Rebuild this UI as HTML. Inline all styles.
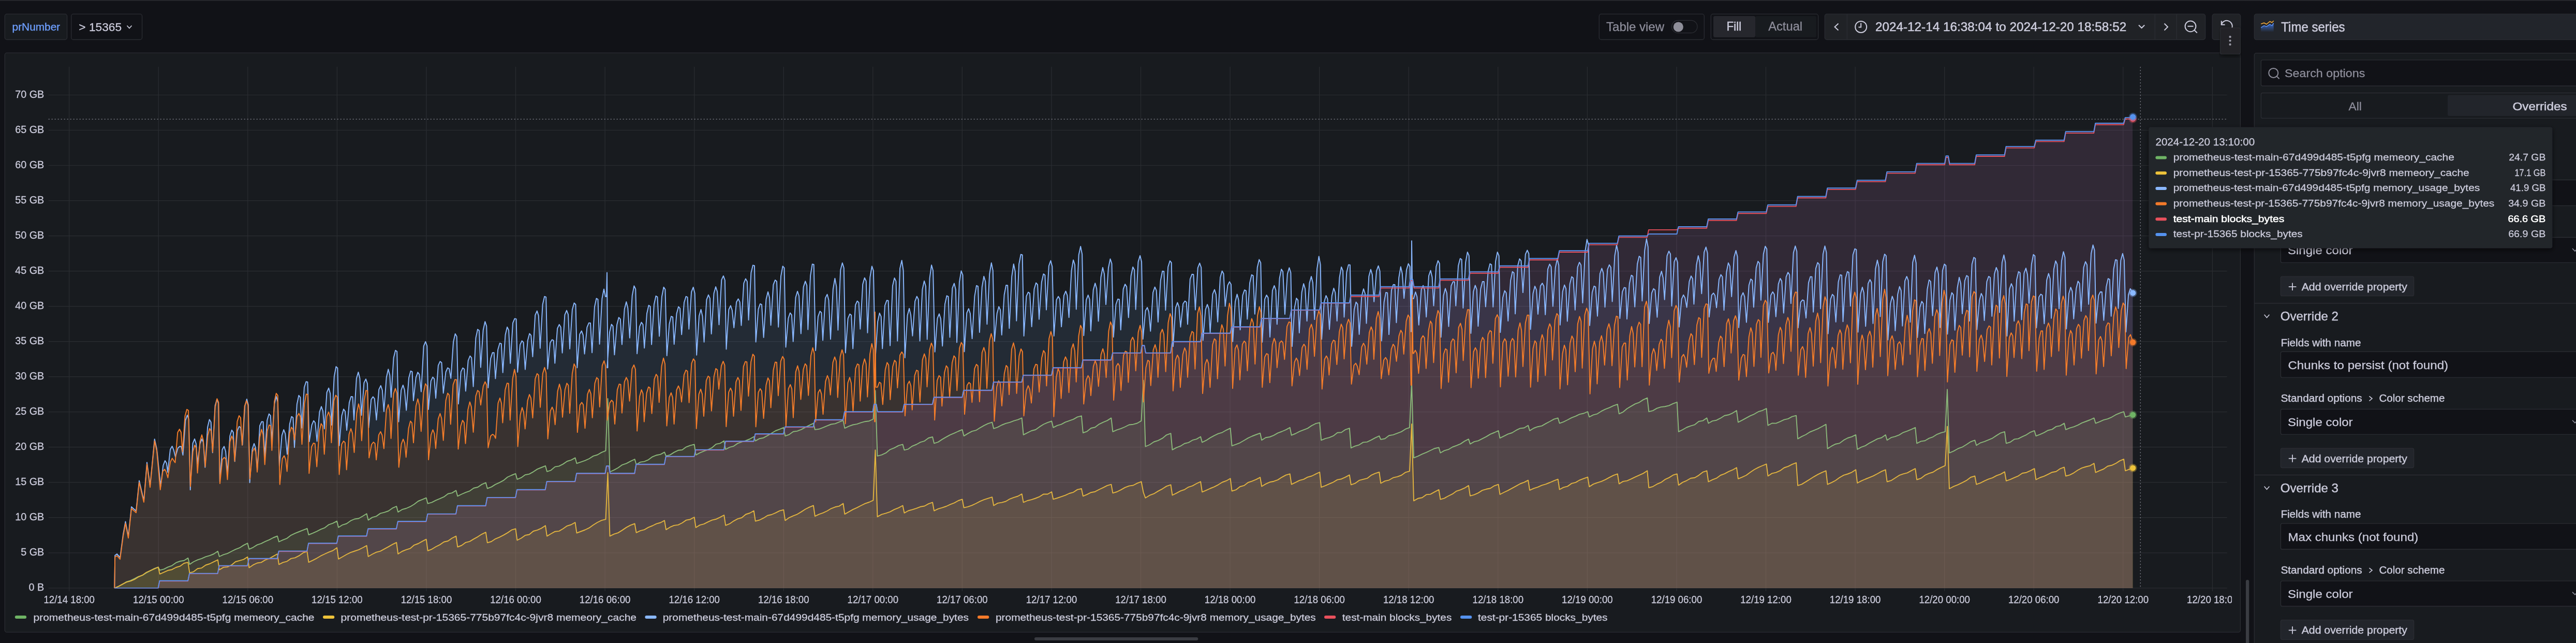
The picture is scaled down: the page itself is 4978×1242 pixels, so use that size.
<!DOCTYPE html><html><head><meta charset="utf-8"><style>html,body{margin:0;padding:0;background:#111217;overflow:hidden;width:4978px;height:1242px}text{font-family:"Liberation Sans",sans-serif;white-space:pre}</style></head><body><svg width="4978" height="1242" viewBox="0 0 4978 1242" style="display:block;will-change:transform;font-family:'Liberation Sans',sans-serif">
<defs><clipPath id="plot"><rect x="93.6" y="100" width="4210" height="1036.5"/></clipPath><clipPath id="panelc"><rect x="10" y="103" width="4303" height="1117"/></clipPath><filter id="sh" x="-5%" y="-10%" width="110%" height="125%"><feDropShadow dx="0" dy="3" stdDeviation="5" flood-color="#000" flood-opacity="0.6"/></filter></defs>
<rect x="0.0" y="0.0" width="4978.0" height="1242.0" rx="0" fill="#111217" />
<rect x="0.0" y="0.0" width="4978.0" height="1.5" rx="0" fill="#2a2b30" />
<rect x="9.3" y="27.2" width="120.3" height="49.3" rx="4" fill="#181b1f" stroke="#2b2d33" stroke-width="1.3" />
<text x="23.6" y="59.1" font-size="19.55" fill="#6e9fff" textLength="92.6" lengthAdjust="spacingAndGlyphs" stroke="#6e9fff" stroke-width="0.3" text-anchor="start" >prNumber</text>
<rect x="137.7" y="27.2" width="136.9" height="49.3" rx="4" fill="#111217" stroke="#2b2d33" stroke-width="1.3" />
<text x="152.3" y="60.0" font-size="22.21" fill="#ccccdc" textLength="82.8" lengthAdjust="spacingAndGlyphs" stroke="#ccccdc" stroke-width="0.28" text-anchor="start" >&gt; 15365</text>
<path d="M245.5,49.5 L250,54.5 L254.5,49.5" fill="none" stroke="#ccccdc" stroke-width="1.8"/>
<rect x="3090.3" y="27.2" width="203.0" height="49.3" rx="4" fill="#111217" stroke="#2b2d33" stroke-width="1.3" />
<text x="3104.1" y="60.1" font-size="23.32" fill="#8e8e9b" textLength="111.9" lengthAdjust="spacingAndGlyphs" stroke="#8e8e9b" stroke-width="0.28" text-anchor="start" >Table view</text>
<rect x="3230.5" y="39.3" width="49.5" height="24.4" rx="12.2" fill="#111217" stroke="#2d2f35" stroke-width="1.2" />
<circle cx="3243.3" cy="52" r="9.6" fill="#8e8e99"/>
<rect x="3306.3" y="27.2" width="207.3" height="49.3" rx="4" fill="#111217" stroke="#2b2d33" stroke-width="1.3" />
<rect x="3392.0" y="31.0" width="118.0" height="41.0" rx="3" fill="#181b1f" />
<rect x="3311.0" y="31.0" width="81.0" height="41.0" rx="3" fill="#26272d" />
<text x="3336.5" y="59.0" font-size="23.46" fill="#ccccdc" textLength="28.7" lengthAdjust="spacingAndGlyphs" stroke="#ccccdc" stroke-width="0.5" text-anchor="start" >Fill</text>
<text x="3417.2" y="59.0" font-size="23.46" fill="#8e8e9b" textLength="65.9" lengthAdjust="spacingAndGlyphs" stroke="#8e8e9b" stroke-width="0.28" text-anchor="start" >Actual</text>
<rect x="3526.3" y="27.2" width="735.3" height="49.3" rx="4" fill="#202226" stroke="#2b2d33" stroke-width="1.3" />
<line x1="3569.3" y1="27.5" x2="3569.3" y2="76.2" stroke="#2b2d33" stroke-width="1.3"/>
<line x1="4164.4" y1="27.5" x2="4164.4" y2="76.2" stroke="#2b2d33" stroke-width="1.3"/>
<line x1="4206.2" y1="27.5" x2="4206.2" y2="76.2" stroke="#2b2d33" stroke-width="1.3"/>
<path d="M3552.5,45.5 L3545.5,52 L3552.5,58.5" fill="none" stroke="#ccccdc" stroke-width="2"/>
<circle cx="3596.2" cy="51.9" r="11" fill="none" stroke="#ccccdc" stroke-width="2"/><path d="M3596.2,44.5 L3596.2,52.5 L3591.5,52.5" fill="none" stroke="#ccccdc" stroke-width="2"/>
<text x="3623.9" y="60.1" font-size="23.46" fill="#ccccdc" textLength="485.3" lengthAdjust="spacingAndGlyphs" stroke="#ccccdc" stroke-width="0.5" text-anchor="start" >2024-12-14 16:38:04 to 2024-12-20 18:58:52</text>
<path d="M4133,48.5 L4138.6,54 L4144.2,48.5" fill="none" stroke="#ccccdc" stroke-width="2"/>
<path d="M4182.5,45.5 L4189,52 L4182.5,58.5" fill="none" stroke="#ccccdc" stroke-width="2"/>
<circle cx="4233" cy="50.8" r="10.4" fill="none" stroke="#ccccdc" stroke-width="2"/><path d="M4240.5,58.3 L4245.8,63.5 M4227.5,50.8 L4238.5,50.8" fill="none" stroke="#ccccdc" stroke-width="2"/>
<rect x="4275.2" y="27.2" width="54.4" height="49.3" rx="4" fill="#202226" stroke="#2b2d33" stroke-width="1.3" />
<path d="M4292.6,47.5 A10.6,10.6 0 1 1 4313.3,54" fill="none" stroke="#ccccdc" stroke-width="2"/><path d="M4292.8,40.3 V47.8 H4299.6" fill="none" stroke="#ccccdc" stroke-width="2"/>
<rect x="9.3" y="102.2" width="4320.1" height="1119.0" rx="4" fill="#181b1f" stroke="#2b2d33" stroke-width="1.3" />
<path d="M93.6,183.5 H4303.7 M93.6,251.5 H4303.7 M93.6,319.5 H4303.7 M93.6,387.6 H4303.7 M93.6,455.6 H4303.7 M93.6,523.6 H4303.7 M93.6,591.6 H4303.7 M93.6,659.6 H4303.7 M93.6,727.7 H4303.7 M93.6,795.7 H4303.7 M93.6,863.7 H4303.7 M93.6,931.7 H4303.7 M93.6,999.7 H4303.7 M93.6,1067.8 H4303.7 M93.6,1135.8 H4303.7 M133.7,129 V1142 M306.3,129 V1142 M478.8,129 V1142 M651.4,129 V1142 M824.0,129 V1142 M996.5,129 V1142 M1169.1,129 V1142 M1341.7,129 V1142 M1514.3,129 V1142 M1686.8,129 V1142 M1859.4,129 V1142 M2032.0,129 V1142 M2204.5,129 V1142 M2377.1,129 V1142 M2549.7,129 V1142 M2722.2,129 V1142 M2894.8,129 V1142 M3067.4,129 V1142 M3240.0,129 V1142 M3412.5,129 V1142 M3585.1,129 V1142 M3757.7,129 V1142 M3930.2,129 V1142 M4102.8,129 V1142 M4275.4,129 V1142" stroke="#ccccdc" stroke-opacity="0.1" stroke-width="1.2" fill="none"/>
<text x="85.3" y="189.1" font-size="19.8" fill="#ccccdc" stroke="#ccccdc" stroke-width="0.28" text-anchor="end">70 GB</text>
<text x="85.3" y="257.1" font-size="19.8" fill="#ccccdc" stroke="#ccccdc" stroke-width="0.28" text-anchor="end">65 GB</text>
<text x="85.3" y="325.1" font-size="19.8" fill="#ccccdc" stroke="#ccccdc" stroke-width="0.28" text-anchor="end">60 GB</text>
<text x="85.3" y="393.2" font-size="19.8" fill="#ccccdc" stroke="#ccccdc" stroke-width="0.28" text-anchor="end">55 GB</text>
<text x="85.3" y="461.2" font-size="19.8" fill="#ccccdc" stroke="#ccccdc" stroke-width="0.28" text-anchor="end">50 GB</text>
<text x="85.3" y="529.2" font-size="19.8" fill="#ccccdc" stroke="#ccccdc" stroke-width="0.28" text-anchor="end">45 GB</text>
<text x="85.3" y="597.2" font-size="19.8" fill="#ccccdc" stroke="#ccccdc" stroke-width="0.28" text-anchor="end">40 GB</text>
<text x="85.3" y="665.2" font-size="19.8" fill="#ccccdc" stroke="#ccccdc" stroke-width="0.28" text-anchor="end">35 GB</text>
<text x="85.3" y="733.3" font-size="19.8" fill="#ccccdc" stroke="#ccccdc" stroke-width="0.28" text-anchor="end">30 GB</text>
<text x="85.3" y="801.3" font-size="19.8" fill="#ccccdc" stroke="#ccccdc" stroke-width="0.28" text-anchor="end">25 GB</text>
<text x="85.3" y="869.3" font-size="19.8" fill="#ccccdc" stroke="#ccccdc" stroke-width="0.28" text-anchor="end">20 GB</text>
<text x="85.3" y="937.3" font-size="19.8" fill="#ccccdc" stroke="#ccccdc" stroke-width="0.28" text-anchor="end">15 GB</text>
<text x="85.3" y="1005.3" font-size="19.8" fill="#ccccdc" stroke="#ccccdc" stroke-width="0.28" text-anchor="end">10 GB</text>
<text x="85.3" y="1073.4" font-size="19.8" fill="#ccccdc" stroke="#ccccdc" stroke-width="0.28" text-anchor="end">5 GB</text>
<text x="85.3" y="1141.4" font-size="19.8" fill="#ccccdc" stroke="#ccccdc" stroke-width="0.28" text-anchor="end">0 B</text>
<g clip-path="url(#panelc)">
<text x="133.7" y="1165.2" font-size="20.2" fill="#ccccdc" stroke="#ccccdc" stroke-width="0.28" text-anchor="middle" textLength="98.6" lengthAdjust="spacingAndGlyphs">12/14 18:00</text>
<text x="306.3" y="1165.2" font-size="20.2" fill="#ccccdc" stroke="#ccccdc" stroke-width="0.28" text-anchor="middle" textLength="98.6" lengthAdjust="spacingAndGlyphs">12/15 00:00</text>
<text x="478.8" y="1165.2" font-size="20.2" fill="#ccccdc" stroke="#ccccdc" stroke-width="0.28" text-anchor="middle" textLength="98.6" lengthAdjust="spacingAndGlyphs">12/15 06:00</text>
<text x="651.4" y="1165.2" font-size="20.2" fill="#ccccdc" stroke="#ccccdc" stroke-width="0.28" text-anchor="middle" textLength="98.6" lengthAdjust="spacingAndGlyphs">12/15 12:00</text>
<text x="824.0" y="1165.2" font-size="20.2" fill="#ccccdc" stroke="#ccccdc" stroke-width="0.28" text-anchor="middle" textLength="98.6" lengthAdjust="spacingAndGlyphs">12/15 18:00</text>
<text x="996.5" y="1165.2" font-size="20.2" fill="#ccccdc" stroke="#ccccdc" stroke-width="0.28" text-anchor="middle" textLength="98.6" lengthAdjust="spacingAndGlyphs">12/16 00:00</text>
<text x="1169.1" y="1165.2" font-size="20.2" fill="#ccccdc" stroke="#ccccdc" stroke-width="0.28" text-anchor="middle" textLength="98.6" lengthAdjust="spacingAndGlyphs">12/16 06:00</text>
<text x="1341.7" y="1165.2" font-size="20.2" fill="#ccccdc" stroke="#ccccdc" stroke-width="0.28" text-anchor="middle" textLength="98.6" lengthAdjust="spacingAndGlyphs">12/16 12:00</text>
<text x="1514.3" y="1165.2" font-size="20.2" fill="#ccccdc" stroke="#ccccdc" stroke-width="0.28" text-anchor="middle" textLength="98.6" lengthAdjust="spacingAndGlyphs">12/16 18:00</text>
<text x="1686.8" y="1165.2" font-size="20.2" fill="#ccccdc" stroke="#ccccdc" stroke-width="0.28" text-anchor="middle" textLength="98.6" lengthAdjust="spacingAndGlyphs">12/17 00:00</text>
<text x="1859.4" y="1165.2" font-size="20.2" fill="#ccccdc" stroke="#ccccdc" stroke-width="0.28" text-anchor="middle" textLength="98.6" lengthAdjust="spacingAndGlyphs">12/17 06:00</text>
<text x="2032.0" y="1165.2" font-size="20.2" fill="#ccccdc" stroke="#ccccdc" stroke-width="0.28" text-anchor="middle" textLength="98.6" lengthAdjust="spacingAndGlyphs">12/17 12:00</text>
<text x="2204.5" y="1165.2" font-size="20.2" fill="#ccccdc" stroke="#ccccdc" stroke-width="0.28" text-anchor="middle" textLength="98.6" lengthAdjust="spacingAndGlyphs">12/17 18:00</text>
<text x="2377.1" y="1165.2" font-size="20.2" fill="#ccccdc" stroke="#ccccdc" stroke-width="0.28" text-anchor="middle" textLength="98.6" lengthAdjust="spacingAndGlyphs">12/18 00:00</text>
<text x="2549.7" y="1165.2" font-size="20.2" fill="#ccccdc" stroke="#ccccdc" stroke-width="0.28" text-anchor="middle" textLength="98.6" lengthAdjust="spacingAndGlyphs">12/18 06:00</text>
<text x="2722.2" y="1165.2" font-size="20.2" fill="#ccccdc" stroke="#ccccdc" stroke-width="0.28" text-anchor="middle" textLength="98.6" lengthAdjust="spacingAndGlyphs">12/18 12:00</text>
<text x="2894.8" y="1165.2" font-size="20.2" fill="#ccccdc" stroke="#ccccdc" stroke-width="0.28" text-anchor="middle" textLength="98.6" lengthAdjust="spacingAndGlyphs">12/18 18:00</text>
<text x="3067.4" y="1165.2" font-size="20.2" fill="#ccccdc" stroke="#ccccdc" stroke-width="0.28" text-anchor="middle" textLength="98.6" lengthAdjust="spacingAndGlyphs">12/19 00:00</text>
<text x="3240.0" y="1165.2" font-size="20.2" fill="#ccccdc" stroke="#ccccdc" stroke-width="0.28" text-anchor="middle" textLength="98.6" lengthAdjust="spacingAndGlyphs">12/19 06:00</text>
<text x="3412.5" y="1165.2" font-size="20.2" fill="#ccccdc" stroke="#ccccdc" stroke-width="0.28" text-anchor="middle" textLength="98.6" lengthAdjust="spacingAndGlyphs">12/19 12:00</text>
<text x="3585.1" y="1165.2" font-size="20.2" fill="#ccccdc" stroke="#ccccdc" stroke-width="0.28" text-anchor="middle" textLength="98.6" lengthAdjust="spacingAndGlyphs">12/19 18:00</text>
<text x="3757.7" y="1165.2" font-size="20.2" fill="#ccccdc" stroke="#ccccdc" stroke-width="0.28" text-anchor="middle" textLength="98.6" lengthAdjust="spacingAndGlyphs">12/20 00:00</text>
<text x="3930.2" y="1165.2" font-size="20.2" fill="#ccccdc" stroke="#ccccdc" stroke-width="0.28" text-anchor="middle" textLength="98.6" lengthAdjust="spacingAndGlyphs">12/20 06:00</text>
<text x="4102.8" y="1165.2" font-size="20.2" fill="#ccccdc" stroke="#ccccdc" stroke-width="0.28" text-anchor="middle" textLength="98.6" lengthAdjust="spacingAndGlyphs">12/20 12:00</text>
<text x="4275.4" y="1165.2" font-size="20.2" fill="#ccccdc" stroke="#ccccdc" stroke-width="0.28" text-anchor="middle" textLength="98.6" lengthAdjust="spacingAndGlyphs">12/20 18:00</text>
</g>
<g clip-path="url(#plot)">
<path d="M221.3,1136.0 L229.4,1132.5 L237.1,1128.4 L244.7,1123.6 L252.3,1121.4 L260.0,1117.5 L267.6,1113.6 L275.3,1111.2 L282.9,1106.5 L290.5,1102.4 L298.2,1098.2 L305.8,1095.5 L308.8,1101.3 L316.6,1099.3 L324.4,1095.3 L332.2,1092.6 L340.0,1086.9 L347.8,1084.0 L355.6,1082.7 L363.4,1077.9 L366.4,1090.1 L374.1,1085.0 L381.9,1081.4 L389.7,1078.8 L397.5,1075.3 L405.3,1073.2 L413.1,1070.0 L420.9,1064.8 L423.9,1075.0 L431.7,1071.3 L439.5,1069.1 L447.3,1065.0 L455.1,1061.2 L462.9,1058.2 L470.7,1053.1 L478.4,1049.3 L481.4,1060.8 L489.2,1057.3 L497.0,1052.4 L504.8,1049.9 L512.6,1045.8 L520.4,1042.7 L528.2,1038.5 L536.0,1035.5 L539.0,1046.5 L546.8,1042.9 L554.6,1039.8 L562.4,1033.8 L570.2,1030.2 L578.0,1027.0 L585.8,1023.8 L593.5,1020.8 L596.5,1033.0 L604.3,1029.8 L612.1,1026.3 L619.9,1022.4 L627.7,1019.3 L635.5,1013.3 L643.3,1010.7 L651.1,1006.6 L654.1,1018.7 L661.9,1013.8 L669.7,1011.5 L677.5,1005.9 L685.3,1002.5 L693.1,1001.5 L700.9,997.0 L708.6,992.3 L711.6,1004.6 L719.4,999.4 L727.2,997.1 L735.0,991.6 L742.8,989.7 L750.6,987.0 L758.4,981.4 L766.2,978.0 L769.2,989.1 L777.0,984.2 L784.8,982.0 L792.6,978.7 L800.4,974.0 L808.2,968.0 L816.0,964.8 L823.7,961.7 L826.7,972.7 L834.5,970.4 L842.3,966.3 L850.1,963.2 L857.9,959.7 L865.7,953.7 L873.5,952.1 L881.3,947.4 L884.3,958.4 L892.1,954.5 L899.9,951.1 L907.7,948.3 L915.5,942.8 L923.3,941.0 L931.1,935.6 L938.8,932.3 L941.8,943.5 L949.6,940.6 L957.4,935.6 L965.2,932.2 L973.0,927.9 L980.8,921.5 L988.6,918.0 L996.4,914.9 L999.4,925.8 L1007.2,922.7 L1015.0,917.1 L1022.8,915.6 L1030.6,911.3 L1038.4,906.1 L1046.2,903.0 L1054.0,899.8 L1057.0,910.8 L1064.7,908.3 L1072.5,901.6 L1080.3,900.4 L1088.1,896.4 L1095.9,891.0 L1103.7,888.6 L1111.5,884.3 L1114.5,895.2 L1122.5,892.3 L1130.5,889.6 L1138.5,886.0 L1146.5,880.9 L1154.5,878.5 L1162.5,873.9 L1170.5,870.7 L1174.5,770.0 L1178.5,911.5 L1186.5,907.8 L1194.5,903.5 L1202.5,897.8 L1210.6,895.2 L1218.6,890.8 L1226.6,887.0 L1229.6,897.2 L1237.4,892.6 L1245.2,891.4 L1253.0,888.1 L1260.8,882.3 L1268.6,879.2 L1276.4,877.6 L1284.1,873.4 L1287.1,880.8 L1294.9,878.6 L1302.7,873.6 L1310.5,869.8 L1318.3,869.0 L1326.1,863.3 L1333.9,860.4 L1341.7,858.4 L1344.7,878.8 L1352.5,874.6 L1360.3,871.3 L1368.1,868.5 L1375.9,864.8 L1383.7,857.9 L1391.5,856.4 L1399.2,851.6 L1402.2,868.0 L1410.0,863.8 L1417.8,861.8 L1425.6,856.4 L1433.4,853.7 L1441.2,851.1 L1449.0,848.0 L1456.8,843.5 L1459.8,851.6 L1467.6,847.2 L1475.4,845.7 L1483.2,841.4 L1491.0,836.7 L1498.8,832.0 L1506.6,829.1 L1514.3,825.8 L1517.3,842.1 L1525.1,839.3 L1532.9,833.8 L1540.7,832.6 L1548.5,829.7 L1556.3,825.4 L1564.1,821.3 L1571.9,817.6 L1574.9,829.9 L1582.7,828.8 L1590.5,825.9 L1598.3,822.7 L1606.1,819.5 L1613.9,818.4 L1621.7,815.2 L1629.4,812.2 L1632.4,827.1 L1640.3,823.3 L1648.2,820.5 L1656.0,819.1 L1663.9,816.4 L1671.8,814.2 L1679.6,813.2 L1687.5,809.5 L1691.5,754.4 L1695.5,880.8 L1703.7,878.6 L1711.8,874.9 L1720.0,868.3 L1728.2,865.2 L1736.4,860.6 L1744.5,858.4 L1747.5,869.3 L1755.3,867.3 L1763.1,861.6 L1770.9,858.5 L1778.7,854.1 L1786.5,851.8 L1794.3,846.0 L1802.1,844.0 L1805.1,856.3 L1812.9,853.9 L1820.7,848.6 L1828.5,844.2 L1836.3,839.9 L1844.1,836.6 L1851.9,833.0 L1859.6,829.9 L1862.6,842.1 L1870.4,837.4 L1878.2,833.2 L1886.0,831.2 L1893.8,826.3 L1901.6,821.9 L1909.4,818.2 L1917.2,815.6 L1920.2,827.8 L1928.0,825.2 L1935.8,821.0 L1943.6,817.9 L1951.4,815.9 L1959.2,812.8 L1967.0,810.7 L1974.7,807.4 L1977.7,839.9 L1985.5,835.9 L1993.3,832.0 L2001.1,830.0 L2008.9,824.4 L2016.7,819.5 L2024.5,816.1 L2032.3,813.5 L2035.3,825.8 L2043.1,821.8 L2050.9,819.7 L2058.7,815.4 L2066.5,812.7 L2074.3,809.9 L2082.1,805.4 L2089.9,803.3 L2092.9,836.0 L2100.6,833.3 L2108.4,827.0 L2116.2,825.3 L2124.0,819.3 L2131.8,815.6 L2139.6,812.4 L2147.4,807.4 L2150.4,833.9 L2158.3,830.3 L2166.1,827.9 L2174.0,824.5 L2181.9,820.5 L2189.8,819.7 L2197.6,817.5 L2205.5,812.9 L2209.5,734.6 L2213.5,862.5 L2221.7,859.0 L2229.8,853.5 L2238.0,850.8 L2246.2,846.7 L2254.3,840.1 L2262.5,837.2 L2265.5,868.8 L2273.3,864.6 L2281.1,861.7 L2288.9,856.7 L2296.7,854.9 L2304.5,850.2 L2312.3,848.1 L2320.1,843.5 L2323.1,854.4 L2330.8,850.7 L2338.6,845.6 L2346.4,841.3 L2354.2,837.6 L2362.0,835.3 L2369.8,830.8 L2377.6,827.1 L2380.6,861.2 L2388.4,858.3 L2396.2,855.3 L2404.0,850.7 L2411.8,846.1 L2419.6,842.5 L2427.4,839.5 L2435.2,836.7 L2438.2,850.3 L2445.9,845.3 L2453.7,844.0 L2461.5,840.9 L2469.3,836.4 L2477.1,833.5 L2484.9,830.2 L2492.7,825.8 L2495.7,840.7 L2503.5,837.5 L2511.3,833.3 L2519.1,830.3 L2526.9,827.4 L2534.7,822.1 L2542.5,818.2 L2550.2,816.3 L2553.2,850.3 L2561.0,847.1 L2568.8,845.1 L2576.6,841.9 L2584.4,835.8 L2592.2,835.2 L2600.0,829.8 L2607.8,827.1 L2610.8,865.2 L2618.6,861.7 L2626.4,859.3 L2634.2,854.4 L2642.0,853.6 L2649.8,849.9 L2657.6,845.6 L2665.3,842.1 L2668.3,848.9 L2676.3,847.2 L2684.2,841.2 L2692.2,839.9 L2700.2,836.9 L2708.1,833.9 L2716.1,828.7 L2724.0,825.8 L2728.0,738.7 L2732.0,884.3 L2740.1,881.2 L2748.2,877.2 L2756.2,873.9 L2764.3,870.0 L2772.4,866.2 L2780.5,864.4 L2783.5,874.8 L2791.2,870.4 L2799.0,868.2 L2806.8,863.5 L2814.6,860.7 L2822.4,857.4 L2830.2,852.1 L2838.0,848.2 L2841.0,857.6 L2848.8,853.2 L2856.6,851.3 L2864.4,847.3 L2872.2,843.4 L2880.0,838.6 L2887.8,835.5 L2895.6,831.9 L2898.6,846.2 L2906.3,842.3 L2914.1,838.4 L2921.9,836.0 L2929.7,831.2 L2937.5,827.4 L2945.3,826.5 L2953.1,821.7 L2956.1,831.9 L2963.9,827.0 L2971.7,824.2 L2979.5,822.6 L2987.3,818.1 L2995.1,814.0 L3002.9,809.6 L3010.7,807.4 L3013.7,817.6 L3021.4,814.8 L3029.2,811.0 L3037.0,806.8 L3044.8,803.8 L3052.6,800.1 L3060.4,798.5 L3068.2,795.2 L3071.2,805.4 L3079.0,801.4 L3086.8,799.3 L3094.6,794.2 L3102.4,790.3 L3110.2,787.4 L3118.0,783.7 L3125.8,780.9 L3128.8,799.3 L3136.5,795.8 L3144.3,789.2 L3152.1,784.6 L3159.9,780.2 L3167.7,777.3 L3175.5,772.1 L3183.3,768.6 L3186.3,795.2 L3194.1,793.1 L3201.9,788.6 L3209.7,786.1 L3217.5,785.2 L3225.3,783.4 L3233.1,779.6 L3240.8,776.8 L3243.8,833.9 L3251.6,830.0 L3259.4,825.5 L3267.2,822.6 L3275.0,820.3 L3282.8,814.0 L3290.6,812.6 L3298.4,807.4 L3301.4,817.6 L3309.2,813.1 L3317.0,811.7 L3324.8,807.7 L3332.6,802.7 L3340.4,801.3 L3348.2,797.8 L3355.9,793.1 L3358.9,815.6 L3366.7,811.7 L3374.5,807.3 L3382.3,803.1 L3390.1,799.8 L3397.9,795.2 L3405.7,792.9 L3413.5,789.0 L3416.5,821.7 L3424.3,817.5 L3432.1,817.6 L3439.9,814.4 L3447.7,810.7 L3455.5,808.8 L3463.3,804.6 L3471.1,802.7 L3474.1,847.6 L3481.8,843.1 L3489.6,839.5 L3497.4,834.5 L3505.2,831.4 L3513.0,828.2 L3520.8,824.0 L3528.6,819.7 L3531.6,866.6 L3539.4,861.7 L3547.2,857.7 L3555.0,856.1 L3562.8,850.2 L3570.6,846.0 L3578.4,843.7 L3586.2,839.9 L3589.2,868.0 L3596.9,863.7 L3604.7,860.9 L3612.5,855.8 L3620.3,851.9 L3628.1,847.6 L3635.9,845.5 L3643.7,839.9 L3646.7,850.3 L3654.5,845.2 L3662.3,843.2 L3670.1,840.1 L3677.9,835.3 L3685.7,832.6 L3693.5,829.3 L3701.2,825.8 L3704.2,856.3 L3712.1,852.4 L3719.9,851.3 L3727.7,846.6 L3735.5,843.8 L3743.4,838.8 L3751.2,835.8 L3759.0,833.9 L3763.0,752.3 L3767.0,874.8 L3775.2,871.4 L3783.4,866.7 L3791.7,863.7 L3799.9,858.7 L3808.1,853.3 L3816.3,850.3 L3819.3,860.3 L3827.1,855.3 L3834.9,852.9 L3842.7,849.6 L3850.5,846.3 L3858.3,841.1 L3866.1,836.3 L3873.9,833.9 L3876.9,856.3 L3884.7,854.0 L3892.5,848.4 L3900.3,847.4 L3908.1,843.3 L3915.9,839.8 L3923.7,834.8 L3931.4,831.9 L3934.4,842.1 L3942.2,839.2 L3950.0,835.6 L3957.8,831.2 L3965.6,829.4 L3973.4,823.9 L3981.2,822.4 L3989.0,817.6 L3992.0,829.9 L3999.8,826.6 L4007.6,824.3 L4015.4,821.2 L4023.2,816.9 L4031.0,814.0 L4038.8,811.0 L4046.6,807.4 L4049.6,817.6 L4057.3,814.7 L4065.1,811.1 L4072.9,809.1 L4080.7,805.8 L4088.5,801.2 L4096.3,797.9 L4104.1,795.2 L4107.1,805.4 L4114.4,803.3 L4121.7,801.3 L4121.7,1136.0 L221.3,1136.0 Z" fill="#73BF69" fill-opacity="0.1" stroke="none"/>
<path d="M221.3,1136.0 L229.4,1132.4 L237.1,1128.1 L244.7,1124.4 L252.3,1122.4 L260.0,1119.2 L267.6,1114.3 L275.3,1110.9 L282.9,1105.5 L290.5,1102.2 L298.2,1098.8 L305.8,1095.5 L308.8,1108.8 L316.6,1105.4 L324.4,1101.8 L332.2,1100.2 L340.0,1096.0 L347.8,1093.7 L355.6,1088.0 L363.4,1086.1 L366.4,1106.5 L374.1,1104.3 L381.9,1098.2 L389.7,1097.1 L397.5,1091.5 L405.3,1089.0 L413.1,1085.2 L420.9,1081.3 L423.9,1100.6 L431.7,1095.9 L439.5,1095.1 L447.3,1091.4 L455.1,1085.0 L462.9,1082.8 L470.7,1080.6 L478.4,1075.7 L481.4,1096.5 L489.2,1091.2 L497.0,1087.5 L504.8,1086.4 L512.6,1081.6 L520.4,1078.8 L528.2,1074.4 L536.0,1070.0 L539.0,1090.4 L546.8,1086.4 L554.6,1084.3 L562.4,1078.9 L570.2,1077.4 L578.0,1073.4 L585.8,1067.7 L593.5,1065.1 L596.5,1086.1 L604.3,1082.4 L612.1,1078.3 L619.9,1073.7 L627.7,1070.0 L635.5,1066.3 L643.3,1063.5 L651.1,1057.9 L654.1,1079.9 L661.9,1075.5 L669.7,1071.0 L677.5,1067.2 L685.3,1064.5 L693.1,1061.8 L700.9,1058.0 L708.6,1053.8 L711.6,1075.0 L719.4,1070.5 L727.2,1066.7 L735.0,1064.6 L742.8,1060.4 L750.6,1056.1 L758.4,1051.7 L766.2,1047.8 L769.2,1070.0 L777.0,1065.0 L784.8,1061.9 L792.6,1059.4 L800.4,1052.8 L808.2,1050.0 L816.0,1045.7 L823.7,1041.7 L826.7,1063.9 L834.5,1060.8 L842.3,1056.0 L850.1,1052.1 L857.9,1046.8 L865.7,1045.0 L873.5,1039.5 L881.3,1035.6 L884.3,1056.5 L892.1,1053.5 L899.9,1047.8 L907.7,1045.9 L915.5,1041.1 L923.3,1036.8 L931.1,1031.8 L938.8,1028.2 L941.8,1048.4 L949.6,1046.0 L957.4,1040.8 L965.2,1037.7 L973.0,1033.6 L980.8,1029.1 L988.6,1023.7 L996.4,1021.3 L999.4,1043.5 L1007.2,1039.5 L1015.0,1033.9 L1022.8,1032.5 L1030.6,1026.0 L1038.4,1023.8 L1046.2,1020.4 L1054.0,1015.3 L1057.0,1035.6 L1064.7,1031.0 L1072.5,1026.7 L1080.3,1025.9 L1088.1,1021.3 L1095.9,1015.8 L1103.7,1013.5 L1111.5,1009.2 L1114.5,1029.5 L1122.5,1026.5 L1130.5,1023.5 L1138.5,1019.7 L1146.5,1014.0 L1154.5,1009.0 L1162.5,1005.2 L1170.5,1003.1 L1174.5,912.9 L1178.5,1035.6 L1186.5,1031.6 L1194.5,1029.1 L1202.5,1024.1 L1210.6,1018.6 L1218.6,1014.4 L1226.6,1011.5 L1229.6,1028.9 L1237.4,1025.1 L1245.2,1023.1 L1253.0,1018.7 L1260.8,1015.5 L1268.6,1011.7 L1276.4,1009.5 L1284.1,1005.4 L1287.1,1023.1 L1294.9,1018.2 L1302.7,1014.9 L1310.5,1013.9 L1318.3,1010.0 L1326.1,1004.6 L1333.9,1003.2 L1341.7,999.0 L1344.7,1019.0 L1352.5,1014.1 L1360.3,1012.1 L1368.1,1008.1 L1375.9,1004.6 L1383.7,1002.8 L1391.5,999.2 L1399.2,995.0 L1402.2,1014.9 L1410.0,1011.7 L1417.8,1006.3 L1425.6,1002.2 L1433.4,1000.0 L1441.2,993.5 L1449.0,991.0 L1456.8,986.7 L1459.8,1006.7 L1467.6,1004.5 L1475.4,1000.7 L1483.2,995.8 L1491.0,994.0 L1498.8,990.7 L1506.6,986.6 L1514.3,984.8 L1517.3,1005.4 L1525.1,999.8 L1532.9,996.3 L1540.7,993.3 L1548.5,988.6 L1556.3,983.5 L1564.1,979.7 L1571.9,976.5 L1574.9,997.2 L1582.7,993.4 L1590.5,990.6 L1598.3,987.0 L1606.1,982.3 L1613.9,979.3 L1621.7,977.6 L1629.4,972.5 L1632.4,993.1 L1640.3,988.6 L1648.2,984.2 L1656.0,980.7 L1663.9,976.5 L1671.8,972.7 L1679.6,970.0 L1687.5,966.3 L1691.5,869.3 L1695.5,998.2 L1703.7,993.6 L1711.8,991.4 L1720.0,988.7 L1728.2,984.2 L1736.4,980.8 L1744.5,976.5 L1747.5,990.8 L1755.3,986.5 L1763.1,984.4 L1770.9,981.9 L1778.7,978.8 L1786.5,977.5 L1794.3,973.2 L1802.1,970.4 L1805.1,986.7 L1812.9,982.9 L1820.7,980.7 L1828.5,978.0 L1836.3,974.3 L1844.1,971.4 L1851.9,967.0 L1859.6,964.4 L1862.6,980.6 L1870.4,978.9 L1878.2,976.1 L1886.0,972.5 L1893.8,968.3 L1901.6,965.2 L1909.4,962.6 L1917.2,960.2 L1920.2,976.5 L1928.0,971.9 L1935.8,970.6 L1943.6,968.5 L1951.4,963.8 L1959.2,960.8 L1967.0,958.5 L1974.7,954.2 L1977.7,970.4 L1985.5,967.0 L1993.3,965.1 L2001.1,962.5 L2008.9,959.3 L2016.7,954.4 L2024.5,954.5 L2032.3,950.0 L2035.3,964.4 L2043.1,962.0 L2050.9,959.3 L2058.7,956.7 L2066.5,953.0 L2074.3,950.8 L2082.1,945.6 L2089.9,944.0 L2092.9,958.3 L2100.6,955.1 L2108.4,951.2 L2116.2,949.7 L2124.0,945.5 L2131.8,941.8 L2139.6,937.8 L2147.4,935.7 L2150.4,952.3 L2158.3,950.0 L2166.1,946.2 L2174.0,941.7 L2181.9,938.6 L2189.8,937.5 L2197.6,933.3 L2205.5,930.3 L2209.5,951.0 L2213.5,961.8 L2221.7,956.7 L2229.8,953.7 L2238.0,948.6 L2246.2,944.3 L2254.3,939.1 L2262.5,936.4 L2265.5,956.5 L2273.3,952.6 L2281.1,948.4 L2288.9,945.8 L2296.7,940.8 L2304.5,938.4 L2312.3,934.0 L2320.1,930.3 L2323.1,950.4 L2330.8,947.1 L2338.6,943.5 L2346.4,940.3 L2354.2,936.3 L2362.0,931.5 L2369.8,928.7 L2377.6,924.2 L2380.6,948.5 L2388.4,946.2 L2396.2,940.0 L2404.0,937.9 L2411.8,932.0 L2419.6,929.3 L2427.4,926.2 L2435.2,922.1 L2438.2,939.5 L2445.9,934.9 L2453.7,931.3 L2461.5,929.7 L2469.3,926.9 L2477.1,921.8 L2484.9,917.7 L2492.7,915.3 L2495.7,935.6 L2503.5,931.9 L2511.3,927.9 L2519.1,925.8 L2526.9,921.7 L2534.7,919.5 L2542.5,915.7 L2550.2,912.0 L2553.2,941.2 L2561.0,938.2 L2568.8,934.7 L2576.6,931.3 L2584.4,926.6 L2592.2,925.2 L2600.0,921.7 L2607.8,917.4 L2610.8,936.4 L2618.6,933.7 L2626.4,927.9 L2634.2,925.9 L2642.0,923.9 L2649.8,917.9 L2657.6,914.3 L2665.3,912.0 L2668.3,933.5 L2676.3,929.2 L2684.2,927.3 L2692.2,922.7 L2700.2,920.8 L2708.1,918.0 L2716.1,912.3 L2724.0,910.1 L2728.0,819.0 L2732.0,967.4 L2740.1,962.8 L2748.2,961.2 L2756.2,955.4 L2764.3,954.6 L2772.4,950.1 L2780.5,945.9 L2783.5,964.6 L2791.2,962.3 L2799.0,958.0 L2806.8,954.2 L2814.6,948.6 L2822.4,946.2 L2830.2,942.7 L2838.0,937.9 L2841.0,957.8 L2848.8,955.6 L2856.6,952.1 L2864.4,947.1 L2872.2,944.8 L2880.0,943.3 L2887.8,938.3 L2895.6,935.7 L2898.6,955.0 L2906.3,951.0 L2914.1,947.4 L2921.9,943.2 L2929.7,938.9 L2937.5,934.5 L2945.3,931.6 L2953.1,927.7 L2956.1,946.9 L2963.9,943.4 L2971.7,940.9 L2979.5,937.3 L2987.3,935.1 L2995.1,932.0 L3002.9,928.6 L3010.7,925.7 L3013.7,945.5 L3021.4,941.4 L3029.2,939.4 L3037.0,933.9 L3044.8,931.9 L3052.6,927.3 L3060.4,924.4 L3068.2,921.6 L3071.2,940.1 L3079.0,935.1 L3086.8,932.4 L3094.6,929.8 L3102.4,926.3 L3110.2,922.1 L3118.0,918.1 L3125.8,915.4 L3128.8,934.6 L3136.5,929.9 L3144.3,928.6 L3152.1,925.2 L3159.9,921.4 L3167.7,917.9 L3175.5,914.4 L3183.3,909.3 L3186.3,942.0 L3194.1,939.8 L3201.9,935.2 L3209.7,931.9 L3217.5,926.2 L3225.3,922.6 L3233.1,917.7 L3240.8,915.4 L3243.8,937.1 L3251.6,931.6 L3259.4,928.3 L3267.2,923.7 L3275.0,922.8 L3282.8,918.1 L3290.6,911.9 L3298.4,909.3 L3301.4,930.5 L3309.2,926.7 L3317.0,923.7 L3324.8,918.0 L3332.6,915.2 L3340.4,910.9 L3348.2,907.7 L3355.9,903.2 L3358.9,924.8 L3366.7,921.6 L3374.5,918.0 L3382.3,912.2 L3390.1,907.0 L3397.9,902.8 L3405.7,899.5 L3413.5,896.3 L3416.5,919.5 L3424.3,914.4 L3432.1,912.6 L3439.9,909.2 L3447.7,903.5 L3455.5,900.8 L3463.3,896.9 L3471.1,893.8 L3474.1,937.9 L3481.8,935.4 L3489.6,930.6 L3497.4,925.7 L3505.2,920.8 L3513.0,916.4 L3520.8,912.6 L3528.6,909.3 L3531.6,935.7 L3539.4,932.2 L3547.2,928.0 L3555.0,922.3 L3562.8,917.9 L3570.6,915.5 L3578.4,912.3 L3586.2,907.3 L3589.2,933.0 L3596.9,928.9 L3604.7,925.5 L3612.5,922.4 L3620.3,919.2 L3628.1,915.0 L3635.9,910.6 L3643.7,907.3 L3646.7,930.5 L3654.5,928.2 L3662.3,923.2 L3670.1,918.2 L3677.9,915.3 L3685.7,913.3 L3693.5,909.1 L3701.2,905.2 L3704.2,926.5 L3712.1,923.9 L3719.9,917.9 L3727.7,914.4 L3735.5,912.0 L3743.4,906.9 L3751.2,902.8 L3759.0,899.3 L3763.0,823.6 L3767.0,944.0 L3775.2,939.7 L3783.4,936.3 L3791.7,932.4 L3799.9,928.2 L3808.1,922.0 L3816.3,919.5 L3819.3,935.7 L3827.1,932.8 L3834.9,928.8 L3842.7,925.4 L3850.5,922.9 L3858.3,918.7 L3866.1,915.8 L3873.9,911.4 L3876.9,928.9 L3884.7,926.1 L3892.5,922.6 L3900.3,919.3 L3908.1,914.0 L3915.9,912.7 L3923.7,909.2 L3931.4,905.2 L3934.4,926.5 L3942.2,922.5 L3950.0,919.9 L3957.8,916.1 L3965.6,912.2 L3973.4,910.7 L3981.2,905.3 L3989.0,902.4 L3992.0,919.5 L3999.8,917.3 L4007.6,913.3 L4015.4,908.0 L4023.2,903.9 L4031.0,901.5 L4038.8,899.6 L4046.6,895.0 L4049.6,912.6 L4057.3,909.1 L4065.1,906.0 L4072.9,900.5 L4080.7,898.8 L4088.5,895.2 L4096.3,890.1 L4104.1,886.9 L4107.1,909.3 L4114.4,906.7 L4121.7,904.0 L4121.7,1136.0 L221.3,1136.0 Z" fill="#F2CC0C" fill-opacity="0.1" stroke="none"/>
<path d="M221.3,1136.0 L222.2,1072.7 L226.0,1070.0 L232.0,1076.8 L238.0,1031.9 L242.5,1007.4 L248.0,1036.0 L254.0,978.9 L263.0,987.0 L269.0,928.5 L278.0,966.6 L284.0,893.1 L290.0,938.0 L298.7,848.2 L303.0,867.3 L310.5,939.2 L315.3,899.0 L318.9,889.8 L321.9,894.7 L324.2,912.2 L329.0,868.3 L332.6,861.9 L335.6,868.9 L339.0,882.6 L343.8,865.5 L347.4,862.2 L350.4,862.7 L353.5,879.1 L358.3,812.1 L361.9,801.9 L364.9,810.0 L367.7,946.3 L372.5,856.3 L376.1,847.8 L379.1,857.5 L381.6,896.0 L386.4,857.3 L390.0,847.9 L393.0,854.6 L396.3,902.7 L401.1,825.3 L404.7,810.3 L407.7,815.4 L410.8,874.4 L415.6,783.5 L419.2,771.2 L422.2,779.4 L424.7,930.2 L429.5,868.3 L433.1,862.3 L436.1,872.0 L439.5,914.7 L444.3,842.0 L447.9,830.7 L450.9,835.1 L453.7,891.4 L458.5,832.1 L462.1,823.8 L465.1,825.8 L468.5,859.5 L473.3,783.8 L476.9,771.0 L479.9,782.3 L482.6,932.3 L487.4,867.5 L491.0,856.7 L494.0,865.0 L497.2,908.2 L502.0,822.5 L505.6,814.4 L508.6,814.7 L511.4,882.9 L516.2,811.8 L519.8,799.5 L522.8,802.9 L525.4,851.1 L530.2,779.9 L533.8,765.4 L536.8,776.6 L539.9,900.4 L544.7,841.1 L548.3,830.0 L551.3,837.7 L555.0,877.5 L559.8,818.9 L563.4,804.6 L566.4,806.8 L569.0,864.3 L573.8,780.9 L577.4,763.8 L580.4,767.3 L583.1,826.8 L587.9,748.2 L591.5,737.3 L594.5,738.0 L597.7,853.1 L602.5,820.8 L606.1,812.7 L609.1,816.5 L612.6,852.5 L617.4,795.9 L621.0,785.2 L624.0,793.9 L626.8,828.3 L631.6,757.8 L635.2,749.6 L638.2,760.2 L641.0,821.3 L645.8,727.1 L649.4,708.3 L652.4,711.0 L655.6,860.9 L660.4,802.7 L664.0,790.2 L667.0,794.5 L670.1,831.2 L674.9,777.8 L678.5,766.0 L681.5,766.5 L684.0,811.2 L688.8,731.1 L692.4,718.8 L695.4,730.8 L698.6,802.3 L703.4,739.4 L707.0,732.2 L710.0,740.9 L712.4,826.4 L717.2,771.8 L720.8,766.4 L723.8,770.1 L727.4,811.2 L732.2,752.3 L735.8,744.8 L738.8,753.8 L741.9,794.9 L746.7,729.0 L750.3,713.3 L753.3,724.6 L755.8,767.4 L760.6,691.2 L764.2,676.7 L767.2,679.1 L770.4,814.7 L775.2,753.5 L778.8,743.9 L781.8,753.2 L785.2,792.6 L790.0,729.9 L793.6,716.7 L796.6,718.2 L798.9,774.0 L803.7,729.4 L807.3,719.1 L810.3,723.1 L813.9,756.6 L818.7,668.6 L822.3,659.9 L825.3,668.3 L827.9,791.0 L832.7,735.9 L836.3,728.4 L839.3,731.8 L842.1,769.2 L846.9,705.8 L850.5,698.2 L853.5,700.5 L856.7,759.5 L861.5,718.5 L865.1,710.5 L868.1,712.3 L871.3,730.9 L876.1,660.1 L879.7,644.7 L882.7,649.9 L885.9,780.2 L890.7,718.1 L894.3,710.7 L897.3,713.0 L899.9,755.5 L904.7,696.5 L908.3,687.5 L911.3,691.1 L914.6,746.8 L919.4,652.9 L923.0,636.3 L926.0,638.5 L928.9,709.6 L933.7,637.5 L937.3,621.1 L940.3,630.1 L943.3,749.1 L948.1,692.6 L951.7,681.1 L954.7,681.2 L957.4,731.4 L962.2,675.2 L965.8,662.8 L968.8,663.9 L971.7,719.7 L976.5,646.7 L980.1,631.7 L983.1,637.6 L986.2,701.9 L991.0,623.8 L994.6,615.4 L997.6,616.1 L1000.2,718.9 L1005.0,665.9 L1008.6,658.3 L1011.6,661.3 L1014.9,713.6 L1019.7,657.8 L1023.3,644.3 L1026.3,647.9 L1029.4,689.0 L1034.2,608.7 L1037.8,600.6 L1040.8,609.8 L1043.8,672.7 L1048.6,588.1 L1052.2,572.7 L1055.2,573.8 L1058.3,712.7 L1063.1,662.1 L1066.7,656.2 L1069.7,657.6 L1072.3,701.6 L1077.1,634.3 L1080.7,626.8 L1083.7,631.9 L1086.6,681.7 L1091.4,608.2 L1095.0,599.6 L1098.0,607.3 L1101.1,673.9 L1105.9,598.0 L1109.5,585.3 L1112.5,588.2 L1115.4,710.4 L1120.2,645.8 L1123.8,639.2 L1126.8,647.1 L1129.6,683.7 L1134.4,632.2 L1138.0,623.7 L1141.0,623.9 L1144.1,681.3 L1148.9,593.0 L1152.5,576.4 L1155.5,578.2 L1158.6,664.7 L1163.4,576.7 L1167.0,558.5 L1170.0,572.7 L1172.0,572.7 L1173.0,526.5 L1174.5,710.2 L1173.2,710.2 L1178.0,641.9 L1181.6,626.4 L1184.6,630.1 L1187.4,685.4 L1192.2,626.9 L1195.8,613.1 L1198.8,616.4 L1201.9,665.5 L1206.7,597.0 L1210.3,583.0 L1213.3,594.9 L1216.9,652.8 L1221.7,570.9 L1225.3,552.1 L1228.3,558.5 L1231.1,683.2 L1235.9,631.2 L1239.5,622.6 L1242.5,626.8 L1245.2,672.2 L1250.0,605.8 L1253.6,589.8 L1256.6,591.7 L1259.1,665.5 L1263.9,588.0 L1267.5,571.8 L1270.5,573.6 L1274.1,649.5 L1278.9,573.3 L1282.5,554.6 L1285.5,559.0 L1288.7,687.1 L1293.5,625.4 L1297.1,611.0 L1300.1,612.3 L1302.7,665.0 L1307.5,606.1 L1311.1,592.4 L1314.1,595.6 L1317.2,646.2 L1322.0,584.2 L1325.6,572.7 L1328.6,574.0 L1331.3,635.7 L1336.1,563.8 L1339.7,554.8 L1342.7,566.6 L1346.2,685.9 L1351.0,610.2 L1354.6,597.8 L1357.6,611.0 L1360.6,660.8 L1365.4,578.9 L1369.0,569.6 L1372.0,576.3 L1374.7,645.0 L1379.5,566.7 L1383.1,553.9 L1386.1,563.2 L1389.5,627.2 L1394.3,540.6 L1397.9,532.9 L1400.9,541.3 L1403.5,674.5 L1408.3,598.0 L1411.9,590.3 L1414.9,599.5 L1418.3,633.1 L1423.1,583.5 L1426.7,577.3 L1429.7,583.4 L1432.5,628.6 L1437.3,547.0 L1440.9,538.4 L1443.9,543.8 L1446.6,618.1 L1451.4,526.8 L1455.0,512.3 L1458.0,513.1 L1460.6,660.6 L1465.4,597.1 L1469.0,586.9 L1472.0,588.4 L1475.7,651.9 L1480.5,577.9 L1484.1,563.6 L1487.1,575.0 L1489.6,628.2 L1494.4,549.8 L1498.0,540.9 L1501.0,543.4 L1504.2,631.8 L1509.0,533.7 L1512.6,514.2 L1515.6,517.4 L1518.5,670.6 L1523.3,614.8 L1526.9,604.4 L1529.9,608.4 L1532.7,659.7 L1537.5,574.8 L1541.1,562.6 L1544.1,571.7 L1547.8,644.5 L1552.6,554.4 L1556.2,543.2 L1559.2,551.3 L1561.3,636.6 L1566.1,532.3 L1569.7,510.3 L1572.7,511.0 L1576.1,677.2 L1580.9,611.4 L1584.5,601.3 L1587.5,603.9 L1590.1,657.4 L1594.9,575.8 L1598.5,568.6 L1601.5,579.6 L1605.0,655.2 L1609.8,559.0 L1613.4,537.7 L1616.4,553.6 L1619.4,637.6 L1624.2,521.5 L1627.8,507.8 L1630.8,517.5 L1633.8,681.6 L1638.6,615.2 L1642.2,606.6 L1645.2,608.7 L1648.2,673.5 L1653.0,589.2 L1656.6,581.5 L1659.6,584.4 L1662.4,635.6 L1667.2,549.1 L1670.8,536.6 L1673.8,543.0 L1676.5,642.9 L1681.3,535.4 L1684.9,514.3 L1687.9,522.9 L1691.3,696.1 L1696.1,621.3 L1699.7,604.8 L1702.7,611.4 L1705.2,673.4 L1710.0,590.0 L1713.6,580.3 L1716.6,580.8 L1720.1,667.6 L1724.9,552.3 L1728.5,536.9 L1731.5,543.3 L1734.3,658.6 L1739.1,518.4 L1742.7,503.0 L1745.7,523.0 L1748.7,691.1 L1753.5,609.3 L1757.1,595.7 L1760.1,608.6 L1763.4,648.8 L1768.2,581.8 L1771.8,572.4 L1774.8,578.2 L1777.6,658.6 L1782.4,559.1 L1786.0,542.6 L1789.0,552.9 L1791.7,655.5 L1796.5,537.6 L1800.1,511.9 L1803.1,522.7 L1806.6,679.8 L1811.4,615.0 L1815.0,606.2 L1818.0,616.1 L1821.2,668.4 L1826.0,587.5 L1829.6,571.3 L1832.6,572.8 L1835.5,651.5 L1840.3,556.6 L1843.9,547.3 L1846.9,559.2 L1849.1,661.4 L1853.9,544.9 L1857.5,523.3 L1860.5,531.0 L1863.5,679.4 L1868.3,604.4 L1871.9,596.2 L1874.9,605.5 L1878.6,654.1 L1883.4,572.1 L1887.0,551.6 L1890.0,553.1 L1892.9,642.0 L1897.7,554.5 L1901.3,533.7 L1904.3,544.1 L1907.4,626.2 L1912.2,529.1 L1915.8,507.6 L1918.8,522.8 L1921.8,659.3 L1926.6,605.5 L1930.2,592.2 L1933.2,599.0 L1935.8,647.0 L1940.6,569.5 L1944.2,550.9 L1947.2,551.2 L1950.4,634.3 L1955.2,534.2 L1958.8,510.0 L1961.8,524.5 L1964.3,619.7 L1969.1,510.2 L1972.7,491.5 L1975.7,492.4 L1978.6,649.0 L1983.4,572.1 L1987.0,564.4 L1990.0,566.5 L1993.7,631.0 L1998.5,558.2 L2002.1,546.3 L2005.1,549.6 L2008.0,616.8 L2012.8,545.2 L2016.4,529.1 L2019.4,531.6 L2022.0,598.5 L2026.8,513.7 L2030.4,503.5 L2033.4,515.0 L2036.7,649.0 L2041.5,579.1 L2045.1,572.6 L2048.1,577.7 L2051.1,631.1 L2055.9,570.8 L2059.5,562.4 L2062.5,570.6 L2065.7,613.3 L2070.5,522.8 L2074.1,502.1 L2077.1,511.5 L2079.8,597.4 L2084.6,492.5 L2088.2,476.0 L2091.2,491.1 L2094.3,648.2 L2099.1,579.3 L2102.7,570.0 L2105.7,578.3 L2107.9,639.1 L2112.7,560.0 L2116.3,547.0 L2119.3,557.6 L2122.6,620.4 L2127.4,535.5 L2131.0,516.7 L2134.0,529.2 L2137.1,588.1 L2141.9,517.5 L2145.5,500.1 L2148.5,509.3 L2151.7,651.1 L2156.5,588.0 L2160.1,577.7 L2163.1,578.5 L2165.8,637.2 L2170.6,558.7 L2174.2,548.9 L2177.2,553.8 L2180.8,613.4 L2185.6,532.7 L2189.2,515.7 L2192.2,521.4 L2194.7,597.8 L2199.5,505.7 L2203.1,493.8 L2206.1,505.8 L2208.7,655.0 L2213.5,600.3 L2217.1,593.9 L2220.1,602.4 L2223.3,639.7 L2228.1,565.0 L2231.7,554.4 L2234.7,561.2 L2237.9,622.0 L2242.7,541.9 L2246.3,523.7 L2249.3,524.2 L2252.4,599.1 L2257.2,515.5 L2260.8,504.0 L2263.8,507.3 L2267.0,669.3 L2271.8,594.6 L2275.4,584.4 L2278.4,592.9 L2281.4,631.8 L2286.2,586.8 L2289.8,581.5 L2292.8,583.8 L2295.0,626.4 L2299.8,539.0 L2303.4,529.8 L2306.4,530.3 L2309.9,598.5 L2314.7,517.3 L2318.3,508.2 L2321.3,516.7 L2324.7,657.5 L2329.5,598.0 L2333.1,588.1 L2336.1,596.6 L2338.6,642.8 L2343.4,568.0 L2347.0,559.4 L2350.0,569.1 L2353.2,621.8 L2358.0,536.1 L2361.6,523.4 L2364.6,528.7 L2367.6,591.6 L2372.4,551.2 L2376.0,544.2 L2379.0,549.4 L2382.2,659.9 L2387.0,582.7 L2390.6,568.3 L2393.6,579.6 L2396.6,637.1 L2401.4,570.5 L2405.0,560.1 L2408.0,561.7 L2410.3,616.4 L2415.1,546.5 L2418.7,530.8 L2421.7,532.4 L2424.9,606.7 L2429.7,516.5 L2433.3,501.3 L2436.3,507.6 L2439.2,660.9 L2444.0,578.1 L2447.6,569.9 L2450.6,574.9 L2454.1,651.0 L2458.9,561.0 L2462.5,551.7 L2465.5,560.5 L2467.8,626.4 L2472.6,537.8 L2476.2,519.9 L2479.2,524.8 L2483.0,607.0 L2487.8,529.3 L2491.4,517.1 L2494.4,526.8 L2496.9,669.1 L2501.7,594.0 L2505.3,576.0 L2508.3,579.8 L2510.8,643.0 L2515.6,564.7 L2519.2,548.0 L2522.2,558.1 L2525.6,620.1 L2530.4,546.9 L2534.0,534.0 L2537.0,546.0 L2540.3,617.1 L2545.1,519.1 L2548.7,495.1 L2551.7,511.3 L2554.1,655.3 L2558.9,582.9 L2562.5,570.9 L2565.5,577.3 L2569.0,636.2 L2573.8,571.2 L2577.4,556.7 L2580.4,565.2 L2583.7,620.0 L2588.5,536.1 L2592.1,515.6 L2595.1,523.1 L2597.5,612.5 L2602.3,526.0 L2605.9,511.4 L2608.9,511.6 L2612.1,668.9 L2616.9,597.8 L2620.5,583.5 L2623.5,587.6 L2626.6,645.9 L2631.4,571.7 L2635.0,558.0 L2638.0,567.2 L2640.5,624.6 L2645.3,533.8 L2648.9,520.5 L2651.9,530.6 L2655.2,582.8 L2660.0,523.3 L2663.6,513.4 L2666.6,523.7 L2669.8,658.4 L2674.6,583.5 L2678.2,564.9 L2681.2,565.6 L2684.1,646.1 L2688.9,560.4 L2692.5,549.8 L2695.5,550.0 L2698.4,623.3 L2703.2,536.5 L2706.8,515.3 L2709.8,528.3 L2713.2,576.4 L2718.0,521.3 L2721.6,509.3 L2724.6,515.0 L2727.0,640.7 L2727.0,640.7 L2728.0,465.2 L2729.5,576.7 L2731.8,576.7 L2735.4,564.0 L2738.4,573.3 L2741.8,627.8 L2746.6,559.1 L2750.2,551.5 L2753.2,560.9 L2756.2,612.3 L2761.0,532.8 L2764.6,522.4 L2767.6,535.2 L2770.5,590.6 L2775.3,515.0 L2778.9,503.5 L2781.9,509.1 L2784.6,651.3 L2789.4,571.1 L2793.0,557.2 L2796.0,566.4 L2799.5,630.6 L2804.3,551.9 L2807.9,544.2 L2810.9,544.4 L2813.3,590.8 L2818.1,513.2 L2821.7,499.4 L2824.7,501.3 L2827.4,595.0 L2832.2,506.7 L2835.8,486.9 L2838.8,493.9 L2842.4,643.9 L2847.2,563.2 L2850.8,551.1 L2853.8,559.3 L2856.4,630.1 L2861.2,558.2 L2864.8,544.0 L2867.8,544.0 L2870.9,592.5 L2875.7,524.0 L2879.3,509.5 L2882.3,511.4 L2885.3,592.9 L2890.1,504.7 L2893.7,486.9 L2896.7,494.1 L2899.3,642.1 L2904.1,574.8 L2907.7,561.5 L2910.7,565.7 L2914.3,620.0 L2919.1,541.9 L2922.7,524.7 L2925.7,527.2 L2928.1,606.3 L2932.9,513.6 L2936.5,500.0 L2939.5,503.7 L2943.0,565.1 L2947.8,491.2 L2951.4,483.3 L2954.4,490.0 L2957.7,636.3 L2962.5,566.7 L2966.1,552.8 L2969.1,559.8 L2972.0,606.9 L2976.8,552.4 L2980.4,547.0 L2983.4,552.8 L2986.2,607.9 L2991.0,519.8 L2994.6,510.2 L2997.6,515.4 L3000.9,591.8 L3005.7,517.0 L3009.3,500.0 L3012.3,512.2 L3014.8,627.7 L3019.6,563.6 L3023.2,550.4 L3026.2,557.6 L3028.8,620.5 L3033.6,548.8 L3037.2,534.4 L3040.2,536.9 L3043.8,598.8 L3048.6,516.0 L3052.2,506.7 L3055.2,511.9 L3058.4,585.0 L3063.2,485.5 L3066.8,462.5 L3069.8,472.8 L3072.0,628.7 L3076.8,565.0 L3080.4,552.7 L3083.4,554.3 L3087.0,610.6 L3091.8,528.8 L3095.4,518.3 L3098.4,527.2 L3101.5,593.3 L3106.3,520.5 L3109.9,511.5 L3112.9,516.4 L3115.6,582.5 L3120.4,494.0 L3124.0,473.5 L3127.0,487.8 L3130.3,615.1 L3135.1,563.7 L3138.7,555.4 L3141.7,556.2 L3144.0,616.3 L3148.8,547.8 L3152.4,531.6 L3155.4,533.6 L3159.2,592.7 L3164.0,510.0 L3167.6,495.0 L3170.6,497.4 L3173.4,581.2 L3178.2,484.1 L3181.8,461.3 L3184.8,477.2 L3187.0,625.0 L3191.8,566.2 L3195.4,557.6 L3198.4,560.3 L3202.4,612.7 L3207.2,535.3 L3210.8,524.0 L3213.8,536.7 L3216.7,578.7 L3221.5,494.2 L3225.1,485.2 L3228.1,490.8 L3230.5,591.1 L3235.3,505.7 L3238.9,497.7 L3241.9,506.8 L3244.8,631.6 L3249.6,577.7 L3253.2,569.7 L3256.2,575.2 L3259.6,593.8 L3264.4,543.7 L3268.0,533.1 L3271.0,538.5 L3273.4,587.5 L3278.2,512.0 L3281.8,493.9 L3284.8,507.0 L3288.3,567.2 L3293.1,487.1 L3296.7,477.2 L3299.7,488.9 L3302.8,612.3 L3307.6,570.1 L3311.2,566.1 L3314.2,570.8 L3317.1,594.4 L3321.9,539.8 L3325.5,530.5 L3328.5,534.8 L3331.5,599.1 L3336.3,525.7 L3339.9,507.8 L3342.9,514.1 L3346.2,573.0 L3351.0,496.4 L3354.6,483.9 L3357.6,495.7 L3360.0,632.8 L3364.8,572.9 L3368.4,565.3 L3371.4,573.2 L3374.9,622.6 L3379.7,551.0 L3383.3,539.0 L3386.3,541.6 L3388.9,593.4 L3393.7,517.2 L3397.3,504.8 L3400.3,508.8 L3402.9,579.8 L3407.7,490.8 L3411.3,475.6 L3414.3,481.0 L3417.3,622.7 L3422.1,570.2 L3425.7,563.8 L3428.7,568.4 L3431.8,611.7 L3436.6,548.9 L3440.2,537.8 L3443.2,543.0 L3446.8,604.6 L3451.6,534.8 L3455.2,526.1 L3458.2,530.5 L3460.9,586.3 L3465.7,488.2 L3469.3,475.2 L3472.3,485.7 L3474.8,633.2 L3479.6,583.8 L3483.2,579.3 L3486.2,580.7 L3490.1,614.3 L3494.9,546.1 L3498.5,534.4 L3501.5,534.7 L3504.1,602.7 L3508.9,518.6 L3512.5,507.1 L3515.5,510.6 L3518.1,596.2 L3522.9,490.9 L3526.5,475.1 L3529.5,487.7 L3532.6,644.6 L3537.4,577.9 L3541.0,568.6 L3544.0,571.8 L3547.7,621.9 L3552.5,544.4 L3556.1,530.8 L3559.1,531.7 L3561.5,621.3 L3566.3,538.1 L3569.9,524.7 L3572.9,526.4 L3575.9,591.2 L3580.7,492.3 L3584.3,480.7 L3587.3,482.0 L3590.5,641.5 L3595.3,568.1 L3598.9,554.7 L3601.9,565.6 L3605.2,630.3 L3610.0,547.8 L3613.6,540.0 L3616.6,545.7 L3619.5,624.9 L3624.3,519.2 L3627.9,502.5 L3630.9,516.2 L3633.5,611.5 L3638.3,505.6 L3641.9,490.9 L3644.9,494.2 L3648.3,656.6 L3653.1,586.5 L3656.7,572.3 L3659.7,580.7 L3662.4,638.7 L3667.2,568.4 L3670.8,553.5 L3673.8,561.3 L3676.3,629.6 L3681.1,542.6 L3684.7,533.9 L3687.7,541.6 L3691.4,622.3 L3696.2,506.8 L3699.8,493.0 L3702.8,508.0 L3705.3,651.8 L3710.1,593.6 L3713.7,582.1 L3716.7,586.2 L3719.5,644.2 L3724.3,559.0 L3727.9,540.6 L3730.9,543.9 L3734.6,609.8 L3739.4,526.4 L3743.0,515.8 L3746.0,529.4 L3749.0,632.8 L3753.8,522.8 L3757.4,510.2 L3760.4,513.0 L3763.4,645.4 L3768.2,579.5 L3771.8,565.3 L3774.8,569.4 L3777.7,637.6 L3782.5,556.0 L3786.1,535.7 L3789.1,547.7 L3792.0,605.9 L3796.8,542.4 L3800.4,532.3 L3803.4,534.2 L3805.9,620.1 L3810.7,510.4 L3814.3,497.2 L3817.3,499.3 L3820.3,636.6 L3825.1,580.3 L3828.7,566.8 L3831.7,573.2 L3834.6,619.0 L3839.4,544.0 L3843.0,533.9 L3846.0,536.0 L3849.3,610.9 L3854.1,529.0 L3857.7,516.7 L3860.7,524.4 L3864.0,603.6 L3868.8,507.3 L3872.4,492.5 L3875.4,507.2 L3878.4,649.1 L3883.2,558.4 L3886.8,548.0 L3889.8,554.8 L3892.3,620.1 L3897.1,540.3 L3900.7,524.8 L3903.7,526.7 L3906.6,617.5 L3911.4,527.5 L3915.0,518.0 L3918.0,530.3 L3921.0,585.6 L3925.8,510.4 L3929.4,491.7 L3932.4,494.4 L3935.3,633.2 L3940.1,573.7 L3943.7,568.2 L3946.7,570.2 L3950.4,625.3 L3955.2,540.9 L3958.8,528.3 L3961.8,538.4 L3964.0,614.8 L3968.8,520.3 L3972.4,504.0 L3975.4,510.6 L3979.1,596.3 L3983.9,504.3 L3987.5,486.1 L3990.5,497.2 L3993.2,635.4 L3998.0,567.1 L4001.6,555.0 L4004.6,562.8 L4007.3,615.9 L4012.1,557.6 L4015.7,543.1 L4018.7,547.5 L4021.7,601.1 L4026.5,516.7 L4030.1,505.4 L4033.1,511.5 L4036.2,587.7 L4041.0,489.8 L4044.6,473.3 L4047.6,483.4 L4050.5,624.1 L4055.3,570.6 L4058.9,563.7 L4061.9,564.0 L4065.4,618.8 L4070.2,553.9 L4073.8,538.1 L4076.8,539.9 L4079.7,610.7 L4084.5,519.7 L4088.1,501.7 L4091.1,502.6 L4093.5,595.8 L4098.3,503.1 L4101.9,489.7 L4104.9,502.4 L4108.3,641.1 L4113.1,569.4 L4116.7,557.6 L4121.7,565.9 L4121.7,1136.0 L221.3,1136.0 Z" fill="#8AB8FF" fill-opacity="0.1" stroke="none"/>
<path d="M221.3,1136.0 L222.2,1076.1 L226.0,1073.4 L232.0,1080.2 L238.0,1035.3 L242.5,1010.8 L248.0,1039.4 L254.0,982.3 L263.0,990.4 L269.0,931.9 L278.0,970.0 L284.0,896.5 L290.0,941.4 L298.7,851.6 L303.0,870.7 L309.7,946.0 L314.5,910.6 L318.1,906.4 L321.1,911.2 L324.4,922.8 L329.2,892.4 L332.8,885.2 L335.8,889.7 L338.5,893.6 L343.3,835.2 L346.9,829.0 L349.9,835.0 L352.7,872.7 L357.5,803.6 L361.1,790.8 L364.1,792.8 L367.9,939.6 L372.7,872.6 L376.3,859.9 L379.3,865.7 L381.6,913.6 L386.4,852.8 L390.0,840.0 L393.0,850.7 L396.7,901.2 L401.5,841.2 L405.1,827.6 L408.1,832.8 L411.0,873.2 L415.8,786.2 L419.4,770.1 L422.4,777.1 L425.0,934.0 L429.8,887.5 L433.4,883.4 L436.4,887.1 L439.5,926.4 L444.3,853.4 L447.9,842.2 L450.9,850.1 L453.6,890.7 L458.4,814.2 L462.0,802.9 L465.0,807.0 L467.9,859.8 L472.7,784.3 L476.3,774.2 L479.3,782.9 L483.0,925.1 L487.8,873.1 L491.4,865.4 L494.4,873.3 L497.0,911.8 L501.8,845.2 L505.4,829.4 L508.4,839.4 L511.7,897.4 L516.5,832.2 L520.1,820.8 L523.1,822.7 L525.4,870.0 L530.2,775.5 L533.8,759.8 L536.8,763.9 L540.7,935.8 L545.5,886.0 L549.1,880.2 L552.1,887.5 L554.7,910.6 L559.5,836.9 L563.1,825.3 L566.1,828.9 L569.2,849.7 L574.0,804.8 L577.6,798.5 L580.6,805.0 L583.5,858.3 L588.3,779.0 L591.9,761.1 L594.9,762.5 L597.3,914.4 L602.1,863.0 L605.7,855.9 L608.7,857.0 L612.2,901.5 L617.0,833.1 L620.6,818.3 L623.6,823.0 L626.7,877.4 L631.5,804.5 L635.1,795.8 L638.1,805.4 L640.4,855.1 L645.2,773.9 L648.8,763.4 L651.8,766.9 L655.5,916.6 L660.3,857.9 L663.9,852.0 L666.9,854.9 L669.7,907.4 L674.5,839.0 L678.1,828.0 L681.1,836.8 L684.5,874.0 L689.3,798.2 L692.9,780.1 L695.9,791.6 L698.9,851.2 L703.7,772.6 L707.3,754.1 L710.3,755.2 L713.2,884.4 L718.0,858.5 L721.6,854.1 L724.6,856.4 L727.1,888.3 L731.9,840.1 L735.5,833.8 L738.5,840.5 L741.9,866.6 L746.7,792.0 L750.3,781.4 L753.3,793.7 L755.6,846.9 L760.4,760.6 L764.0,750.3 L767.0,759.4 L770.7,902.6 L775.5,857.6 L779.1,848.3 L782.1,855.8 L784.7,883.2 L789.5,827.4 L793.1,813.5 L796.1,816.8 L799.0,855.2 L803.8,784.4 L807.4,770.5 L810.4,782.5 L813.8,833.3 L818.6,757.4 L822.2,741.2 L825.2,745.8 L828.1,888.1 L832.9,840.0 L836.5,830.2 L839.5,837.5 L842.0,866.2 L846.8,809.1 L850.4,798.7 L853.4,808.2 L856.7,850.6 L861.5,773.4 L865.1,759.4 L868.1,763.1 L870.8,819.5 L875.6,743.1 L879.2,733.1 L882.2,733.4 L885.5,867.5 L890.3,823.0 L893.9,811.9 L896.9,816.4 L899.5,856.7 L904.3,791.1 L907.9,776.3 L910.9,785.9 L914.6,834.9 L919.4,764.9 L923.0,754.1 L926.0,756.8 L929.0,782.4 L933.8,746.0 L937.4,737.4 L940.4,743.5 L943.3,864.9 L948.1,842.2 L951.7,838.9 L954.7,840.8 L957.7,846.7 L962.5,778.5 L966.1,768.8 L969.1,779.2 L971.4,816.6 L976.2,753.0 L979.8,740.2 L982.8,740.8 L985.8,811.5 L990.6,731.9 L994.2,713.5 L997.2,727.2 L1000.6,862.5 L1005.4,801.5 L1009.0,787.1 L1012.0,796.5 L1014.7,828.5 L1019.5,773.9 L1023.1,762.0 L1026.1,769.1 L1029.4,807.2 L1034.2,731.8 L1037.8,721.7 L1040.8,724.5 L1044.0,786.7 L1048.8,721.5 L1052.4,709.8 L1055.4,720.6 L1058.6,847.7 L1063.4,794.2 L1067.0,786.4 L1070.0,793.4 L1072.7,820.3 L1077.5,755.7 L1081.1,742.0 L1084.1,753.7 L1087.0,805.9 L1091.8,752.7 L1095.4,740.2 L1098.4,744.2 L1101.0,798.2 L1105.8,721.6 L1109.4,702.9 L1112.4,708.9 L1115.8,835.1 L1120.6,782.4 L1124.2,777.3 L1127.2,781.8 L1130.5,827.3 L1135.3,761.5 L1138.9,752.2 L1141.9,760.9 L1144.7,807.0 L1149.5,740.3 L1153.1,729.3 L1156.1,732.4 L1158.9,786.0 L1163.7,706.2 L1167.3,697.0 L1170.3,706.8 L1173.5,811.5 L1178.3,778.1 L1181.9,773.1 L1184.9,776.4 L1188.1,819.1 L1192.9,752.9 L1196.5,742.0 L1199.5,742.6 L1201.9,797.7 L1206.7,737.7 L1210.3,729.1 L1213.3,735.3 L1216.6,774.7 L1221.4,712.3 L1225.0,704.9 L1228.0,713.2 L1231.2,832.5 L1236.0,765.8 L1239.6,752.8 L1242.6,760.4 L1244.8,814.6 L1249.6,759.1 L1253.2,747.4 L1256.2,749.4 L1259.6,798.7 L1264.4,732.3 L1268.0,723.0 L1271.0,727.2 L1273.7,777.2 L1278.5,707.4 L1282.1,691.6 L1285.1,702.9 L1288.5,822.6 L1293.3,767.6 L1296.9,758.7 L1299.9,767.9 L1302.6,819.1 L1307.4,753.5 L1311.0,745.4 L1314.0,752.5 L1317.1,776.5 L1321.9,723.9 L1325.5,715.0 L1328.5,717.0 L1331.6,777.8 L1336.4,702.0 L1340.0,693.2 L1343.0,697.4 L1345.7,828.0 L1350.5,761.3 L1354.1,751.7 L1357.1,761.4 L1360.0,804.0 L1364.8,735.0 L1368.4,726.6 L1371.4,729.0 L1374.9,793.7 L1379.7,727.3 L1383.3,711.9 L1386.3,714.4 L1389.1,751.8 L1393.9,706.6 L1397.5,697.9 L1400.5,705.3 L1403.3,824.1 L1408.1,757.7 L1411.7,749.7 L1414.7,756.2 L1417.5,804.0 L1422.3,737.6 L1425.9,729.1 L1428.9,735.1 L1431.9,792.8 L1436.7,708.2 L1440.3,698.4 L1443.3,699.2 L1446.4,765.1 L1451.2,698.9 L1454.8,684.1 L1457.8,687.9 L1460.6,824.4 L1465.4,757.9 L1469.0,750.8 L1472.0,755.5 L1475.6,808.1 L1480.4,743.7 L1484.0,729.9 L1487.0,735.7 L1489.6,787.5 L1494.4,715.0 L1498.0,699.5 L1501.0,699.9 L1503.9,764.2 L1508.7,697.8 L1512.3,688.6 L1515.3,693.7 L1518.8,823.4 L1523.6,750.8 L1527.2,742.8 L1530.2,751.1 L1532.9,806.8 L1537.7,718.4 L1541.3,706.5 L1544.3,718.1 L1547.5,771.5 L1552.3,713.8 L1555.9,702.7 L1558.9,706.6 L1562.2,763.8 L1567.0,687.1 L1570.6,671.7 L1573.6,682.7 L1576.2,814.6 L1581.0,758.5 L1584.6,752.2 L1587.6,761.4 L1590.5,800.2 L1595.3,736.6 L1598.9,725.5 L1601.9,733.0 L1604.7,762.8 L1609.5,700.2 L1613.1,689.5 L1616.1,697.9 L1618.8,767.6 L1623.6,689.1 L1627.2,675.6 L1630.2,685.4 L1633.6,818.5 L1638.4,739.3 L1642.0,729.0 L1645.0,740.2 L1648.5,795.8 L1653.3,712.2 L1656.9,703.0 L1659.9,704.9 L1662.3,774.7 L1667.1,706.8 L1670.7,693.2 L1673.7,702.8 L1676.3,766.6 L1681.1,683.9 L1684.7,663.6 L1687.7,676.0 L1690.9,814.5 L1690.0,814.5 L1691.0,602.6 L1692.5,747.9 L1695.7,747.9 L1699.3,738.3 L1702.3,740.2 L1705.9,781.3 L1710.7,714.3 L1714.3,700.2 L1717.3,705.0 L1720.3,771.9 L1725.1,708.2 L1728.7,695.9 L1731.7,699.4 L1734.3,749.1 L1739.1,685.9 L1742.7,679.7 L1745.7,684.5 L1748.9,803.3 L1753.7,742.6 L1757.3,736.3 L1760.3,745.5 L1762.7,791.8 L1767.5,725.4 L1771.1,715.1 L1774.1,716.5 L1777.8,776.5 L1782.6,695.1 L1786.2,683.5 L1789.2,692.3 L1791.5,747.2 L1796.3,675.8 L1799.9,662.6 L1802.9,670.3 L1806.2,811.2 L1811.0,734.9 L1814.6,725.6 L1817.6,728.5 L1820.3,784.4 L1825.1,719.7 L1828.7,706.5 L1831.7,710.6 L1835.1,767.6 L1839.9,701.0 L1843.5,687.3 L1846.5,691.4 L1849.3,754.3 L1854.1,672.5 L1857.7,661.6 L1860.7,666.0 L1864.0,800.2 L1868.8,744.2 L1872.4,738.7 L1875.4,741.2 L1878.4,777.2 L1883.2,712.1 L1886.8,703.8 L1889.8,706.7 L1892.9,776.0 L1897.7,681.3 L1901.3,671.2 L1904.3,681.3 L1907.1,750.1 L1911.9,658.7 L1915.5,644.4 L1918.5,655.4 L1921.4,813.6 L1926.2,747.0 L1929.8,735.4 L1932.8,740.4 L1936.0,784.0 L1940.8,721.4 L1944.4,706.0 L1947.4,709.4 L1950.1,762.3 L1954.9,674.7 L1958.5,662.2 L1961.5,675.1 L1964.6,759.9 L1969.4,687.6 L1973.0,674.0 L1976.0,679.5 L1978.5,803.2 L1983.3,754.3 L1986.9,745.0 L1989.9,752.0 L1993.1,778.5 L1997.9,712.6 L2001.5,703.7 L2004.5,704.6 L2008.2,757.3 L2013.0,691.5 L2016.6,677.1 L2019.6,681.8 L2022.4,745.4 L2027.2,654.1 L2030.8,640.5 L2033.8,650.7 L2036.4,804.7 L2041.2,728.2 L2044.8,711.9 L2047.8,719.1 L2050.6,769.6 L2055.4,699.0 L2059.0,689.3 L2062.0,695.9 L2065.6,758.3 L2070.4,674.5 L2074.0,664.1 L2077.0,677.9 L2079.7,737.8 L2084.5,648.9 L2088.1,628.4 L2091.1,634.9 L2094.2,780.3 L2099.0,733.8 L2102.6,725.6 L2105.6,730.9 L2108.0,764.1 L2112.8,708.0 L2116.4,696.7 L2119.4,704.8 L2122.8,746.3 L2127.6,685.1 L2131.2,673.6 L2134.2,683.9 L2137.6,729.1 L2142.4,639.6 L2146.0,621.8 L2149.0,629.0 L2152.1,773.0 L2156.9,708.0 L2160.5,701.9 L2163.5,706.9 L2166.3,754.3 L2171.1,686.4 L2174.7,678.3 L2177.7,679.9 L2180.4,738.5 L2185.2,658.7 L2188.8,651.4 L2191.8,658.1 L2194.8,716.3 L2199.6,641.8 L2203.2,628.5 L2206.2,641.2 L2209.6,776.2 L2214.4,710.0 L2218.0,695.9 L2221.0,697.9 L2223.8,744.8 L2228.6,676.1 L2232.2,665.7 L2235.2,676.7 L2237.7,728.7 L2242.5,644.4 L2246.1,636.1 L2249.1,645.7 L2252.7,717.9 L2257.5,623.1 L2261.1,605.7 L2264.1,613.7 L2266.9,755.0 L2271.7,695.1 L2275.3,685.9 L2278.3,692.0 L2280.9,748.2 L2285.7,684.7 L2289.3,672.0 L2292.3,679.2 L2295.0,728.8 L2299.8,651.7 L2303.4,640.3 L2306.4,642.6 L2309.4,712.7 L2314.2,605.4 L2317.8,592.8 L2320.8,610.4 L2324.0,760.1 L2328.8,703.6 L2332.4,694.2 L2335.4,701.9 L2338.4,748.3 L2343.2,665.7 L2346.8,654.4 L2349.8,657.5 L2352.7,731.6 L2357.5,646.1 L2361.1,627.3 L2364.1,635.6 L2367.4,706.9 L2372.2,609.3 L2375.8,585.7 L2378.8,597.4 L2382.0,750.2 L2386.8,673.5 L2390.4,666.2 L2393.4,677.0 L2396.0,733.7 L2400.8,665.2 L2404.4,658.8 L2407.4,662.1 L2410.5,716.1 L2415.3,631.4 L2418.9,615.4 L2421.9,623.7 L2425.3,703.2 L2430.1,609.3 L2433.7,592.5 L2436.7,603.3 L2439.2,748.1 L2444.0,689.8 L2447.6,683.0 L2450.6,684.6 L2453.9,739.1 L2458.7,666.2 L2462.3,653.6 L2465.3,661.9 L2467.8,710.2 L2472.6,662.7 L2476.2,658.5 L2479.2,661.8 L2482.3,694.2 L2487.1,630.6 L2490.7,622.0 L2493.7,622.7 L2496.7,745.4 L2501.5,699.6 L2505.1,691.6 L2508.1,697.3 L2511.3,725.3 L2516.1,671.8 L2519.7,664.9 L2522.7,669.3 L2525.8,713.4 L2530.6,635.7 L2534.2,626.3 L2537.2,637.5 L2540.1,688.2 L2544.9,614.0 L2548.5,600.5 L2551.5,608.0 L2554.8,751.5 L2559.6,694.2 L2563.2,687.5 L2566.2,693.3 L2568.4,724.4 L2573.2,664.4 L2576.8,657.1 L2579.8,658.8 L2583.4,704.1 L2588.2,641.0 L2591.8,626.0 L2594.8,633.2 L2597.5,693.2 L2602.3,627.5 L2605.9,616.7 L2608.9,623.8 L2611.6,742.0 L2616.4,705.6 L2620.0,701.6 L2623.0,707.6 L2626.5,723.9 L2631.3,670.5 L2634.9,662.9 L2637.9,668.6 L2641.3,703.5 L2646.1,642.3 L2649.7,631.3 L2652.7,639.1 L2654.9,694.0 L2659.7,615.4 L2663.3,601.7 L2666.3,615.3 L2669.2,731.4 L2674.0,695.5 L2677.6,690.5 L2680.6,695.4 L2683.8,724.2 L2688.6,674.5 L2692.2,664.9 L2695.2,669.2 L2698.6,698.0 L2703.4,648.9 L2707.0,638.0 L2710.0,643.0 L2712.7,684.0 L2717.5,620.3 L2721.1,608.4 L2724.1,613.4 L2726.7,744.0 L2728.0,744.0 L2729.0,570.0 L2730.5,682.7 L2731.5,682.7 L2735.1,676.6 L2738.1,682.6 L2741.4,721.2 L2746.2,654.4 L2749.8,648.4 L2752.8,652.3 L2755.8,711.8 L2760.6,637.7 L2764.2,620.2 L2767.2,625.2 L2770.4,700.4 L2775.2,616.1 L2778.8,599.7 L2781.8,606.3 L2784.9,750.5 L2789.7,684.0 L2793.3,673.7 L2796.3,676.0 L2799.2,738.3 L2804.0,661.4 L2807.6,654.6 L2810.6,657.5 L2813.9,720.1 L2818.7,632.5 L2822.3,624.4 L2825.3,635.9 L2827.6,696.4 L2832.4,617.1 L2836.0,598.3 L2839.0,598.3 L2842.7,748.8 L2847.5,679.5 L2851.1,671.6 L2854.1,677.7 L2856.7,730.4 L2861.5,661.6 L2865.1,651.6 L2868.1,656.8 L2870.8,729.4 L2875.6,646.1 L2879.2,638.6 L2882.2,640.4 L2884.9,701.7 L2889.7,615.6 L2893.3,607.8 L2896.3,614.0 L2899.4,747.2 L2904.2,662.2 L2907.8,654.3 L2910.8,659.5 L2914.4,726.7 L2919.2,660.9 L2922.8,653.7 L2925.8,658.2 L2928.9,728.1 L2933.7,638.2 L2937.3,623.6 L2940.3,638.6 L2943.0,708.0 L2947.8,623.9 L2951.4,608.6 L2954.4,608.7 L2957.7,747.9 L2962.5,673.3 L2966.1,658.3 L2969.1,662.8 L2971.7,737.0 L2976.5,661.5 L2980.1,646.4 L2983.1,655.5 L2986.3,725.2 L2991.1,637.1 L2994.7,625.4 L2997.7,632.4 L3000.1,695.2 L3004.9,618.5 L3008.5,605.6 L3011.5,609.5 L3014.6,751.3 L3019.4,683.2 L3023.0,666.6 L3026.0,675.7 L3029.2,743.2 L3034.0,663.2 L3037.6,648.9 L3040.6,655.0 L3044.0,718.0 L3048.8,625.8 L3052.4,611.2 L3055.4,620.7 L3057.6,711.0 L3062.4,608.5 L3066.0,595.2 L3069.0,602.5 L3072.6,760.7 L3077.4,674.2 L3081.0,659.0 L3084.0,671.1 L3086.4,741.5 L3091.2,660.9 L3094.8,648.4 L3097.8,662.1 L3100.8,705.1 L3105.6,636.5 L3109.2,625.3 L3112.2,636.9 L3115.1,706.4 L3119.9,628.2 L3123.5,610.7 L3126.5,612.2 L3130.0,748.6 L3134.8,670.3 L3138.4,662.6 L3141.4,662.7 L3144.6,734.0 L3149.4,648.7 L3153.0,630.8 L3156.0,644.0 L3159.1,708.8 L3163.9,632.7 L3167.5,622.3 L3170.5,626.7 L3173.2,708.3 L3178.0,593.6 L3181.6,581.8 L3184.6,596.1 L3187.2,743.9 L3192.0,684.9 L3195.6,673.3 L3198.6,681.7 L3201.5,715.6 L3206.3,665.2 L3209.9,655.3 L3212.9,659.4 L3216.4,711.5 L3221.2,636.9 L3224.8,618.5 L3227.8,631.0 L3230.4,690.8 L3235.2,600.2 L3238.8,590.0 L3241.8,596.3 L3245.0,738.1 L3249.8,689.6 L3253.4,684.5 L3256.4,691.2 L3259.3,709.4 L3264.1,657.2 L3267.7,644.5 L3270.7,648.9 L3274.3,704.3 L3279.1,627.7 L3282.7,613.4 L3285.7,615.8 L3288.4,690.2 L3293.2,596.0 L3296.8,586.9 L3299.8,587.9 L3302.2,721.1 L3307.0,697.4 L3310.6,691.9 L3313.6,692.2 L3316.5,717.5 L3321.3,661.2 L3324.9,649.2 L3327.9,653.2 L3331.7,708.1 L3336.5,625.2 L3340.1,615.8 L3343.1,629.1 L3345.3,681.9 L3350.1,619.6 L3353.7,609.9 L3356.7,619.4 L3360.1,734.3 L3364.9,691.7 L3368.5,684.6 L3371.5,686.0 L3374.9,727.5 L3379.7,650.6 L3383.3,633.1 L3386.3,642.7 L3389.4,707.7 L3394.2,626.5 L3397.8,617.3 L3400.8,620.3 L3402.9,690.2 L3407.7,589.6 L3411.3,580.1 L3414.3,584.5 L3418.0,720.5 L3422.8,683.8 L3426.4,680.4 L3429.4,686.2 L3431.8,715.3 L3436.6,647.1 L3440.2,632.1 L3443.2,639.3 L3446.4,702.2 L3451.2,627.0 L3454.8,613.2 L3457.8,621.2 L3461.0,678.6 L3465.8,575.5 L3469.4,564.3 L3472.4,564.7 L3475.0,724.8 L3479.8,675.7 L3483.4,669.4 L3486.4,677.7 L3489.3,729.0 L3494.1,644.2 L3497.7,632.8 L3500.7,644.3 L3504.0,707.2 L3508.8,620.8 L3512.4,604.7 L3515.4,619.4 L3518.3,700.5 L3523.1,592.3 L3526.7,573.3 L3529.7,581.9 L3532.4,745.6 L3537.2,685.2 L3540.8,670.8 L3543.8,675.9 L3547.2,711.0 L3552.0,648.0 L3555.6,637.1 L3558.6,644.9 L3561.2,713.3 L3566.0,643.0 L3569.6,627.5 L3572.6,635.7 L3575.9,700.7 L3580.7,578.2 L3584.3,564.3 L3587.3,575.7 L3590.0,742.3 L3594.8,663.9 L3598.4,647.1 L3601.4,657.6 L3604.9,714.1 L3609.7,649.3 L3613.3,639.6 L3616.3,650.1 L3619.1,709.3 L3623.9,609.9 L3627.5,595.8 L3630.5,610.5 L3633.6,688.8 L3638.4,577.6 L3642.0,558.8 L3645.0,575.4 L3648.0,725.8 L3652.8,657.6 L3656.4,648.6 L3659.4,658.6 L3662.4,713.6 L3667.2,664.8 L3670.8,660.0 L3673.8,666.1 L3677.1,704.8 L3681.9,627.5 L3685.5,608.9 L3688.5,622.2 L3691.4,684.5 L3696.2,599.8 L3699.8,579.1 L3702.8,581.6 L3705.4,727.7 L3710.2,667.0 L3713.8,653.8 L3716.8,654.7 L3719.8,715.6 L3724.6,643.1 L3728.2,634.7 L3731.2,644.4 L3734.2,701.8 L3739.0,611.5 L3742.6,598.2 L3745.6,606.0 L3748.4,686.7 L3753.2,583.8 L3756.8,560.7 L3759.8,573.8 L3763.3,737.8 L3768.1,665.7 L3771.7,656.3 L3774.7,658.4 L3777.7,719.1 L3782.5,641.7 L3786.1,628.5 L3789.1,632.7 L3792.0,686.0 L3796.8,612.8 L3800.4,599.4 L3803.4,601.3 L3806.2,689.4 L3811.0,573.3 L3814.6,563.1 L3817.6,566.9 L3820.2,717.2 L3825.0,655.8 L3828.6,647.2 L3831.6,657.5 L3835.2,698.3 L3840.0,637.0 L3843.6,629.6 L3846.6,631.8 L3848.9,704.9 L3853.7,610.8 L3857.3,589.4 L3860.3,592.4 L3863.8,691.5 L3868.6,582.6 L3872.2,571.0 L3875.2,587.6 L3878.1,727.2 L3882.9,652.4 L3886.5,642.9 L3889.5,648.4 L3892.0,690.6 L3896.8,626.8 L3900.4,619.5 L3903.4,628.4 L3907.0,692.8 L3911.8,603.9 L3915.4,586.9 L3918.4,589.1 L3920.9,677.4 L3925.7,583.4 L3929.3,571.6 L3932.3,573.4 L3935.8,717.0 L3940.6,653.7 L3944.2,639.1 L3947.2,639.2 L3950.1,713.6 L3954.9,634.1 L3958.5,623.9 L3961.5,631.8 L3964.2,688.6 L3969.0,614.2 L3972.6,596.6 L3975.6,600.7 L3978.5,677.9 L3983.3,586.4 L3986.9,572.0 L3989.9,581.5 L3992.9,724.8 L3997.7,653.7 L4001.3,638.3 L4004.3,644.5 L4008.0,705.0 L4012.8,635.0 L4016.4,626.4 L4019.4,630.7 L4022.3,691.8 L4027.1,619.2 L4030.7,609.6 L4033.7,615.0 L4035.9,677.1 L4040.7,579.0 L4044.3,569.9 L4047.3,580.6 L4050.7,722.2 L4055.5,656.9 L4059.1,649.9 L4062.1,658.5 L4065.1,708.0 L4069.9,631.2 L4073.5,623.7 L4076.5,625.1 L4079.9,687.3 L4084.7,610.3 L4088.3,592.7 L4091.3,601.9 L4094.4,671.3 L4099.2,599.8 L4102.8,585.1 L4105.8,589.9 L4108.7,712.1 L4113.5,651.8 L4117.1,646.3 L4121.7,661.2 L4121.7,1136.0 L221.3,1136.0 Z" fill="#FF780A" fill-opacity="0.1" stroke="none"/>
<path d="M221.3,1136.5 L305.5,1136.5 L308.5,1122.4 L363.1,1122.4 L366.1,1108.1 L420.6,1108.1 L423.6,1093.1 L478.1,1093.1 L481.1,1079.3 L535.7,1079.3 L538.7,1065.0 L593.2,1065.0 L596.2,1049.9 L650.8,1049.9 L653.8,1035.9 L708.3,1035.9 L711.3,1021.8 L765.9,1021.8 L768.9,1007.6 L823.4,1007.6 L826.4,993.1 L881.0,993.1 L884.0,977.4 L938.5,977.4 L941.5,961.4 L996.1,961.4 L999.1,946.3 L1053.7,946.3 L1056.7,930.4 L1111.2,930.4 L1114.2,914.8 L1169.5,914.8 L1172.0,900.5 L1176.5,900.5 L1179.0,914.8 L1226.3,914.8 L1229.3,897.4 L1283.8,897.4 L1286.8,882.1 L1341.4,882.1 L1344.4,869.2 L1399.0,869.2 L1402.0,852.7 L1456.5,852.7 L1459.5,838.6 L1514.0,838.6 L1517.0,825.0 L1571.6,825.0 L1574.6,811.4 L1629.1,811.4 L1632.1,795.7 L1686.5,795.7 L1689.0,781.4 L1693.5,781.4 L1696.0,795.7 L1744.2,795.7 L1747.2,781.4 L1801.8,781.4 L1804.8,767.8 L1859.3,767.8 L1862.3,754.2 L1916.9,754.2 L1919.9,738.4 L1974.4,738.4 L1977.4,725.1 L2032.0,725.1 L2035.0,710.7 L2089.6,710.7 L2092.6,695.7 L2147.1,695.7 L2150.1,682.1 L2204.5,682.1 L2207.0,667.8 L2211.5,667.8 L2214.0,682.1 L2262.2,682.1 L2265.2,660.3 L2319.8,660.3 L2322.8,644.0 L2377.3,644.0 L2380.3,631.8 L2434.8,631.8 L2437.8,615.4 L2492.4,615.4 L2495.4,599.1 L2549.9,599.1 L2552.9,585.5 L2607.5,585.5 L2610.5,572.7 L2665.0,572.7 L2668.0,556.4 L2723.0,556.4 L2725.5,542.1 L2730.0,542.1 L2732.5,556.4 L2780.2,556.4 L2783.2,541.4 L2837.7,541.4 L2840.7,527.8 L2895.2,527.8 L2898.2,516.2 L2952.8,516.2 L2955.8,502.0 L3010.3,502.0 L3013.3,487.0 L3067.9,487.0 L3070.9,472.6 L3125.4,472.6 L3128.4,458.4 L3183.0,458.4 L3186.0,443.9 L3240.5,443.9 L3243.5,440.7 L3298.1,440.7 L3301.1,425.8 L3355.6,425.8 L3358.6,412.2 L3413.2,412.2 L3416.2,398.6 L3470.8,398.6 L3473.8,382.2 L3528.3,382.2 L3531.3,365.9 L3585.8,365.9 L3588.8,350.9 L3643.4,350.9 L3646.4,334.6 L3700.9,334.6 L3703.9,318.3 L3758.0,318.3 L3760.5,304.0 L3765.0,304.0 L3767.5,318.3 L3816.0,318.3 L3819.0,302.0 L3873.6,302.0 L3876.6,285.6 L3931.1,285.6 L3934.1,273.4 L3988.7,273.4 L3991.7,257.1 L4046.2,257.1 L4049.2,240.7 L4103.8,240.7 L4106.8,229.8 L4120.2,229.8 L4121.2,227.1 L4121.2,1136.0 L221.3,1136.0 Z" fill="#F2495C" fill-opacity="0.1" stroke="none"/>
<path d="M221.3,1136.0 L305.5,1136.0 L308.5,1121.8 L363.1,1121.8 L366.1,1107.6 L420.6,1107.6 L423.6,1092.6 L478.1,1092.6 L481.1,1078.7 L535.7,1078.7 L538.7,1064.4 L593.2,1064.4 L596.2,1049.3 L650.8,1049.3 L653.8,1035.3 L708.3,1035.3 L711.3,1021.3 L765.9,1021.3 L768.9,1007.0 L823.4,1007.0 L826.4,992.6 L881.0,992.6 L884.0,976.8 L938.5,976.8 L941.5,960.9 L996.1,960.9 L999.1,945.8 L1053.7,945.8 L1056.7,929.9 L1111.2,929.9 L1114.2,914.2 L1169.5,914.2 L1172.0,899.9 L1176.5,899.9 L1179.0,914.2 L1226.3,914.2 L1229.3,896.8 L1283.8,896.8 L1286.8,881.6 L1341.4,881.6 L1344.4,868.6 L1399.0,868.6 L1402.0,852.2 L1456.5,852.2 L1459.5,838.0 L1514.0,838.0 L1517.0,824.4 L1571.6,824.4 L1574.6,810.8 L1629.1,810.8 L1632.1,795.2 L1686.5,795.2 L1689.0,780.9 L1693.5,780.9 L1696.0,795.2 L1744.2,795.2 L1747.2,780.9 L1801.8,780.9 L1804.8,767.3 L1859.3,767.3 L1862.3,753.7 L1916.9,753.7 L1919.9,737.9 L1974.4,737.9 L1977.4,724.6 L2032.0,724.6 L2035.0,710.1 L2089.6,710.1 L2092.6,695.2 L2147.1,695.2 L2150.1,681.6 L2204.5,681.6 L2207.0,667.3 L2211.5,667.3 L2214.0,681.6 L2262.2,681.6 L2265.2,659.8 L2319.8,659.8 L2322.8,643.5 L2377.3,643.5 L2380.3,631.2 L2434.8,631.2 L2437.8,614.9 L2492.4,614.9 L2495.4,598.6 L2549.9,598.6 L2552.9,585.0 L2607.5,585.0 L2610.5,570.0 L2665.0,570.0 L2668.0,553.7 L2723.0,553.7 L2725.5,539.4 L2730.0,539.4 L2732.5,553.7 L2780.2,553.7 L2783.2,538.7 L2837.7,538.7 L2840.7,525.1 L2895.2,525.1 L2898.2,513.5 L2952.8,513.5 L2955.8,499.2 L3010.3,499.2 L3013.3,484.3 L3067.9,484.3 L3070.9,469.9 L3125.4,469.9 L3128.4,455.7 L3183.0,455.7 L3186.0,452.0 L3240.5,452.0 L3243.5,438.0 L3298.1,438.0 L3301.1,423.0 L3355.6,423.0 L3358.6,409.4 L3413.2,409.4 L3416.2,395.8 L3470.8,395.8 L3473.8,379.5 L3528.3,379.5 L3531.3,363.2 L3585.8,363.2 L3588.8,348.2 L3643.4,348.2 L3646.4,331.9 L3700.9,331.9 L3703.9,315.6 L3758.0,315.6 L3760.5,301.3 L3765.0,301.3 L3767.5,315.6 L3816.0,315.6 L3819.0,299.2 L3873.6,299.2 L3876.6,282.9 L3931.1,282.9 L3934.1,270.7 L3988.7,270.7 L3991.7,254.3 L4046.2,254.3 L4049.2,238.0 L4103.8,238.0 L4106.8,227.1 L4120.2,227.1 L4121.2,224.4 L4121.2,1136.0 L221.3,1136.0 Z" fill="#5794F2" fill-opacity="0.09" stroke="none"/>
<path d="M221.3,1136.0 L229.4,1132.5 L237.1,1128.4 L244.7,1123.6 L252.3,1121.4 L260.0,1117.5 L267.6,1113.6 L275.3,1111.2 L282.9,1106.5 L290.5,1102.4 L298.2,1098.2 L305.8,1095.5 L308.8,1101.3 L316.6,1099.3 L324.4,1095.3 L332.2,1092.6 L340.0,1086.9 L347.8,1084.0 L355.6,1082.7 L363.4,1077.9 L366.4,1090.1 L374.1,1085.0 L381.9,1081.4 L389.7,1078.8 L397.5,1075.3 L405.3,1073.2 L413.1,1070.0 L420.9,1064.8 L423.9,1075.0 L431.7,1071.3 L439.5,1069.1 L447.3,1065.0 L455.1,1061.2 L462.9,1058.2 L470.7,1053.1 L478.4,1049.3 L481.4,1060.8 L489.2,1057.3 L497.0,1052.4 L504.8,1049.9 L512.6,1045.8 L520.4,1042.7 L528.2,1038.5 L536.0,1035.5 L539.0,1046.5 L546.8,1042.9 L554.6,1039.8 L562.4,1033.8 L570.2,1030.2 L578.0,1027.0 L585.8,1023.8 L593.5,1020.8 L596.5,1033.0 L604.3,1029.8 L612.1,1026.3 L619.9,1022.4 L627.7,1019.3 L635.5,1013.3 L643.3,1010.7 L651.1,1006.6 L654.1,1018.7 L661.9,1013.8 L669.7,1011.5 L677.5,1005.9 L685.3,1002.5 L693.1,1001.5 L700.9,997.0 L708.6,992.3 L711.6,1004.6 L719.4,999.4 L727.2,997.1 L735.0,991.6 L742.8,989.7 L750.6,987.0 L758.4,981.4 L766.2,978.0 L769.2,989.1 L777.0,984.2 L784.8,982.0 L792.6,978.7 L800.4,974.0 L808.2,968.0 L816.0,964.8 L823.7,961.7 L826.7,972.7 L834.5,970.4 L842.3,966.3 L850.1,963.2 L857.9,959.7 L865.7,953.7 L873.5,952.1 L881.3,947.4 L884.3,958.4 L892.1,954.5 L899.9,951.1 L907.7,948.3 L915.5,942.8 L923.3,941.0 L931.1,935.6 L938.8,932.3 L941.8,943.5 L949.6,940.6 L957.4,935.6 L965.2,932.2 L973.0,927.9 L980.8,921.5 L988.6,918.0 L996.4,914.9 L999.4,925.8 L1007.2,922.7 L1015.0,917.1 L1022.8,915.6 L1030.6,911.3 L1038.4,906.1 L1046.2,903.0 L1054.0,899.8 L1057.0,910.8 L1064.7,908.3 L1072.5,901.6 L1080.3,900.4 L1088.1,896.4 L1095.9,891.0 L1103.7,888.6 L1111.5,884.3 L1114.5,895.2 L1122.5,892.3 L1130.5,889.6 L1138.5,886.0 L1146.5,880.9 L1154.5,878.5 L1162.5,873.9 L1170.5,870.7 L1174.5,770.0 L1178.5,911.5 L1186.5,907.8 L1194.5,903.5 L1202.5,897.8 L1210.6,895.2 L1218.6,890.8 L1226.6,887.0 L1229.6,897.2 L1237.4,892.6 L1245.2,891.4 L1253.0,888.1 L1260.8,882.3 L1268.6,879.2 L1276.4,877.6 L1284.1,873.4 L1287.1,880.8 L1294.9,878.6 L1302.7,873.6 L1310.5,869.8 L1318.3,869.0 L1326.1,863.3 L1333.9,860.4 L1341.7,858.4 L1344.7,878.8 L1352.5,874.6 L1360.3,871.3 L1368.1,868.5 L1375.9,864.8 L1383.7,857.9 L1391.5,856.4 L1399.2,851.6 L1402.2,868.0 L1410.0,863.8 L1417.8,861.8 L1425.6,856.4 L1433.4,853.7 L1441.2,851.1 L1449.0,848.0 L1456.8,843.5 L1459.8,851.6 L1467.6,847.2 L1475.4,845.7 L1483.2,841.4 L1491.0,836.7 L1498.8,832.0 L1506.6,829.1 L1514.3,825.8 L1517.3,842.1 L1525.1,839.3 L1532.9,833.8 L1540.7,832.6 L1548.5,829.7 L1556.3,825.4 L1564.1,821.3 L1571.9,817.6 L1574.9,829.9 L1582.7,828.8 L1590.5,825.9 L1598.3,822.7 L1606.1,819.5 L1613.9,818.4 L1621.7,815.2 L1629.4,812.2 L1632.4,827.1 L1640.3,823.3 L1648.2,820.5 L1656.0,819.1 L1663.9,816.4 L1671.8,814.2 L1679.6,813.2 L1687.5,809.5 L1691.5,754.4 L1695.5,880.8 L1703.7,878.6 L1711.8,874.9 L1720.0,868.3 L1728.2,865.2 L1736.4,860.6 L1744.5,858.4 L1747.5,869.3 L1755.3,867.3 L1763.1,861.6 L1770.9,858.5 L1778.7,854.1 L1786.5,851.8 L1794.3,846.0 L1802.1,844.0 L1805.1,856.3 L1812.9,853.9 L1820.7,848.6 L1828.5,844.2 L1836.3,839.9 L1844.1,836.6 L1851.9,833.0 L1859.6,829.9 L1862.6,842.1 L1870.4,837.4 L1878.2,833.2 L1886.0,831.2 L1893.8,826.3 L1901.6,821.9 L1909.4,818.2 L1917.2,815.6 L1920.2,827.8 L1928.0,825.2 L1935.8,821.0 L1943.6,817.9 L1951.4,815.9 L1959.2,812.8 L1967.0,810.7 L1974.7,807.4 L1977.7,839.9 L1985.5,835.9 L1993.3,832.0 L2001.1,830.0 L2008.9,824.4 L2016.7,819.5 L2024.5,816.1 L2032.3,813.5 L2035.3,825.8 L2043.1,821.8 L2050.9,819.7 L2058.7,815.4 L2066.5,812.7 L2074.3,809.9 L2082.1,805.4 L2089.9,803.3 L2092.9,836.0 L2100.6,833.3 L2108.4,827.0 L2116.2,825.3 L2124.0,819.3 L2131.8,815.6 L2139.6,812.4 L2147.4,807.4 L2150.4,833.9 L2158.3,830.3 L2166.1,827.9 L2174.0,824.5 L2181.9,820.5 L2189.8,819.7 L2197.6,817.5 L2205.5,812.9 L2209.5,734.6 L2213.5,862.5 L2221.7,859.0 L2229.8,853.5 L2238.0,850.8 L2246.2,846.7 L2254.3,840.1 L2262.5,837.2 L2265.5,868.8 L2273.3,864.6 L2281.1,861.7 L2288.9,856.7 L2296.7,854.9 L2304.5,850.2 L2312.3,848.1 L2320.1,843.5 L2323.1,854.4 L2330.8,850.7 L2338.6,845.6 L2346.4,841.3 L2354.2,837.6 L2362.0,835.3 L2369.8,830.8 L2377.6,827.1 L2380.6,861.2 L2388.4,858.3 L2396.2,855.3 L2404.0,850.7 L2411.8,846.1 L2419.6,842.5 L2427.4,839.5 L2435.2,836.7 L2438.2,850.3 L2445.9,845.3 L2453.7,844.0 L2461.5,840.9 L2469.3,836.4 L2477.1,833.5 L2484.9,830.2 L2492.7,825.8 L2495.7,840.7 L2503.5,837.5 L2511.3,833.3 L2519.1,830.3 L2526.9,827.4 L2534.7,822.1 L2542.5,818.2 L2550.2,816.3 L2553.2,850.3 L2561.0,847.1 L2568.8,845.1 L2576.6,841.9 L2584.4,835.8 L2592.2,835.2 L2600.0,829.8 L2607.8,827.1 L2610.8,865.2 L2618.6,861.7 L2626.4,859.3 L2634.2,854.4 L2642.0,853.6 L2649.8,849.9 L2657.6,845.6 L2665.3,842.1 L2668.3,848.9 L2676.3,847.2 L2684.2,841.2 L2692.2,839.9 L2700.2,836.9 L2708.1,833.9 L2716.1,828.7 L2724.0,825.8 L2728.0,738.7 L2732.0,884.3 L2740.1,881.2 L2748.2,877.2 L2756.2,873.9 L2764.3,870.0 L2772.4,866.2 L2780.5,864.4 L2783.5,874.8 L2791.2,870.4 L2799.0,868.2 L2806.8,863.5 L2814.6,860.7 L2822.4,857.4 L2830.2,852.1 L2838.0,848.2 L2841.0,857.6 L2848.8,853.2 L2856.6,851.3 L2864.4,847.3 L2872.2,843.4 L2880.0,838.6 L2887.8,835.5 L2895.6,831.9 L2898.6,846.2 L2906.3,842.3 L2914.1,838.4 L2921.9,836.0 L2929.7,831.2 L2937.5,827.4 L2945.3,826.5 L2953.1,821.7 L2956.1,831.9 L2963.9,827.0 L2971.7,824.2 L2979.5,822.6 L2987.3,818.1 L2995.1,814.0 L3002.9,809.6 L3010.7,807.4 L3013.7,817.6 L3021.4,814.8 L3029.2,811.0 L3037.0,806.8 L3044.8,803.8 L3052.6,800.1 L3060.4,798.5 L3068.2,795.2 L3071.2,805.4 L3079.0,801.4 L3086.8,799.3 L3094.6,794.2 L3102.4,790.3 L3110.2,787.4 L3118.0,783.7 L3125.8,780.9 L3128.8,799.3 L3136.5,795.8 L3144.3,789.2 L3152.1,784.6 L3159.9,780.2 L3167.7,777.3 L3175.5,772.1 L3183.3,768.6 L3186.3,795.2 L3194.1,793.1 L3201.9,788.6 L3209.7,786.1 L3217.5,785.2 L3225.3,783.4 L3233.1,779.6 L3240.8,776.8 L3243.8,833.9 L3251.6,830.0 L3259.4,825.5 L3267.2,822.6 L3275.0,820.3 L3282.8,814.0 L3290.6,812.6 L3298.4,807.4 L3301.4,817.6 L3309.2,813.1 L3317.0,811.7 L3324.8,807.7 L3332.6,802.7 L3340.4,801.3 L3348.2,797.8 L3355.9,793.1 L3358.9,815.6 L3366.7,811.7 L3374.5,807.3 L3382.3,803.1 L3390.1,799.8 L3397.9,795.2 L3405.7,792.9 L3413.5,789.0 L3416.5,821.7 L3424.3,817.5 L3432.1,817.6 L3439.9,814.4 L3447.7,810.7 L3455.5,808.8 L3463.3,804.6 L3471.1,802.7 L3474.1,847.6 L3481.8,843.1 L3489.6,839.5 L3497.4,834.5 L3505.2,831.4 L3513.0,828.2 L3520.8,824.0 L3528.6,819.7 L3531.6,866.6 L3539.4,861.7 L3547.2,857.7 L3555.0,856.1 L3562.8,850.2 L3570.6,846.0 L3578.4,843.7 L3586.2,839.9 L3589.2,868.0 L3596.9,863.7 L3604.7,860.9 L3612.5,855.8 L3620.3,851.9 L3628.1,847.6 L3635.9,845.5 L3643.7,839.9 L3646.7,850.3 L3654.5,845.2 L3662.3,843.2 L3670.1,840.1 L3677.9,835.3 L3685.7,832.6 L3693.5,829.3 L3701.2,825.8 L3704.2,856.3 L3712.1,852.4 L3719.9,851.3 L3727.7,846.6 L3735.5,843.8 L3743.4,838.8 L3751.2,835.8 L3759.0,833.9 L3763.0,752.3 L3767.0,874.8 L3775.2,871.4 L3783.4,866.7 L3791.7,863.7 L3799.9,858.7 L3808.1,853.3 L3816.3,850.3 L3819.3,860.3 L3827.1,855.3 L3834.9,852.9 L3842.7,849.6 L3850.5,846.3 L3858.3,841.1 L3866.1,836.3 L3873.9,833.9 L3876.9,856.3 L3884.7,854.0 L3892.5,848.4 L3900.3,847.4 L3908.1,843.3 L3915.9,839.8 L3923.7,834.8 L3931.4,831.9 L3934.4,842.1 L3942.2,839.2 L3950.0,835.6 L3957.8,831.2 L3965.6,829.4 L3973.4,823.9 L3981.2,822.4 L3989.0,817.6 L3992.0,829.9 L3999.8,826.6 L4007.6,824.3 L4015.4,821.2 L4023.2,816.9 L4031.0,814.0 L4038.8,811.0 L4046.6,807.4 L4049.6,817.6 L4057.3,814.7 L4065.1,811.1 L4072.9,809.1 L4080.7,805.8 L4088.5,801.2 L4096.3,797.9 L4104.1,795.2 L4107.1,805.4 L4114.4,803.3 L4121.7,801.3" fill="none" stroke="#8BB97A" stroke-width="1.9" stroke-linejoin="round"/>
<path d="M221.3,1136.0 L229.4,1132.4 L237.1,1128.1 L244.7,1124.4 L252.3,1122.4 L260.0,1119.2 L267.6,1114.3 L275.3,1110.9 L282.9,1105.5 L290.5,1102.2 L298.2,1098.8 L305.8,1095.5 L308.8,1108.8 L316.6,1105.4 L324.4,1101.8 L332.2,1100.2 L340.0,1096.0 L347.8,1093.7 L355.6,1088.0 L363.4,1086.1 L366.4,1106.5 L374.1,1104.3 L381.9,1098.2 L389.7,1097.1 L397.5,1091.5 L405.3,1089.0 L413.1,1085.2 L420.9,1081.3 L423.9,1100.6 L431.7,1095.9 L439.5,1095.1 L447.3,1091.4 L455.1,1085.0 L462.9,1082.8 L470.7,1080.6 L478.4,1075.7 L481.4,1096.5 L489.2,1091.2 L497.0,1087.5 L504.8,1086.4 L512.6,1081.6 L520.4,1078.8 L528.2,1074.4 L536.0,1070.0 L539.0,1090.4 L546.8,1086.4 L554.6,1084.3 L562.4,1078.9 L570.2,1077.4 L578.0,1073.4 L585.8,1067.7 L593.5,1065.1 L596.5,1086.1 L604.3,1082.4 L612.1,1078.3 L619.9,1073.7 L627.7,1070.0 L635.5,1066.3 L643.3,1063.5 L651.1,1057.9 L654.1,1079.9 L661.9,1075.5 L669.7,1071.0 L677.5,1067.2 L685.3,1064.5 L693.1,1061.8 L700.9,1058.0 L708.6,1053.8 L711.6,1075.0 L719.4,1070.5 L727.2,1066.7 L735.0,1064.6 L742.8,1060.4 L750.6,1056.1 L758.4,1051.7 L766.2,1047.8 L769.2,1070.0 L777.0,1065.0 L784.8,1061.9 L792.6,1059.4 L800.4,1052.8 L808.2,1050.0 L816.0,1045.7 L823.7,1041.7 L826.7,1063.9 L834.5,1060.8 L842.3,1056.0 L850.1,1052.1 L857.9,1046.8 L865.7,1045.0 L873.5,1039.5 L881.3,1035.6 L884.3,1056.5 L892.1,1053.5 L899.9,1047.8 L907.7,1045.9 L915.5,1041.1 L923.3,1036.8 L931.1,1031.8 L938.8,1028.2 L941.8,1048.4 L949.6,1046.0 L957.4,1040.8 L965.2,1037.7 L973.0,1033.6 L980.8,1029.1 L988.6,1023.7 L996.4,1021.3 L999.4,1043.5 L1007.2,1039.5 L1015.0,1033.9 L1022.8,1032.5 L1030.6,1026.0 L1038.4,1023.8 L1046.2,1020.4 L1054.0,1015.3 L1057.0,1035.6 L1064.7,1031.0 L1072.5,1026.7 L1080.3,1025.9 L1088.1,1021.3 L1095.9,1015.8 L1103.7,1013.5 L1111.5,1009.2 L1114.5,1029.5 L1122.5,1026.5 L1130.5,1023.5 L1138.5,1019.7 L1146.5,1014.0 L1154.5,1009.0 L1162.5,1005.2 L1170.5,1003.1 L1174.5,912.9 L1178.5,1035.6 L1186.5,1031.6 L1194.5,1029.1 L1202.5,1024.1 L1210.6,1018.6 L1218.6,1014.4 L1226.6,1011.5 L1229.6,1028.9 L1237.4,1025.1 L1245.2,1023.1 L1253.0,1018.7 L1260.8,1015.5 L1268.6,1011.7 L1276.4,1009.5 L1284.1,1005.4 L1287.1,1023.1 L1294.9,1018.2 L1302.7,1014.9 L1310.5,1013.9 L1318.3,1010.0 L1326.1,1004.6 L1333.9,1003.2 L1341.7,999.0 L1344.7,1019.0 L1352.5,1014.1 L1360.3,1012.1 L1368.1,1008.1 L1375.9,1004.6 L1383.7,1002.8 L1391.5,999.2 L1399.2,995.0 L1402.2,1014.9 L1410.0,1011.7 L1417.8,1006.3 L1425.6,1002.2 L1433.4,1000.0 L1441.2,993.5 L1449.0,991.0 L1456.8,986.7 L1459.8,1006.7 L1467.6,1004.5 L1475.4,1000.7 L1483.2,995.8 L1491.0,994.0 L1498.8,990.7 L1506.6,986.6 L1514.3,984.8 L1517.3,1005.4 L1525.1,999.8 L1532.9,996.3 L1540.7,993.3 L1548.5,988.6 L1556.3,983.5 L1564.1,979.7 L1571.9,976.5 L1574.9,997.2 L1582.7,993.4 L1590.5,990.6 L1598.3,987.0 L1606.1,982.3 L1613.9,979.3 L1621.7,977.6 L1629.4,972.5 L1632.4,993.1 L1640.3,988.6 L1648.2,984.2 L1656.0,980.7 L1663.9,976.5 L1671.8,972.7 L1679.6,970.0 L1687.5,966.3 L1691.5,869.3 L1695.5,998.2 L1703.7,993.6 L1711.8,991.4 L1720.0,988.7 L1728.2,984.2 L1736.4,980.8 L1744.5,976.5 L1747.5,990.8 L1755.3,986.5 L1763.1,984.4 L1770.9,981.9 L1778.7,978.8 L1786.5,977.5 L1794.3,973.2 L1802.1,970.4 L1805.1,986.7 L1812.9,982.9 L1820.7,980.7 L1828.5,978.0 L1836.3,974.3 L1844.1,971.4 L1851.9,967.0 L1859.6,964.4 L1862.6,980.6 L1870.4,978.9 L1878.2,976.1 L1886.0,972.5 L1893.8,968.3 L1901.6,965.2 L1909.4,962.6 L1917.2,960.2 L1920.2,976.5 L1928.0,971.9 L1935.8,970.6 L1943.6,968.5 L1951.4,963.8 L1959.2,960.8 L1967.0,958.5 L1974.7,954.2 L1977.7,970.4 L1985.5,967.0 L1993.3,965.1 L2001.1,962.5 L2008.9,959.3 L2016.7,954.4 L2024.5,954.5 L2032.3,950.0 L2035.3,964.4 L2043.1,962.0 L2050.9,959.3 L2058.7,956.7 L2066.5,953.0 L2074.3,950.8 L2082.1,945.6 L2089.9,944.0 L2092.9,958.3 L2100.6,955.1 L2108.4,951.2 L2116.2,949.7 L2124.0,945.5 L2131.8,941.8 L2139.6,937.8 L2147.4,935.7 L2150.4,952.3 L2158.3,950.0 L2166.1,946.2 L2174.0,941.7 L2181.9,938.6 L2189.8,937.5 L2197.6,933.3 L2205.5,930.3 L2209.5,951.0 L2213.5,961.8 L2221.7,956.7 L2229.8,953.7 L2238.0,948.6 L2246.2,944.3 L2254.3,939.1 L2262.5,936.4 L2265.5,956.5 L2273.3,952.6 L2281.1,948.4 L2288.9,945.8 L2296.7,940.8 L2304.5,938.4 L2312.3,934.0 L2320.1,930.3 L2323.1,950.4 L2330.8,947.1 L2338.6,943.5 L2346.4,940.3 L2354.2,936.3 L2362.0,931.5 L2369.8,928.7 L2377.6,924.2 L2380.6,948.5 L2388.4,946.2 L2396.2,940.0 L2404.0,937.9 L2411.8,932.0 L2419.6,929.3 L2427.4,926.2 L2435.2,922.1 L2438.2,939.5 L2445.9,934.9 L2453.7,931.3 L2461.5,929.7 L2469.3,926.9 L2477.1,921.8 L2484.9,917.7 L2492.7,915.3 L2495.7,935.6 L2503.5,931.9 L2511.3,927.9 L2519.1,925.8 L2526.9,921.7 L2534.7,919.5 L2542.5,915.7 L2550.2,912.0 L2553.2,941.2 L2561.0,938.2 L2568.8,934.7 L2576.6,931.3 L2584.4,926.6 L2592.2,925.2 L2600.0,921.7 L2607.8,917.4 L2610.8,936.4 L2618.6,933.7 L2626.4,927.9 L2634.2,925.9 L2642.0,923.9 L2649.8,917.9 L2657.6,914.3 L2665.3,912.0 L2668.3,933.5 L2676.3,929.2 L2684.2,927.3 L2692.2,922.7 L2700.2,920.8 L2708.1,918.0 L2716.1,912.3 L2724.0,910.1 L2728.0,819.0 L2732.0,967.4 L2740.1,962.8 L2748.2,961.2 L2756.2,955.4 L2764.3,954.6 L2772.4,950.1 L2780.5,945.9 L2783.5,964.6 L2791.2,962.3 L2799.0,958.0 L2806.8,954.2 L2814.6,948.6 L2822.4,946.2 L2830.2,942.7 L2838.0,937.9 L2841.0,957.8 L2848.8,955.6 L2856.6,952.1 L2864.4,947.1 L2872.2,944.8 L2880.0,943.3 L2887.8,938.3 L2895.6,935.7 L2898.6,955.0 L2906.3,951.0 L2914.1,947.4 L2921.9,943.2 L2929.7,938.9 L2937.5,934.5 L2945.3,931.6 L2953.1,927.7 L2956.1,946.9 L2963.9,943.4 L2971.7,940.9 L2979.5,937.3 L2987.3,935.1 L2995.1,932.0 L3002.9,928.6 L3010.7,925.7 L3013.7,945.5 L3021.4,941.4 L3029.2,939.4 L3037.0,933.9 L3044.8,931.9 L3052.6,927.3 L3060.4,924.4 L3068.2,921.6 L3071.2,940.1 L3079.0,935.1 L3086.8,932.4 L3094.6,929.8 L3102.4,926.3 L3110.2,922.1 L3118.0,918.1 L3125.8,915.4 L3128.8,934.6 L3136.5,929.9 L3144.3,928.6 L3152.1,925.2 L3159.9,921.4 L3167.7,917.9 L3175.5,914.4 L3183.3,909.3 L3186.3,942.0 L3194.1,939.8 L3201.9,935.2 L3209.7,931.9 L3217.5,926.2 L3225.3,922.6 L3233.1,917.7 L3240.8,915.4 L3243.8,937.1 L3251.6,931.6 L3259.4,928.3 L3267.2,923.7 L3275.0,922.8 L3282.8,918.1 L3290.6,911.9 L3298.4,909.3 L3301.4,930.5 L3309.2,926.7 L3317.0,923.7 L3324.8,918.0 L3332.6,915.2 L3340.4,910.9 L3348.2,907.7 L3355.9,903.2 L3358.9,924.8 L3366.7,921.6 L3374.5,918.0 L3382.3,912.2 L3390.1,907.0 L3397.9,902.8 L3405.7,899.5 L3413.5,896.3 L3416.5,919.5 L3424.3,914.4 L3432.1,912.6 L3439.9,909.2 L3447.7,903.5 L3455.5,900.8 L3463.3,896.9 L3471.1,893.8 L3474.1,937.9 L3481.8,935.4 L3489.6,930.6 L3497.4,925.7 L3505.2,920.8 L3513.0,916.4 L3520.8,912.6 L3528.6,909.3 L3531.6,935.7 L3539.4,932.2 L3547.2,928.0 L3555.0,922.3 L3562.8,917.9 L3570.6,915.5 L3578.4,912.3 L3586.2,907.3 L3589.2,933.0 L3596.9,928.9 L3604.7,925.5 L3612.5,922.4 L3620.3,919.2 L3628.1,915.0 L3635.9,910.6 L3643.7,907.3 L3646.7,930.5 L3654.5,928.2 L3662.3,923.2 L3670.1,918.2 L3677.9,915.3 L3685.7,913.3 L3693.5,909.1 L3701.2,905.2 L3704.2,926.5 L3712.1,923.9 L3719.9,917.9 L3727.7,914.4 L3735.5,912.0 L3743.4,906.9 L3751.2,902.8 L3759.0,899.3 L3763.0,823.6 L3767.0,944.0 L3775.2,939.7 L3783.4,936.3 L3791.7,932.4 L3799.9,928.2 L3808.1,922.0 L3816.3,919.5 L3819.3,935.7 L3827.1,932.8 L3834.9,928.8 L3842.7,925.4 L3850.5,922.9 L3858.3,918.7 L3866.1,915.8 L3873.9,911.4 L3876.9,928.9 L3884.7,926.1 L3892.5,922.6 L3900.3,919.3 L3908.1,914.0 L3915.9,912.7 L3923.7,909.2 L3931.4,905.2 L3934.4,926.5 L3942.2,922.5 L3950.0,919.9 L3957.8,916.1 L3965.6,912.2 L3973.4,910.7 L3981.2,905.3 L3989.0,902.4 L3992.0,919.5 L3999.8,917.3 L4007.6,913.3 L4015.4,908.0 L4023.2,903.9 L4031.0,901.5 L4038.8,899.6 L4046.6,895.0 L4049.6,912.6 L4057.3,909.1 L4065.1,906.0 L4072.9,900.5 L4080.7,898.8 L4088.5,895.2 L4096.3,890.1 L4104.1,886.9 L4107.1,909.3 L4114.4,906.7 L4121.7,904.0" fill="none" stroke="#E2B43F" stroke-width="1.9" stroke-linejoin="round"/>
<path d="M221.3,1136.0 L222.2,1072.7 L226.0,1070.0 L232.0,1076.8 L238.0,1031.9 L242.5,1007.4 L248.0,1036.0 L254.0,978.9 L263.0,987.0 L269.0,928.5 L278.0,966.6 L284.0,893.1 L290.0,938.0 L298.7,848.2 L303.0,867.3 L310.5,939.2 L315.3,899.0 L318.9,889.8 L321.9,894.7 L324.2,912.2 L329.0,868.3 L332.6,861.9 L335.6,868.9 L339.0,882.6 L343.8,865.5 L347.4,862.2 L350.4,862.7 L353.5,879.1 L358.3,812.1 L361.9,801.9 L364.9,810.0 L367.7,946.3 L372.5,856.3 L376.1,847.8 L379.1,857.5 L381.6,896.0 L386.4,857.3 L390.0,847.9 L393.0,854.6 L396.3,902.7 L401.1,825.3 L404.7,810.3 L407.7,815.4 L410.8,874.4 L415.6,783.5 L419.2,771.2 L422.2,779.4 L424.7,930.2 L429.5,868.3 L433.1,862.3 L436.1,872.0 L439.5,914.7 L444.3,842.0 L447.9,830.7 L450.9,835.1 L453.7,891.4 L458.5,832.1 L462.1,823.8 L465.1,825.8 L468.5,859.5 L473.3,783.8 L476.9,771.0 L479.9,782.3 L482.6,932.3 L487.4,867.5 L491.0,856.7 L494.0,865.0 L497.2,908.2 L502.0,822.5 L505.6,814.4 L508.6,814.7 L511.4,882.9 L516.2,811.8 L519.8,799.5 L522.8,802.9 L525.4,851.1 L530.2,779.9 L533.8,765.4 L536.8,776.6 L539.9,900.4 L544.7,841.1 L548.3,830.0 L551.3,837.7 L555.0,877.5 L559.8,818.9 L563.4,804.6 L566.4,806.8 L569.0,864.3 L573.8,780.9 L577.4,763.8 L580.4,767.3 L583.1,826.8 L587.9,748.2 L591.5,737.3 L594.5,738.0 L597.7,853.1 L602.5,820.8 L606.1,812.7 L609.1,816.5 L612.6,852.5 L617.4,795.9 L621.0,785.2 L624.0,793.9 L626.8,828.3 L631.6,757.8 L635.2,749.6 L638.2,760.2 L641.0,821.3 L645.8,727.1 L649.4,708.3 L652.4,711.0 L655.6,860.9 L660.4,802.7 L664.0,790.2 L667.0,794.5 L670.1,831.2 L674.9,777.8 L678.5,766.0 L681.5,766.5 L684.0,811.2 L688.8,731.1 L692.4,718.8 L695.4,730.8 L698.6,802.3 L703.4,739.4 L707.0,732.2 L710.0,740.9 L712.4,826.4 L717.2,771.8 L720.8,766.4 L723.8,770.1 L727.4,811.2 L732.2,752.3 L735.8,744.8 L738.8,753.8 L741.9,794.9 L746.7,729.0 L750.3,713.3 L753.3,724.6 L755.8,767.4 L760.6,691.2 L764.2,676.7 L767.2,679.1 L770.4,814.7 L775.2,753.5 L778.8,743.9 L781.8,753.2 L785.2,792.6 L790.0,729.9 L793.6,716.7 L796.6,718.2 L798.9,774.0 L803.7,729.4 L807.3,719.1 L810.3,723.1 L813.9,756.6 L818.7,668.6 L822.3,659.9 L825.3,668.3 L827.9,791.0 L832.7,735.9 L836.3,728.4 L839.3,731.8 L842.1,769.2 L846.9,705.8 L850.5,698.2 L853.5,700.5 L856.7,759.5 L861.5,718.5 L865.1,710.5 L868.1,712.3 L871.3,730.9 L876.1,660.1 L879.7,644.7 L882.7,649.9 L885.9,780.2 L890.7,718.1 L894.3,710.7 L897.3,713.0 L899.9,755.5 L904.7,696.5 L908.3,687.5 L911.3,691.1 L914.6,746.8 L919.4,652.9 L923.0,636.3 L926.0,638.5 L928.9,709.6 L933.7,637.5 L937.3,621.1 L940.3,630.1 L943.3,749.1 L948.1,692.6 L951.7,681.1 L954.7,681.2 L957.4,731.4 L962.2,675.2 L965.8,662.8 L968.8,663.9 L971.7,719.7 L976.5,646.7 L980.1,631.7 L983.1,637.6 L986.2,701.9 L991.0,623.8 L994.6,615.4 L997.6,616.1 L1000.2,718.9 L1005.0,665.9 L1008.6,658.3 L1011.6,661.3 L1014.9,713.6 L1019.7,657.8 L1023.3,644.3 L1026.3,647.9 L1029.4,689.0 L1034.2,608.7 L1037.8,600.6 L1040.8,609.8 L1043.8,672.7 L1048.6,588.1 L1052.2,572.7 L1055.2,573.8 L1058.3,712.7 L1063.1,662.1 L1066.7,656.2 L1069.7,657.6 L1072.3,701.6 L1077.1,634.3 L1080.7,626.8 L1083.7,631.9 L1086.6,681.7 L1091.4,608.2 L1095.0,599.6 L1098.0,607.3 L1101.1,673.9 L1105.9,598.0 L1109.5,585.3 L1112.5,588.2 L1115.4,710.4 L1120.2,645.8 L1123.8,639.2 L1126.8,647.1 L1129.6,683.7 L1134.4,632.2 L1138.0,623.7 L1141.0,623.9 L1144.1,681.3 L1148.9,593.0 L1152.5,576.4 L1155.5,578.2 L1158.6,664.7 L1163.4,576.7 L1167.0,558.5 L1170.0,572.7 L1172.0,572.7 L1173.0,526.5 L1174.5,710.2 L1173.2,710.2 L1178.0,641.9 L1181.6,626.4 L1184.6,630.1 L1187.4,685.4 L1192.2,626.9 L1195.8,613.1 L1198.8,616.4 L1201.9,665.5 L1206.7,597.0 L1210.3,583.0 L1213.3,594.9 L1216.9,652.8 L1221.7,570.9 L1225.3,552.1 L1228.3,558.5 L1231.1,683.2 L1235.9,631.2 L1239.5,622.6 L1242.5,626.8 L1245.2,672.2 L1250.0,605.8 L1253.6,589.8 L1256.6,591.7 L1259.1,665.5 L1263.9,588.0 L1267.5,571.8 L1270.5,573.6 L1274.1,649.5 L1278.9,573.3 L1282.5,554.6 L1285.5,559.0 L1288.7,687.1 L1293.5,625.4 L1297.1,611.0 L1300.1,612.3 L1302.7,665.0 L1307.5,606.1 L1311.1,592.4 L1314.1,595.6 L1317.2,646.2 L1322.0,584.2 L1325.6,572.7 L1328.6,574.0 L1331.3,635.7 L1336.1,563.8 L1339.7,554.8 L1342.7,566.6 L1346.2,685.9 L1351.0,610.2 L1354.6,597.8 L1357.6,611.0 L1360.6,660.8 L1365.4,578.9 L1369.0,569.6 L1372.0,576.3 L1374.7,645.0 L1379.5,566.7 L1383.1,553.9 L1386.1,563.2 L1389.5,627.2 L1394.3,540.6 L1397.9,532.9 L1400.9,541.3 L1403.5,674.5 L1408.3,598.0 L1411.9,590.3 L1414.9,599.5 L1418.3,633.1 L1423.1,583.5 L1426.7,577.3 L1429.7,583.4 L1432.5,628.6 L1437.3,547.0 L1440.9,538.4 L1443.9,543.8 L1446.6,618.1 L1451.4,526.8 L1455.0,512.3 L1458.0,513.1 L1460.6,660.6 L1465.4,597.1 L1469.0,586.9 L1472.0,588.4 L1475.7,651.9 L1480.5,577.9 L1484.1,563.6 L1487.1,575.0 L1489.6,628.2 L1494.4,549.8 L1498.0,540.9 L1501.0,543.4 L1504.2,631.8 L1509.0,533.7 L1512.6,514.2 L1515.6,517.4 L1518.5,670.6 L1523.3,614.8 L1526.9,604.4 L1529.9,608.4 L1532.7,659.7 L1537.5,574.8 L1541.1,562.6 L1544.1,571.7 L1547.8,644.5 L1552.6,554.4 L1556.2,543.2 L1559.2,551.3 L1561.3,636.6 L1566.1,532.3 L1569.7,510.3 L1572.7,511.0 L1576.1,677.2 L1580.9,611.4 L1584.5,601.3 L1587.5,603.9 L1590.1,657.4 L1594.9,575.8 L1598.5,568.6 L1601.5,579.6 L1605.0,655.2 L1609.8,559.0 L1613.4,537.7 L1616.4,553.6 L1619.4,637.6 L1624.2,521.5 L1627.8,507.8 L1630.8,517.5 L1633.8,681.6 L1638.6,615.2 L1642.2,606.6 L1645.2,608.7 L1648.2,673.5 L1653.0,589.2 L1656.6,581.5 L1659.6,584.4 L1662.4,635.6 L1667.2,549.1 L1670.8,536.6 L1673.8,543.0 L1676.5,642.9 L1681.3,535.4 L1684.9,514.3 L1687.9,522.9 L1691.3,696.1 L1696.1,621.3 L1699.7,604.8 L1702.7,611.4 L1705.2,673.4 L1710.0,590.0 L1713.6,580.3 L1716.6,580.8 L1720.1,667.6 L1724.9,552.3 L1728.5,536.9 L1731.5,543.3 L1734.3,658.6 L1739.1,518.4 L1742.7,503.0 L1745.7,523.0 L1748.7,691.1 L1753.5,609.3 L1757.1,595.7 L1760.1,608.6 L1763.4,648.8 L1768.2,581.8 L1771.8,572.4 L1774.8,578.2 L1777.6,658.6 L1782.4,559.1 L1786.0,542.6 L1789.0,552.9 L1791.7,655.5 L1796.5,537.6 L1800.1,511.9 L1803.1,522.7 L1806.6,679.8 L1811.4,615.0 L1815.0,606.2 L1818.0,616.1 L1821.2,668.4 L1826.0,587.5 L1829.6,571.3 L1832.6,572.8 L1835.5,651.5 L1840.3,556.6 L1843.9,547.3 L1846.9,559.2 L1849.1,661.4 L1853.9,544.9 L1857.5,523.3 L1860.5,531.0 L1863.5,679.4 L1868.3,604.4 L1871.9,596.2 L1874.9,605.5 L1878.6,654.1 L1883.4,572.1 L1887.0,551.6 L1890.0,553.1 L1892.9,642.0 L1897.7,554.5 L1901.3,533.7 L1904.3,544.1 L1907.4,626.2 L1912.2,529.1 L1915.8,507.6 L1918.8,522.8 L1921.8,659.3 L1926.6,605.5 L1930.2,592.2 L1933.2,599.0 L1935.8,647.0 L1940.6,569.5 L1944.2,550.9 L1947.2,551.2 L1950.4,634.3 L1955.2,534.2 L1958.8,510.0 L1961.8,524.5 L1964.3,619.7 L1969.1,510.2 L1972.7,491.5 L1975.7,492.4 L1978.6,649.0 L1983.4,572.1 L1987.0,564.4 L1990.0,566.5 L1993.7,631.0 L1998.5,558.2 L2002.1,546.3 L2005.1,549.6 L2008.0,616.8 L2012.8,545.2 L2016.4,529.1 L2019.4,531.6 L2022.0,598.5 L2026.8,513.7 L2030.4,503.5 L2033.4,515.0 L2036.7,649.0 L2041.5,579.1 L2045.1,572.6 L2048.1,577.7 L2051.1,631.1 L2055.9,570.8 L2059.5,562.4 L2062.5,570.6 L2065.7,613.3 L2070.5,522.8 L2074.1,502.1 L2077.1,511.5 L2079.8,597.4 L2084.6,492.5 L2088.2,476.0 L2091.2,491.1 L2094.3,648.2 L2099.1,579.3 L2102.7,570.0 L2105.7,578.3 L2107.9,639.1 L2112.7,560.0 L2116.3,547.0 L2119.3,557.6 L2122.6,620.4 L2127.4,535.5 L2131.0,516.7 L2134.0,529.2 L2137.1,588.1 L2141.9,517.5 L2145.5,500.1 L2148.5,509.3 L2151.7,651.1 L2156.5,588.0 L2160.1,577.7 L2163.1,578.5 L2165.8,637.2 L2170.6,558.7 L2174.2,548.9 L2177.2,553.8 L2180.8,613.4 L2185.6,532.7 L2189.2,515.7 L2192.2,521.4 L2194.7,597.8 L2199.5,505.7 L2203.1,493.8 L2206.1,505.8 L2208.7,655.0 L2213.5,600.3 L2217.1,593.9 L2220.1,602.4 L2223.3,639.7 L2228.1,565.0 L2231.7,554.4 L2234.7,561.2 L2237.9,622.0 L2242.7,541.9 L2246.3,523.7 L2249.3,524.2 L2252.4,599.1 L2257.2,515.5 L2260.8,504.0 L2263.8,507.3 L2267.0,669.3 L2271.8,594.6 L2275.4,584.4 L2278.4,592.9 L2281.4,631.8 L2286.2,586.8 L2289.8,581.5 L2292.8,583.8 L2295.0,626.4 L2299.8,539.0 L2303.4,529.8 L2306.4,530.3 L2309.9,598.5 L2314.7,517.3 L2318.3,508.2 L2321.3,516.7 L2324.7,657.5 L2329.5,598.0 L2333.1,588.1 L2336.1,596.6 L2338.6,642.8 L2343.4,568.0 L2347.0,559.4 L2350.0,569.1 L2353.2,621.8 L2358.0,536.1 L2361.6,523.4 L2364.6,528.7 L2367.6,591.6 L2372.4,551.2 L2376.0,544.2 L2379.0,549.4 L2382.2,659.9 L2387.0,582.7 L2390.6,568.3 L2393.6,579.6 L2396.6,637.1 L2401.4,570.5 L2405.0,560.1 L2408.0,561.7 L2410.3,616.4 L2415.1,546.5 L2418.7,530.8 L2421.7,532.4 L2424.9,606.7 L2429.7,516.5 L2433.3,501.3 L2436.3,507.6 L2439.2,660.9 L2444.0,578.1 L2447.6,569.9 L2450.6,574.9 L2454.1,651.0 L2458.9,561.0 L2462.5,551.7 L2465.5,560.5 L2467.8,626.4 L2472.6,537.8 L2476.2,519.9 L2479.2,524.8 L2483.0,607.0 L2487.8,529.3 L2491.4,517.1 L2494.4,526.8 L2496.9,669.1 L2501.7,594.0 L2505.3,576.0 L2508.3,579.8 L2510.8,643.0 L2515.6,564.7 L2519.2,548.0 L2522.2,558.1 L2525.6,620.1 L2530.4,546.9 L2534.0,534.0 L2537.0,546.0 L2540.3,617.1 L2545.1,519.1 L2548.7,495.1 L2551.7,511.3 L2554.1,655.3 L2558.9,582.9 L2562.5,570.9 L2565.5,577.3 L2569.0,636.2 L2573.8,571.2 L2577.4,556.7 L2580.4,565.2 L2583.7,620.0 L2588.5,536.1 L2592.1,515.6 L2595.1,523.1 L2597.5,612.5 L2602.3,526.0 L2605.9,511.4 L2608.9,511.6 L2612.1,668.9 L2616.9,597.8 L2620.5,583.5 L2623.5,587.6 L2626.6,645.9 L2631.4,571.7 L2635.0,558.0 L2638.0,567.2 L2640.5,624.6 L2645.3,533.8 L2648.9,520.5 L2651.9,530.6 L2655.2,582.8 L2660.0,523.3 L2663.6,513.4 L2666.6,523.7 L2669.8,658.4 L2674.6,583.5 L2678.2,564.9 L2681.2,565.6 L2684.1,646.1 L2688.9,560.4 L2692.5,549.8 L2695.5,550.0 L2698.4,623.3 L2703.2,536.5 L2706.8,515.3 L2709.8,528.3 L2713.2,576.4 L2718.0,521.3 L2721.6,509.3 L2724.6,515.0 L2727.0,640.7 L2727.0,640.7 L2728.0,465.2 L2729.5,576.7 L2731.8,576.7 L2735.4,564.0 L2738.4,573.3 L2741.8,627.8 L2746.6,559.1 L2750.2,551.5 L2753.2,560.9 L2756.2,612.3 L2761.0,532.8 L2764.6,522.4 L2767.6,535.2 L2770.5,590.6 L2775.3,515.0 L2778.9,503.5 L2781.9,509.1 L2784.6,651.3 L2789.4,571.1 L2793.0,557.2 L2796.0,566.4 L2799.5,630.6 L2804.3,551.9 L2807.9,544.2 L2810.9,544.4 L2813.3,590.8 L2818.1,513.2 L2821.7,499.4 L2824.7,501.3 L2827.4,595.0 L2832.2,506.7 L2835.8,486.9 L2838.8,493.9 L2842.4,643.9 L2847.2,563.2 L2850.8,551.1 L2853.8,559.3 L2856.4,630.1 L2861.2,558.2 L2864.8,544.0 L2867.8,544.0 L2870.9,592.5 L2875.7,524.0 L2879.3,509.5 L2882.3,511.4 L2885.3,592.9 L2890.1,504.7 L2893.7,486.9 L2896.7,494.1 L2899.3,642.1 L2904.1,574.8 L2907.7,561.5 L2910.7,565.7 L2914.3,620.0 L2919.1,541.9 L2922.7,524.7 L2925.7,527.2 L2928.1,606.3 L2932.9,513.6 L2936.5,500.0 L2939.5,503.7 L2943.0,565.1 L2947.8,491.2 L2951.4,483.3 L2954.4,490.0 L2957.7,636.3 L2962.5,566.7 L2966.1,552.8 L2969.1,559.8 L2972.0,606.9 L2976.8,552.4 L2980.4,547.0 L2983.4,552.8 L2986.2,607.9 L2991.0,519.8 L2994.6,510.2 L2997.6,515.4 L3000.9,591.8 L3005.7,517.0 L3009.3,500.0 L3012.3,512.2 L3014.8,627.7 L3019.6,563.6 L3023.2,550.4 L3026.2,557.6 L3028.8,620.5 L3033.6,548.8 L3037.2,534.4 L3040.2,536.9 L3043.8,598.8 L3048.6,516.0 L3052.2,506.7 L3055.2,511.9 L3058.4,585.0 L3063.2,485.5 L3066.8,462.5 L3069.8,472.8 L3072.0,628.7 L3076.8,565.0 L3080.4,552.7 L3083.4,554.3 L3087.0,610.6 L3091.8,528.8 L3095.4,518.3 L3098.4,527.2 L3101.5,593.3 L3106.3,520.5 L3109.9,511.5 L3112.9,516.4 L3115.6,582.5 L3120.4,494.0 L3124.0,473.5 L3127.0,487.8 L3130.3,615.1 L3135.1,563.7 L3138.7,555.4 L3141.7,556.2 L3144.0,616.3 L3148.8,547.8 L3152.4,531.6 L3155.4,533.6 L3159.2,592.7 L3164.0,510.0 L3167.6,495.0 L3170.6,497.4 L3173.4,581.2 L3178.2,484.1 L3181.8,461.3 L3184.8,477.2 L3187.0,625.0 L3191.8,566.2 L3195.4,557.6 L3198.4,560.3 L3202.4,612.7 L3207.2,535.3 L3210.8,524.0 L3213.8,536.7 L3216.7,578.7 L3221.5,494.2 L3225.1,485.2 L3228.1,490.8 L3230.5,591.1 L3235.3,505.7 L3238.9,497.7 L3241.9,506.8 L3244.8,631.6 L3249.6,577.7 L3253.2,569.7 L3256.2,575.2 L3259.6,593.8 L3264.4,543.7 L3268.0,533.1 L3271.0,538.5 L3273.4,587.5 L3278.2,512.0 L3281.8,493.9 L3284.8,507.0 L3288.3,567.2 L3293.1,487.1 L3296.7,477.2 L3299.7,488.9 L3302.8,612.3 L3307.6,570.1 L3311.2,566.1 L3314.2,570.8 L3317.1,594.4 L3321.9,539.8 L3325.5,530.5 L3328.5,534.8 L3331.5,599.1 L3336.3,525.7 L3339.9,507.8 L3342.9,514.1 L3346.2,573.0 L3351.0,496.4 L3354.6,483.9 L3357.6,495.7 L3360.0,632.8 L3364.8,572.9 L3368.4,565.3 L3371.4,573.2 L3374.9,622.6 L3379.7,551.0 L3383.3,539.0 L3386.3,541.6 L3388.9,593.4 L3393.7,517.2 L3397.3,504.8 L3400.3,508.8 L3402.9,579.8 L3407.7,490.8 L3411.3,475.6 L3414.3,481.0 L3417.3,622.7 L3422.1,570.2 L3425.7,563.8 L3428.7,568.4 L3431.8,611.7 L3436.6,548.9 L3440.2,537.8 L3443.2,543.0 L3446.8,604.6 L3451.6,534.8 L3455.2,526.1 L3458.2,530.5 L3460.9,586.3 L3465.7,488.2 L3469.3,475.2 L3472.3,485.7 L3474.8,633.2 L3479.6,583.8 L3483.2,579.3 L3486.2,580.7 L3490.1,614.3 L3494.9,546.1 L3498.5,534.4 L3501.5,534.7 L3504.1,602.7 L3508.9,518.6 L3512.5,507.1 L3515.5,510.6 L3518.1,596.2 L3522.9,490.9 L3526.5,475.1 L3529.5,487.7 L3532.6,644.6 L3537.4,577.9 L3541.0,568.6 L3544.0,571.8 L3547.7,621.9 L3552.5,544.4 L3556.1,530.8 L3559.1,531.7 L3561.5,621.3 L3566.3,538.1 L3569.9,524.7 L3572.9,526.4 L3575.9,591.2 L3580.7,492.3 L3584.3,480.7 L3587.3,482.0 L3590.5,641.5 L3595.3,568.1 L3598.9,554.7 L3601.9,565.6 L3605.2,630.3 L3610.0,547.8 L3613.6,540.0 L3616.6,545.7 L3619.5,624.9 L3624.3,519.2 L3627.9,502.5 L3630.9,516.2 L3633.5,611.5 L3638.3,505.6 L3641.9,490.9 L3644.9,494.2 L3648.3,656.6 L3653.1,586.5 L3656.7,572.3 L3659.7,580.7 L3662.4,638.7 L3667.2,568.4 L3670.8,553.5 L3673.8,561.3 L3676.3,629.6 L3681.1,542.6 L3684.7,533.9 L3687.7,541.6 L3691.4,622.3 L3696.2,506.8 L3699.8,493.0 L3702.8,508.0 L3705.3,651.8 L3710.1,593.6 L3713.7,582.1 L3716.7,586.2 L3719.5,644.2 L3724.3,559.0 L3727.9,540.6 L3730.9,543.9 L3734.6,609.8 L3739.4,526.4 L3743.0,515.8 L3746.0,529.4 L3749.0,632.8 L3753.8,522.8 L3757.4,510.2 L3760.4,513.0 L3763.4,645.4 L3768.2,579.5 L3771.8,565.3 L3774.8,569.4 L3777.7,637.6 L3782.5,556.0 L3786.1,535.7 L3789.1,547.7 L3792.0,605.9 L3796.8,542.4 L3800.4,532.3 L3803.4,534.2 L3805.9,620.1 L3810.7,510.4 L3814.3,497.2 L3817.3,499.3 L3820.3,636.6 L3825.1,580.3 L3828.7,566.8 L3831.7,573.2 L3834.6,619.0 L3839.4,544.0 L3843.0,533.9 L3846.0,536.0 L3849.3,610.9 L3854.1,529.0 L3857.7,516.7 L3860.7,524.4 L3864.0,603.6 L3868.8,507.3 L3872.4,492.5 L3875.4,507.2 L3878.4,649.1 L3883.2,558.4 L3886.8,548.0 L3889.8,554.8 L3892.3,620.1 L3897.1,540.3 L3900.7,524.8 L3903.7,526.7 L3906.6,617.5 L3911.4,527.5 L3915.0,518.0 L3918.0,530.3 L3921.0,585.6 L3925.8,510.4 L3929.4,491.7 L3932.4,494.4 L3935.3,633.2 L3940.1,573.7 L3943.7,568.2 L3946.7,570.2 L3950.4,625.3 L3955.2,540.9 L3958.8,528.3 L3961.8,538.4 L3964.0,614.8 L3968.8,520.3 L3972.4,504.0 L3975.4,510.6 L3979.1,596.3 L3983.9,504.3 L3987.5,486.1 L3990.5,497.2 L3993.2,635.4 L3998.0,567.1 L4001.6,555.0 L4004.6,562.8 L4007.3,615.9 L4012.1,557.6 L4015.7,543.1 L4018.7,547.5 L4021.7,601.1 L4026.5,516.7 L4030.1,505.4 L4033.1,511.5 L4036.2,587.7 L4041.0,489.8 L4044.6,473.3 L4047.6,483.4 L4050.5,624.1 L4055.3,570.6 L4058.9,563.7 L4061.9,564.0 L4065.4,618.8 L4070.2,553.9 L4073.8,538.1 L4076.8,539.9 L4079.7,610.7 L4084.5,519.7 L4088.1,501.7 L4091.1,502.6 L4093.5,595.8 L4098.3,503.1 L4101.9,489.7 L4104.9,502.4 L4108.3,641.1 L4113.1,569.4 L4116.7,557.6 L4121.7,565.9" fill="none" stroke="#8AB8FF" stroke-width="1.9" stroke-linejoin="round"/>
<path d="M221.3,1136.0 L222.2,1076.1 L226.0,1073.4 L232.0,1080.2 L238.0,1035.3 L242.5,1010.8 L248.0,1039.4 L254.0,982.3 L263.0,990.4 L269.0,931.9 L278.0,970.0 L284.0,896.5 L290.0,941.4 L298.7,851.6 L303.0,870.7 L309.7,946.0 L314.5,910.6 L318.1,906.4 L321.1,911.2 L324.4,922.8 L329.2,892.4 L332.8,885.2 L335.8,889.7 L338.5,893.6 L343.3,835.2 L346.9,829.0 L349.9,835.0 L352.7,872.7 L357.5,803.6 L361.1,790.8 L364.1,792.8 L367.9,939.6 L372.7,872.6 L376.3,859.9 L379.3,865.7 L381.6,913.6 L386.4,852.8 L390.0,840.0 L393.0,850.7 L396.7,901.2 L401.5,841.2 L405.1,827.6 L408.1,832.8 L411.0,873.2 L415.8,786.2 L419.4,770.1 L422.4,777.1 L425.0,934.0 L429.8,887.5 L433.4,883.4 L436.4,887.1 L439.5,926.4 L444.3,853.4 L447.9,842.2 L450.9,850.1 L453.6,890.7 L458.4,814.2 L462.0,802.9 L465.0,807.0 L467.9,859.8 L472.7,784.3 L476.3,774.2 L479.3,782.9 L483.0,925.1 L487.8,873.1 L491.4,865.4 L494.4,873.3 L497.0,911.8 L501.8,845.2 L505.4,829.4 L508.4,839.4 L511.7,897.4 L516.5,832.2 L520.1,820.8 L523.1,822.7 L525.4,870.0 L530.2,775.5 L533.8,759.8 L536.8,763.9 L540.7,935.8 L545.5,886.0 L549.1,880.2 L552.1,887.5 L554.7,910.6 L559.5,836.9 L563.1,825.3 L566.1,828.9 L569.2,849.7 L574.0,804.8 L577.6,798.5 L580.6,805.0 L583.5,858.3 L588.3,779.0 L591.9,761.1 L594.9,762.5 L597.3,914.4 L602.1,863.0 L605.7,855.9 L608.7,857.0 L612.2,901.5 L617.0,833.1 L620.6,818.3 L623.6,823.0 L626.7,877.4 L631.5,804.5 L635.1,795.8 L638.1,805.4 L640.4,855.1 L645.2,773.9 L648.8,763.4 L651.8,766.9 L655.5,916.6 L660.3,857.9 L663.9,852.0 L666.9,854.9 L669.7,907.4 L674.5,839.0 L678.1,828.0 L681.1,836.8 L684.5,874.0 L689.3,798.2 L692.9,780.1 L695.9,791.6 L698.9,851.2 L703.7,772.6 L707.3,754.1 L710.3,755.2 L713.2,884.4 L718.0,858.5 L721.6,854.1 L724.6,856.4 L727.1,888.3 L731.9,840.1 L735.5,833.8 L738.5,840.5 L741.9,866.6 L746.7,792.0 L750.3,781.4 L753.3,793.7 L755.6,846.9 L760.4,760.6 L764.0,750.3 L767.0,759.4 L770.7,902.6 L775.5,857.6 L779.1,848.3 L782.1,855.8 L784.7,883.2 L789.5,827.4 L793.1,813.5 L796.1,816.8 L799.0,855.2 L803.8,784.4 L807.4,770.5 L810.4,782.5 L813.8,833.3 L818.6,757.4 L822.2,741.2 L825.2,745.8 L828.1,888.1 L832.9,840.0 L836.5,830.2 L839.5,837.5 L842.0,866.2 L846.8,809.1 L850.4,798.7 L853.4,808.2 L856.7,850.6 L861.5,773.4 L865.1,759.4 L868.1,763.1 L870.8,819.5 L875.6,743.1 L879.2,733.1 L882.2,733.4 L885.5,867.5 L890.3,823.0 L893.9,811.9 L896.9,816.4 L899.5,856.7 L904.3,791.1 L907.9,776.3 L910.9,785.9 L914.6,834.9 L919.4,764.9 L923.0,754.1 L926.0,756.8 L929.0,782.4 L933.8,746.0 L937.4,737.4 L940.4,743.5 L943.3,864.9 L948.1,842.2 L951.7,838.9 L954.7,840.8 L957.7,846.7 L962.5,778.5 L966.1,768.8 L969.1,779.2 L971.4,816.6 L976.2,753.0 L979.8,740.2 L982.8,740.8 L985.8,811.5 L990.6,731.9 L994.2,713.5 L997.2,727.2 L1000.6,862.5 L1005.4,801.5 L1009.0,787.1 L1012.0,796.5 L1014.7,828.5 L1019.5,773.9 L1023.1,762.0 L1026.1,769.1 L1029.4,807.2 L1034.2,731.8 L1037.8,721.7 L1040.8,724.5 L1044.0,786.7 L1048.8,721.5 L1052.4,709.8 L1055.4,720.6 L1058.6,847.7 L1063.4,794.2 L1067.0,786.4 L1070.0,793.4 L1072.7,820.3 L1077.5,755.7 L1081.1,742.0 L1084.1,753.7 L1087.0,805.9 L1091.8,752.7 L1095.4,740.2 L1098.4,744.2 L1101.0,798.2 L1105.8,721.6 L1109.4,702.9 L1112.4,708.9 L1115.8,835.1 L1120.6,782.4 L1124.2,777.3 L1127.2,781.8 L1130.5,827.3 L1135.3,761.5 L1138.9,752.2 L1141.9,760.9 L1144.7,807.0 L1149.5,740.3 L1153.1,729.3 L1156.1,732.4 L1158.9,786.0 L1163.7,706.2 L1167.3,697.0 L1170.3,706.8 L1173.5,811.5 L1178.3,778.1 L1181.9,773.1 L1184.9,776.4 L1188.1,819.1 L1192.9,752.9 L1196.5,742.0 L1199.5,742.6 L1201.9,797.7 L1206.7,737.7 L1210.3,729.1 L1213.3,735.3 L1216.6,774.7 L1221.4,712.3 L1225.0,704.9 L1228.0,713.2 L1231.2,832.5 L1236.0,765.8 L1239.6,752.8 L1242.6,760.4 L1244.8,814.6 L1249.6,759.1 L1253.2,747.4 L1256.2,749.4 L1259.6,798.7 L1264.4,732.3 L1268.0,723.0 L1271.0,727.2 L1273.7,777.2 L1278.5,707.4 L1282.1,691.6 L1285.1,702.9 L1288.5,822.6 L1293.3,767.6 L1296.9,758.7 L1299.9,767.9 L1302.6,819.1 L1307.4,753.5 L1311.0,745.4 L1314.0,752.5 L1317.1,776.5 L1321.9,723.9 L1325.5,715.0 L1328.5,717.0 L1331.6,777.8 L1336.4,702.0 L1340.0,693.2 L1343.0,697.4 L1345.7,828.0 L1350.5,761.3 L1354.1,751.7 L1357.1,761.4 L1360.0,804.0 L1364.8,735.0 L1368.4,726.6 L1371.4,729.0 L1374.9,793.7 L1379.7,727.3 L1383.3,711.9 L1386.3,714.4 L1389.1,751.8 L1393.9,706.6 L1397.5,697.9 L1400.5,705.3 L1403.3,824.1 L1408.1,757.7 L1411.7,749.7 L1414.7,756.2 L1417.5,804.0 L1422.3,737.6 L1425.9,729.1 L1428.9,735.1 L1431.9,792.8 L1436.7,708.2 L1440.3,698.4 L1443.3,699.2 L1446.4,765.1 L1451.2,698.9 L1454.8,684.1 L1457.8,687.9 L1460.6,824.4 L1465.4,757.9 L1469.0,750.8 L1472.0,755.5 L1475.6,808.1 L1480.4,743.7 L1484.0,729.9 L1487.0,735.7 L1489.6,787.5 L1494.4,715.0 L1498.0,699.5 L1501.0,699.9 L1503.9,764.2 L1508.7,697.8 L1512.3,688.6 L1515.3,693.7 L1518.8,823.4 L1523.6,750.8 L1527.2,742.8 L1530.2,751.1 L1532.9,806.8 L1537.7,718.4 L1541.3,706.5 L1544.3,718.1 L1547.5,771.5 L1552.3,713.8 L1555.9,702.7 L1558.9,706.6 L1562.2,763.8 L1567.0,687.1 L1570.6,671.7 L1573.6,682.7 L1576.2,814.6 L1581.0,758.5 L1584.6,752.2 L1587.6,761.4 L1590.5,800.2 L1595.3,736.6 L1598.9,725.5 L1601.9,733.0 L1604.7,762.8 L1609.5,700.2 L1613.1,689.5 L1616.1,697.9 L1618.8,767.6 L1623.6,689.1 L1627.2,675.6 L1630.2,685.4 L1633.6,818.5 L1638.4,739.3 L1642.0,729.0 L1645.0,740.2 L1648.5,795.8 L1653.3,712.2 L1656.9,703.0 L1659.9,704.9 L1662.3,774.7 L1667.1,706.8 L1670.7,693.2 L1673.7,702.8 L1676.3,766.6 L1681.1,683.9 L1684.7,663.6 L1687.7,676.0 L1690.9,814.5 L1690.0,814.5 L1691.0,602.6 L1692.5,747.9 L1695.7,747.9 L1699.3,738.3 L1702.3,740.2 L1705.9,781.3 L1710.7,714.3 L1714.3,700.2 L1717.3,705.0 L1720.3,771.9 L1725.1,708.2 L1728.7,695.9 L1731.7,699.4 L1734.3,749.1 L1739.1,685.9 L1742.7,679.7 L1745.7,684.5 L1748.9,803.3 L1753.7,742.6 L1757.3,736.3 L1760.3,745.5 L1762.7,791.8 L1767.5,725.4 L1771.1,715.1 L1774.1,716.5 L1777.8,776.5 L1782.6,695.1 L1786.2,683.5 L1789.2,692.3 L1791.5,747.2 L1796.3,675.8 L1799.9,662.6 L1802.9,670.3 L1806.2,811.2 L1811.0,734.9 L1814.6,725.6 L1817.6,728.5 L1820.3,784.4 L1825.1,719.7 L1828.7,706.5 L1831.7,710.6 L1835.1,767.6 L1839.9,701.0 L1843.5,687.3 L1846.5,691.4 L1849.3,754.3 L1854.1,672.5 L1857.7,661.6 L1860.7,666.0 L1864.0,800.2 L1868.8,744.2 L1872.4,738.7 L1875.4,741.2 L1878.4,777.2 L1883.2,712.1 L1886.8,703.8 L1889.8,706.7 L1892.9,776.0 L1897.7,681.3 L1901.3,671.2 L1904.3,681.3 L1907.1,750.1 L1911.9,658.7 L1915.5,644.4 L1918.5,655.4 L1921.4,813.6 L1926.2,747.0 L1929.8,735.4 L1932.8,740.4 L1936.0,784.0 L1940.8,721.4 L1944.4,706.0 L1947.4,709.4 L1950.1,762.3 L1954.9,674.7 L1958.5,662.2 L1961.5,675.1 L1964.6,759.9 L1969.4,687.6 L1973.0,674.0 L1976.0,679.5 L1978.5,803.2 L1983.3,754.3 L1986.9,745.0 L1989.9,752.0 L1993.1,778.5 L1997.9,712.6 L2001.5,703.7 L2004.5,704.6 L2008.2,757.3 L2013.0,691.5 L2016.6,677.1 L2019.6,681.8 L2022.4,745.4 L2027.2,654.1 L2030.8,640.5 L2033.8,650.7 L2036.4,804.7 L2041.2,728.2 L2044.8,711.9 L2047.8,719.1 L2050.6,769.6 L2055.4,699.0 L2059.0,689.3 L2062.0,695.9 L2065.6,758.3 L2070.4,674.5 L2074.0,664.1 L2077.0,677.9 L2079.7,737.8 L2084.5,648.9 L2088.1,628.4 L2091.1,634.9 L2094.2,780.3 L2099.0,733.8 L2102.6,725.6 L2105.6,730.9 L2108.0,764.1 L2112.8,708.0 L2116.4,696.7 L2119.4,704.8 L2122.8,746.3 L2127.6,685.1 L2131.2,673.6 L2134.2,683.9 L2137.6,729.1 L2142.4,639.6 L2146.0,621.8 L2149.0,629.0 L2152.1,773.0 L2156.9,708.0 L2160.5,701.9 L2163.5,706.9 L2166.3,754.3 L2171.1,686.4 L2174.7,678.3 L2177.7,679.9 L2180.4,738.5 L2185.2,658.7 L2188.8,651.4 L2191.8,658.1 L2194.8,716.3 L2199.6,641.8 L2203.2,628.5 L2206.2,641.2 L2209.6,776.2 L2214.4,710.0 L2218.0,695.9 L2221.0,697.9 L2223.8,744.8 L2228.6,676.1 L2232.2,665.7 L2235.2,676.7 L2237.7,728.7 L2242.5,644.4 L2246.1,636.1 L2249.1,645.7 L2252.7,717.9 L2257.5,623.1 L2261.1,605.7 L2264.1,613.7 L2266.9,755.0 L2271.7,695.1 L2275.3,685.9 L2278.3,692.0 L2280.9,748.2 L2285.7,684.7 L2289.3,672.0 L2292.3,679.2 L2295.0,728.8 L2299.8,651.7 L2303.4,640.3 L2306.4,642.6 L2309.4,712.7 L2314.2,605.4 L2317.8,592.8 L2320.8,610.4 L2324.0,760.1 L2328.8,703.6 L2332.4,694.2 L2335.4,701.9 L2338.4,748.3 L2343.2,665.7 L2346.8,654.4 L2349.8,657.5 L2352.7,731.6 L2357.5,646.1 L2361.1,627.3 L2364.1,635.6 L2367.4,706.9 L2372.2,609.3 L2375.8,585.7 L2378.8,597.4 L2382.0,750.2 L2386.8,673.5 L2390.4,666.2 L2393.4,677.0 L2396.0,733.7 L2400.8,665.2 L2404.4,658.8 L2407.4,662.1 L2410.5,716.1 L2415.3,631.4 L2418.9,615.4 L2421.9,623.7 L2425.3,703.2 L2430.1,609.3 L2433.7,592.5 L2436.7,603.3 L2439.2,748.1 L2444.0,689.8 L2447.6,683.0 L2450.6,684.6 L2453.9,739.1 L2458.7,666.2 L2462.3,653.6 L2465.3,661.9 L2467.8,710.2 L2472.6,662.7 L2476.2,658.5 L2479.2,661.8 L2482.3,694.2 L2487.1,630.6 L2490.7,622.0 L2493.7,622.7 L2496.7,745.4 L2501.5,699.6 L2505.1,691.6 L2508.1,697.3 L2511.3,725.3 L2516.1,671.8 L2519.7,664.9 L2522.7,669.3 L2525.8,713.4 L2530.6,635.7 L2534.2,626.3 L2537.2,637.5 L2540.1,688.2 L2544.9,614.0 L2548.5,600.5 L2551.5,608.0 L2554.8,751.5 L2559.6,694.2 L2563.2,687.5 L2566.2,693.3 L2568.4,724.4 L2573.2,664.4 L2576.8,657.1 L2579.8,658.8 L2583.4,704.1 L2588.2,641.0 L2591.8,626.0 L2594.8,633.2 L2597.5,693.2 L2602.3,627.5 L2605.9,616.7 L2608.9,623.8 L2611.6,742.0 L2616.4,705.6 L2620.0,701.6 L2623.0,707.6 L2626.5,723.9 L2631.3,670.5 L2634.9,662.9 L2637.9,668.6 L2641.3,703.5 L2646.1,642.3 L2649.7,631.3 L2652.7,639.1 L2654.9,694.0 L2659.7,615.4 L2663.3,601.7 L2666.3,615.3 L2669.2,731.4 L2674.0,695.5 L2677.6,690.5 L2680.6,695.4 L2683.8,724.2 L2688.6,674.5 L2692.2,664.9 L2695.2,669.2 L2698.6,698.0 L2703.4,648.9 L2707.0,638.0 L2710.0,643.0 L2712.7,684.0 L2717.5,620.3 L2721.1,608.4 L2724.1,613.4 L2726.7,744.0 L2728.0,744.0 L2729.0,570.0 L2730.5,682.7 L2731.5,682.7 L2735.1,676.6 L2738.1,682.6 L2741.4,721.2 L2746.2,654.4 L2749.8,648.4 L2752.8,652.3 L2755.8,711.8 L2760.6,637.7 L2764.2,620.2 L2767.2,625.2 L2770.4,700.4 L2775.2,616.1 L2778.8,599.7 L2781.8,606.3 L2784.9,750.5 L2789.7,684.0 L2793.3,673.7 L2796.3,676.0 L2799.2,738.3 L2804.0,661.4 L2807.6,654.6 L2810.6,657.5 L2813.9,720.1 L2818.7,632.5 L2822.3,624.4 L2825.3,635.9 L2827.6,696.4 L2832.4,617.1 L2836.0,598.3 L2839.0,598.3 L2842.7,748.8 L2847.5,679.5 L2851.1,671.6 L2854.1,677.7 L2856.7,730.4 L2861.5,661.6 L2865.1,651.6 L2868.1,656.8 L2870.8,729.4 L2875.6,646.1 L2879.2,638.6 L2882.2,640.4 L2884.9,701.7 L2889.7,615.6 L2893.3,607.8 L2896.3,614.0 L2899.4,747.2 L2904.2,662.2 L2907.8,654.3 L2910.8,659.5 L2914.4,726.7 L2919.2,660.9 L2922.8,653.7 L2925.8,658.2 L2928.9,728.1 L2933.7,638.2 L2937.3,623.6 L2940.3,638.6 L2943.0,708.0 L2947.8,623.9 L2951.4,608.6 L2954.4,608.7 L2957.7,747.9 L2962.5,673.3 L2966.1,658.3 L2969.1,662.8 L2971.7,737.0 L2976.5,661.5 L2980.1,646.4 L2983.1,655.5 L2986.3,725.2 L2991.1,637.1 L2994.7,625.4 L2997.7,632.4 L3000.1,695.2 L3004.9,618.5 L3008.5,605.6 L3011.5,609.5 L3014.6,751.3 L3019.4,683.2 L3023.0,666.6 L3026.0,675.7 L3029.2,743.2 L3034.0,663.2 L3037.6,648.9 L3040.6,655.0 L3044.0,718.0 L3048.8,625.8 L3052.4,611.2 L3055.4,620.7 L3057.6,711.0 L3062.4,608.5 L3066.0,595.2 L3069.0,602.5 L3072.6,760.7 L3077.4,674.2 L3081.0,659.0 L3084.0,671.1 L3086.4,741.5 L3091.2,660.9 L3094.8,648.4 L3097.8,662.1 L3100.8,705.1 L3105.6,636.5 L3109.2,625.3 L3112.2,636.9 L3115.1,706.4 L3119.9,628.2 L3123.5,610.7 L3126.5,612.2 L3130.0,748.6 L3134.8,670.3 L3138.4,662.6 L3141.4,662.7 L3144.6,734.0 L3149.4,648.7 L3153.0,630.8 L3156.0,644.0 L3159.1,708.8 L3163.9,632.7 L3167.5,622.3 L3170.5,626.7 L3173.2,708.3 L3178.0,593.6 L3181.6,581.8 L3184.6,596.1 L3187.2,743.9 L3192.0,684.9 L3195.6,673.3 L3198.6,681.7 L3201.5,715.6 L3206.3,665.2 L3209.9,655.3 L3212.9,659.4 L3216.4,711.5 L3221.2,636.9 L3224.8,618.5 L3227.8,631.0 L3230.4,690.8 L3235.2,600.2 L3238.8,590.0 L3241.8,596.3 L3245.0,738.1 L3249.8,689.6 L3253.4,684.5 L3256.4,691.2 L3259.3,709.4 L3264.1,657.2 L3267.7,644.5 L3270.7,648.9 L3274.3,704.3 L3279.1,627.7 L3282.7,613.4 L3285.7,615.8 L3288.4,690.2 L3293.2,596.0 L3296.8,586.9 L3299.8,587.9 L3302.2,721.1 L3307.0,697.4 L3310.6,691.9 L3313.6,692.2 L3316.5,717.5 L3321.3,661.2 L3324.9,649.2 L3327.9,653.2 L3331.7,708.1 L3336.5,625.2 L3340.1,615.8 L3343.1,629.1 L3345.3,681.9 L3350.1,619.6 L3353.7,609.9 L3356.7,619.4 L3360.1,734.3 L3364.9,691.7 L3368.5,684.6 L3371.5,686.0 L3374.9,727.5 L3379.7,650.6 L3383.3,633.1 L3386.3,642.7 L3389.4,707.7 L3394.2,626.5 L3397.8,617.3 L3400.8,620.3 L3402.9,690.2 L3407.7,589.6 L3411.3,580.1 L3414.3,584.5 L3418.0,720.5 L3422.8,683.8 L3426.4,680.4 L3429.4,686.2 L3431.8,715.3 L3436.6,647.1 L3440.2,632.1 L3443.2,639.3 L3446.4,702.2 L3451.2,627.0 L3454.8,613.2 L3457.8,621.2 L3461.0,678.6 L3465.8,575.5 L3469.4,564.3 L3472.4,564.7 L3475.0,724.8 L3479.8,675.7 L3483.4,669.4 L3486.4,677.7 L3489.3,729.0 L3494.1,644.2 L3497.7,632.8 L3500.7,644.3 L3504.0,707.2 L3508.8,620.8 L3512.4,604.7 L3515.4,619.4 L3518.3,700.5 L3523.1,592.3 L3526.7,573.3 L3529.7,581.9 L3532.4,745.6 L3537.2,685.2 L3540.8,670.8 L3543.8,675.9 L3547.2,711.0 L3552.0,648.0 L3555.6,637.1 L3558.6,644.9 L3561.2,713.3 L3566.0,643.0 L3569.6,627.5 L3572.6,635.7 L3575.9,700.7 L3580.7,578.2 L3584.3,564.3 L3587.3,575.7 L3590.0,742.3 L3594.8,663.9 L3598.4,647.1 L3601.4,657.6 L3604.9,714.1 L3609.7,649.3 L3613.3,639.6 L3616.3,650.1 L3619.1,709.3 L3623.9,609.9 L3627.5,595.8 L3630.5,610.5 L3633.6,688.8 L3638.4,577.6 L3642.0,558.8 L3645.0,575.4 L3648.0,725.8 L3652.8,657.6 L3656.4,648.6 L3659.4,658.6 L3662.4,713.6 L3667.2,664.8 L3670.8,660.0 L3673.8,666.1 L3677.1,704.8 L3681.9,627.5 L3685.5,608.9 L3688.5,622.2 L3691.4,684.5 L3696.2,599.8 L3699.8,579.1 L3702.8,581.6 L3705.4,727.7 L3710.2,667.0 L3713.8,653.8 L3716.8,654.7 L3719.8,715.6 L3724.6,643.1 L3728.2,634.7 L3731.2,644.4 L3734.2,701.8 L3739.0,611.5 L3742.6,598.2 L3745.6,606.0 L3748.4,686.7 L3753.2,583.8 L3756.8,560.7 L3759.8,573.8 L3763.3,737.8 L3768.1,665.7 L3771.7,656.3 L3774.7,658.4 L3777.7,719.1 L3782.5,641.7 L3786.1,628.5 L3789.1,632.7 L3792.0,686.0 L3796.8,612.8 L3800.4,599.4 L3803.4,601.3 L3806.2,689.4 L3811.0,573.3 L3814.6,563.1 L3817.6,566.9 L3820.2,717.2 L3825.0,655.8 L3828.6,647.2 L3831.6,657.5 L3835.2,698.3 L3840.0,637.0 L3843.6,629.6 L3846.6,631.8 L3848.9,704.9 L3853.7,610.8 L3857.3,589.4 L3860.3,592.4 L3863.8,691.5 L3868.6,582.6 L3872.2,571.0 L3875.2,587.6 L3878.1,727.2 L3882.9,652.4 L3886.5,642.9 L3889.5,648.4 L3892.0,690.6 L3896.8,626.8 L3900.4,619.5 L3903.4,628.4 L3907.0,692.8 L3911.8,603.9 L3915.4,586.9 L3918.4,589.1 L3920.9,677.4 L3925.7,583.4 L3929.3,571.6 L3932.3,573.4 L3935.8,717.0 L3940.6,653.7 L3944.2,639.1 L3947.2,639.2 L3950.1,713.6 L3954.9,634.1 L3958.5,623.9 L3961.5,631.8 L3964.2,688.6 L3969.0,614.2 L3972.6,596.6 L3975.6,600.7 L3978.5,677.9 L3983.3,586.4 L3986.9,572.0 L3989.9,581.5 L3992.9,724.8 L3997.7,653.7 L4001.3,638.3 L4004.3,644.5 L4008.0,705.0 L4012.8,635.0 L4016.4,626.4 L4019.4,630.7 L4022.3,691.8 L4027.1,619.2 L4030.7,609.6 L4033.7,615.0 L4035.9,677.1 L4040.7,579.0 L4044.3,569.9 L4047.3,580.6 L4050.7,722.2 L4055.5,656.9 L4059.1,649.9 L4062.1,658.5 L4065.1,708.0 L4069.9,631.2 L4073.5,623.7 L4076.5,625.1 L4079.9,687.3 L4084.7,610.3 L4088.3,592.7 L4091.3,601.9 L4094.4,671.3 L4099.2,599.8 L4102.8,585.1 L4105.8,589.9 L4108.7,712.1 L4113.5,651.8 L4117.1,646.3 L4121.7,661.2" fill="none" stroke="#F47D2A" stroke-width="1.9" stroke-linejoin="round"/>
<path d="M221.3,1136.5 L305.5,1136.5 L308.5,1122.4 L363.1,1122.4 L366.1,1108.1 L420.6,1108.1 L423.6,1093.1 L478.1,1093.1 L481.1,1079.3 L535.7,1079.3 L538.7,1065.0 L593.2,1065.0 L596.2,1049.9 L650.8,1049.9 L653.8,1035.9 L708.3,1035.9 L711.3,1021.8 L765.9,1021.8 L768.9,1007.6 L823.4,1007.6 L826.4,993.1 L881.0,993.1 L884.0,977.4 L938.5,977.4 L941.5,961.4 L996.1,961.4 L999.1,946.3 L1053.7,946.3 L1056.7,930.4 L1111.2,930.4 L1114.2,914.8 L1169.5,914.8 L1172.0,900.5 L1176.5,900.5 L1179.0,914.8 L1226.3,914.8 L1229.3,897.4 L1283.8,897.4 L1286.8,882.1 L1341.4,882.1 L1344.4,869.2 L1399.0,869.2 L1402.0,852.7 L1456.5,852.7 L1459.5,838.6 L1514.0,838.6 L1517.0,825.0 L1571.6,825.0 L1574.6,811.4 L1629.1,811.4 L1632.1,795.7 L1686.5,795.7 L1689.0,781.4 L1693.5,781.4 L1696.0,795.7 L1744.2,795.7 L1747.2,781.4 L1801.8,781.4 L1804.8,767.8 L1859.3,767.8 L1862.3,754.2 L1916.9,754.2 L1919.9,738.4 L1974.4,738.4 L1977.4,725.1 L2032.0,725.1 L2035.0,710.7 L2089.6,710.7 L2092.6,695.7 L2147.1,695.7 L2150.1,682.1 L2204.5,682.1 L2207.0,667.8 L2211.5,667.8 L2214.0,682.1 L2262.2,682.1 L2265.2,660.3 L2319.8,660.3 L2322.8,644.0 L2377.3,644.0 L2380.3,631.8 L2434.8,631.8 L2437.8,615.4 L2492.4,615.4 L2495.4,599.1 L2549.9,599.1 L2552.9,585.5 L2607.5,585.5 L2610.5,572.7 L2665.0,572.7 L2668.0,556.4 L2723.0,556.4 L2725.5,542.1 L2730.0,542.1 L2732.5,556.4 L2780.2,556.4 L2783.2,541.4 L2837.7,541.4 L2840.7,527.8 L2895.2,527.8 L2898.2,516.2 L2952.8,516.2 L2955.8,502.0 L3010.3,502.0 L3013.3,487.0 L3067.9,487.0 L3070.9,472.6 L3125.4,472.6 L3128.4,458.4 L3183.0,458.4 L3186.0,443.9 L3240.5,443.9 L3243.5,440.7 L3298.1,440.7 L3301.1,425.8 L3355.6,425.8 L3358.6,412.2 L3413.2,412.2 L3416.2,398.6 L3470.8,398.6 L3473.8,382.2 L3528.3,382.2 L3531.3,365.9 L3585.8,365.9 L3588.8,350.9 L3643.4,350.9 L3646.4,334.6 L3700.9,334.6 L3703.9,318.3 L3758.0,318.3 L3760.5,304.0 L3765.0,304.0 L3767.5,318.3 L3816.0,318.3 L3819.0,302.0 L3873.6,302.0 L3876.6,285.6 L3931.1,285.6 L3934.1,273.4 L3988.7,273.4 L3991.7,257.1 L4046.2,257.1 L4049.2,240.7 L4103.8,240.7 L4106.8,229.8 L4120.2,229.8 L4121.2,227.1" fill="none" stroke="#E8505C" stroke-width="1.9" stroke-linejoin="round"/>
<path d="M221.3,1136.0 L305.5,1136.0 L308.5,1121.8 L363.1,1121.8 L366.1,1107.6 L420.6,1107.6 L423.6,1092.6 L478.1,1092.6 L481.1,1078.7 L535.7,1078.7 L538.7,1064.4 L593.2,1064.4 L596.2,1049.3 L650.8,1049.3 L653.8,1035.3 L708.3,1035.3 L711.3,1021.3 L765.9,1021.3 L768.9,1007.0 L823.4,1007.0 L826.4,992.6 L881.0,992.6 L884.0,976.8 L938.5,976.8 L941.5,960.9 L996.1,960.9 L999.1,945.8 L1053.7,945.8 L1056.7,929.9 L1111.2,929.9 L1114.2,914.2 L1169.5,914.2 L1172.0,899.9 L1176.5,899.9 L1179.0,914.2 L1226.3,914.2 L1229.3,896.8 L1283.8,896.8 L1286.8,881.6 L1341.4,881.6 L1344.4,868.6 L1399.0,868.6 L1402.0,852.2 L1456.5,852.2 L1459.5,838.0 L1514.0,838.0 L1517.0,824.4 L1571.6,824.4 L1574.6,810.8 L1629.1,810.8 L1632.1,795.2 L1686.5,795.2 L1689.0,780.9 L1693.5,780.9 L1696.0,795.2 L1744.2,795.2 L1747.2,780.9 L1801.8,780.9 L1804.8,767.3 L1859.3,767.3 L1862.3,753.7 L1916.9,753.7 L1919.9,737.9 L1974.4,737.9 L1977.4,724.6 L2032.0,724.6 L2035.0,710.1 L2089.6,710.1 L2092.6,695.2 L2147.1,695.2 L2150.1,681.6 L2204.5,681.6 L2207.0,667.3 L2211.5,667.3 L2214.0,681.6 L2262.2,681.6 L2265.2,659.8 L2319.8,659.8 L2322.8,643.5 L2377.3,643.5 L2380.3,631.2 L2434.8,631.2 L2437.8,614.9 L2492.4,614.9 L2495.4,598.6 L2549.9,598.6 L2552.9,585.0 L2607.5,585.0 L2610.5,570.0 L2665.0,570.0 L2668.0,553.7 L2723.0,553.7 L2725.5,539.4 L2730.0,539.4 L2732.5,553.7 L2780.2,553.7 L2783.2,538.7 L2837.7,538.7 L2840.7,525.1 L2895.2,525.1 L2898.2,513.5 L2952.8,513.5 L2955.8,499.2 L3010.3,499.2 L3013.3,484.3 L3067.9,484.3 L3070.9,469.9 L3125.4,469.9 L3128.4,455.7 L3183.0,455.7 L3186.0,452.0 L3240.5,452.0 L3243.5,438.0 L3298.1,438.0 L3301.1,423.0 L3355.6,423.0 L3358.6,409.4 L3413.2,409.4 L3416.2,395.8 L3470.8,395.8 L3473.8,379.5 L3528.3,379.5 L3531.3,363.2 L3585.8,363.2 L3588.8,348.2 L3643.4,348.2 L3646.4,331.9 L3700.9,331.9 L3703.9,315.6 L3758.0,315.6 L3760.5,301.3 L3765.0,301.3 L3767.5,315.6 L3816.0,315.6 L3819.0,299.2 L3873.6,299.2 L3876.6,282.9 L3931.1,282.9 L3934.1,270.7 L3988.7,270.7 L3991.7,254.3 L4046.2,254.3 L4049.2,238.0 L4103.8,238.0 L4106.8,227.1 L4120.2,227.1 L4121.2,224.4" fill="none" stroke="#5A91EE" stroke-width="1.9" stroke-linejoin="round"/>
</g>
<path d="M93.6,230.3 H4303.7 M4136.3,129 V1136" stroke="#ccccdc" stroke-opacity="0.5" stroke-width="1.4" stroke-dasharray="2.2 3.8" fill="none"/>
<circle cx="4121.7" cy="801.3" r="8" fill="#6FB465" fill-opacity="0.35"/><circle cx="4121.7" cy="801.3" r="5.6" fill="#6FB465"/>
<circle cx="4121.7" cy="904.0" r="8" fill="#EEC33A" fill-opacity="0.35"/><circle cx="4121.7" cy="904.0" r="5.6" fill="#EEC33A"/>
<circle cx="4121.7" cy="565.9" r="8" fill="#8AB8FF" fill-opacity="0.35"/><circle cx="4121.7" cy="565.9" r="5.6" fill="#8AB8FF"/>
<circle cx="4121.7" cy="661.2" r="8" fill="#F47A2A" fill-opacity="0.35"/><circle cx="4121.7" cy="661.2" r="5.6" fill="#F47A2A"/>
<circle cx="4121.7" cy="229.8" r="8" fill="#E8505C" fill-opacity="0.35"/><circle cx="4121.7" cy="229.8" r="5.6" fill="#E8505C"/>
<circle cx="4121.7" cy="225.8" r="8" fill="#5592EE" fill-opacity="0.35"/><circle cx="4121.7" cy="225.8" r="5.6" fill="#5592EE"/>
<rect x="28.8" y="1189.0" width="22.3" height="6.0" rx="3" fill="#6FB465" />
<text x="64.5" y="1198.5" font-size="18.99" fill="#ccccdc" textLength="543.0" lengthAdjust="spacingAndGlyphs" stroke="#ccccdc" stroke-width="0.28" text-anchor="start" >prometheus-test-main-67d499d485-t5pfg memeory_cache</text>
<rect x="624.0" y="1189.0" width="22.3" height="6.0" rx="3" fill="#EEC33A" />
<text x="658.6" y="1198.5" font-size="18.99" fill="#ccccdc" textLength="571.4" lengthAdjust="spacingAndGlyphs" stroke="#ccccdc" stroke-width="0.28" text-anchor="start" >prometheus-test-pr-15365-775b97fc4c-9jvr8 memeory_cache</text>
<rect x="1246.4" y="1189.0" width="22.3" height="6.0" rx="3" fill="#8AB8FF" />
<text x="1280.7" y="1198.5" font-size="18.99" fill="#ccccdc" textLength="591.3" lengthAdjust="spacingAndGlyphs" stroke="#ccccdc" stroke-width="0.28" text-anchor="start" >prometheus-test-main-67d499d485-t5pfg memory_usage_bytes</text>
<rect x="1889.0" y="1189.0" width="22.3" height="6.0" rx="3" fill="#F47A2A" />
<text x="1924.0" y="1198.5" font-size="18.99" fill="#ccccdc" textLength="618.8" lengthAdjust="spacingAndGlyphs" stroke="#ccccdc" stroke-width="0.28" text-anchor="start" >prometheus-test-pr-15365-775b97fc4c-9jvr8 memory_usage_bytes</text>
<rect x="2559.0" y="1189.0" width="22.3" height="6.0" rx="3" fill="#E8505C" />
<text x="2593.8" y="1198.5" font-size="18.99" fill="#ccccdc" textLength="211.5" lengthAdjust="spacingAndGlyphs" stroke="#ccccdc" stroke-width="0.28" text-anchor="start" >test-main blocks_bytes</text>
<rect x="2822.0" y="1189.0" width="22.3" height="6.0" rx="3" fill="#5592EE" />
<text x="2856.0" y="1198.5" font-size="18.99" fill="#ccccdc" textLength="250.5" lengthAdjust="spacingAndGlyphs" stroke="#ccccdc" stroke-width="0.28" text-anchor="start" >test-pr-15365 blocks_bytes</text>
<rect x="1999.0" y="1231.0" width="316.3" height="6.0" rx="3" fill="#3a3c42" />
<rect x="4340.0" y="1120.0" width="6.2" height="130.0" rx="3" fill="#3a3c42" />
<rect x="4290.5" y="53.8" width="39.0" height="50.5" rx="3" fill="#202226" stroke="#2b2d33" stroke-width="1.3" filter="url(#sh)"/>
<circle cx="4309.6" cy="71.2" r="2.1" fill="#9a9aa6"/>
<circle cx="4309.6" cy="78.6" r="2.1" fill="#9a9aa6"/>
<circle cx="4309.6" cy="85.9" r="2.1" fill="#9a9aa6"/>
<rect x="4356.3" y="27.2" width="700.0" height="49.4" rx="4" fill="#22252b" stroke="#2b2d33" stroke-width="1.3" />
<defs><linearGradient id="tsg" x1="0" y1="0" x2="0" y2="1"><stop offset="0" stop-color="#3b6fd0" stop-opacity="0.95"/><stop offset="1" stop-color="#3b6fd0" stop-opacity="0"/></linearGradient></defs>
<path d="M4369.2,53.4 L4375.2,49.5 L4379.8,51.4 L4386.4,46.8 L4390.4,49.5 L4393.7,44.8 L4393.7,62 L4369.2,62 Z" fill="url(#tsg)"/>
<path d="M4369.2,53.4 L4375.2,49.5 L4379.8,51.4 L4386.4,46.8 L4390.4,49.5 L4393.7,44.8" fill="none" stroke="#5b8ff0" stroke-width="1.5"/>
<path d="M4369.2,46.2 L4375.2,44.2 L4379.8,46.8 L4386.4,41.5 L4390.4,43.5 L4393.7,40.2" fill="none" stroke="#f0a93a" stroke-width="1.6"/>
<text x="4408.3" y="61.0" font-size="25.56" fill="#ccccdc" textLength="123.3" lengthAdjust="spacingAndGlyphs" stroke="#ccccdc" stroke-width="0.5" text-anchor="start" >Time series</text>
<rect x="4356.3" y="102.6" width="700.0" height="1200.0" rx="4" fill="#181b1f" stroke="#2b2d33" stroke-width="1.3" />
<rect x="4369.4" y="115.9" width="700.0" height="50.1" rx="3" fill="#111217" stroke="#2b2d33" stroke-width="1.3" />
<circle cx="4393.3" cy="140.9" r="9" fill="none" stroke="#8e8e9b" stroke-width="2"/><path d="M4399.8,147.4 L4404.6,152.2" stroke="#8e8e9b" stroke-width="2"/>
<text x="4415.1" y="149.0" font-size="22.77" fill="#8e8e9b" textLength="155.2" lengthAdjust="spacingAndGlyphs" stroke="#8e8e9b" stroke-width="0.28" text-anchor="start" >Search options</text>
<rect x="4369.4" y="179.5" width="700.0" height="48.9" rx="3" fill="#181b1f" stroke="#2b2d33" stroke-width="1.3" />
<rect x="4730.0" y="183.6" width="400.0" height="40.4" rx="3" fill="#22252b" />
<text x="4538.5" y="212.5" font-size="22.77" fill="#8e8e9b" textLength="25.3" lengthAdjust="spacingAndGlyphs" stroke="#8e8e9b" stroke-width="0.28" text-anchor="start" >All</text>
<text x="4855.5" y="212.5" font-size="22.77" fill="#ccccdc" textLength="105.0" lengthAdjust="spacingAndGlyphs" stroke="#ccccdc" stroke-width="0.5" text-anchor="start" >Overrides</text>
<path d="M4375.6,276.0 L4380.5,281.7 L4385.4,276.0" fill="none" stroke="#ccccdc" stroke-width="1.6"/>
<text x="4406.7" y="287.4" font-size="23.32" fill="#ccccdc" textLength="112.3" lengthAdjust="spacingAndGlyphs" stroke="#ccccdc" stroke-width="0.4" text-anchor="start" >Override 1</text>
<text x="4407.4" y="336.7" font-size="20.11" fill="#ccccdc" textLength="155.0" lengthAdjust="spacingAndGlyphs" stroke="#ccccdc" stroke-width="0.4" text-anchor="start" >Fields with name</text>
<rect x="4407.4" y="347.5" width="700.0" height="49.9" rx="3" fill="#111217" stroke="#2b2d33" stroke-width="1.3" />
<text x="4421.4" y="381.1" font-size="22.91" fill="#ccccdc" textLength="309.7" lengthAdjust="spacingAndGlyphs" stroke="#ccccdc" stroke-width="0.28" text-anchor="start" >Chunks to persist</text>
<text x="4407.4" y="444.1" font-size="20.53" fill="#ccccdc" textLength="157.3" lengthAdjust="spacingAndGlyphs" stroke="#ccccdc" stroke-width="0.4" text-anchor="start" >Standard options</text>
<path d="M4578.5,433.5 L4584,438.0 L4578.5,442.5" fill="none" stroke="#ccccdc" stroke-width="1.6"/>
<text x="4597.5" y="444.1" font-size="20.53" fill="#ccccdc" textLength="126.9" lengthAdjust="spacingAndGlyphs" stroke="#ccccdc" stroke-width="0.4" text-anchor="start" >Color scheme</text>
<rect x="4407.4" y="458.5" width="700.0" height="48.9" rx="3" fill="#111217" stroke="#2b2d33" stroke-width="1.3" />
<text x="4421.0" y="491.3" font-size="22.91" fill="#ccccdc" textLength="125.6" lengthAdjust="spacingAndGlyphs" stroke="#ccccdc" stroke-width="0.28" text-anchor="start" >Single color</text>
<path d="M4971,480.0 L4976,485.0 L4981,480.0" fill="none" stroke="#8e8e9b" stroke-width="1.6"/>
<rect x="4407.4" y="534.1" width="257.2" height="37.6" rx="3" fill="#22252b" stroke="#2b2d33" stroke-width="1.3" />
<path d="M4430,546.5 V561.0 M4422.8,553.8 H4437.4" stroke="#ccccdc" stroke-width="1.8"/>
<text x="4447.7" y="560.7" font-size="20.95" fill="#ccccdc" textLength="204.2" lengthAdjust="spacingAndGlyphs" stroke="#ccccdc" stroke-width="0.4" text-anchor="start" >Add override property</text>
<line x1="4357" y1="585.7" x2="4978" y2="585.7" stroke="#2b2d33" stroke-width="1.3"/>
<path d="M4375.6,607.8 L4380.5,613.5 L4385.4,607.8" fill="none" stroke="#ccccdc" stroke-width="1.6"/>
<text x="4406.7" y="619.2" font-size="23.32" fill="#ccccdc" textLength="112.3" lengthAdjust="spacingAndGlyphs" stroke="#ccccdc" stroke-width="0.4" text-anchor="start" >Override 2</text>
<text x="4407.4" y="668.5" font-size="20.11" fill="#ccccdc" textLength="155.0" lengthAdjust="spacingAndGlyphs" stroke="#ccccdc" stroke-width="0.4" text-anchor="start" >Fields with name</text>
<rect x="4407.4" y="679.3" width="700.0" height="49.9" rx="3" fill="#111217" stroke="#2b2d33" stroke-width="1.3" />
<text x="4421.4" y="712.9" font-size="22.91" fill="#ccccdc" textLength="309.7" lengthAdjust="spacingAndGlyphs" stroke="#ccccdc" stroke-width="0.28" text-anchor="start" >Chunks to persist (not found)</text>
<text x="4407.4" y="775.9" font-size="20.53" fill="#ccccdc" textLength="157.3" lengthAdjust="spacingAndGlyphs" stroke="#ccccdc" stroke-width="0.4" text-anchor="start" >Standard options</text>
<path d="M4578.5,765.3 L4584,769.8 L4578.5,774.3" fill="none" stroke="#ccccdc" stroke-width="1.6"/>
<text x="4597.5" y="775.9" font-size="20.53" fill="#ccccdc" textLength="126.9" lengthAdjust="spacingAndGlyphs" stroke="#ccccdc" stroke-width="0.4" text-anchor="start" >Color scheme</text>
<rect x="4407.4" y="790.3" width="700.0" height="48.9" rx="3" fill="#111217" stroke="#2b2d33" stroke-width="1.3" />
<text x="4421.0" y="823.1" font-size="22.91" fill="#ccccdc" textLength="125.6" lengthAdjust="spacingAndGlyphs" stroke="#ccccdc" stroke-width="0.28" text-anchor="start" >Single color</text>
<path d="M4971,811.8 L4976,816.8 L4981,811.8" fill="none" stroke="#8e8e9b" stroke-width="1.6"/>
<rect x="4407.4" y="865.9" width="257.2" height="37.6" rx="3" fill="#22252b" stroke="#2b2d33" stroke-width="1.3" />
<path d="M4430,878.3 V892.8 M4422.8,885.6 H4437.4" stroke="#ccccdc" stroke-width="1.8"/>
<text x="4447.7" y="892.5" font-size="20.95" fill="#ccccdc" textLength="204.2" lengthAdjust="spacingAndGlyphs" stroke="#ccccdc" stroke-width="0.4" text-anchor="start" >Add override property</text>
<line x1="4357" y1="917.5" x2="4978" y2="917.5" stroke="#2b2d33" stroke-width="1.3"/>
<path d="M4375.6,939.6 L4380.5,945.3 L4385.4,939.6" fill="none" stroke="#ccccdc" stroke-width="1.6"/>
<text x="4406.7" y="951.0" font-size="23.32" fill="#ccccdc" textLength="112.3" lengthAdjust="spacingAndGlyphs" stroke="#ccccdc" stroke-width="0.4" text-anchor="start" >Override 3</text>
<text x="4407.4" y="1000.3" font-size="20.11" fill="#ccccdc" textLength="155.0" lengthAdjust="spacingAndGlyphs" stroke="#ccccdc" stroke-width="0.4" text-anchor="start" >Fields with name</text>
<rect x="4407.4" y="1011.1" width="700.0" height="49.9" rx="3" fill="#111217" stroke="#2b2d33" stroke-width="1.3" />
<text x="4421.4" y="1044.7" font-size="22.91" fill="#ccccdc" textLength="252.0" lengthAdjust="spacingAndGlyphs" stroke="#ccccdc" stroke-width="0.28" text-anchor="start" >Max chunks (not found)</text>
<text x="4407.4" y="1107.7" font-size="20.53" fill="#ccccdc" textLength="157.3" lengthAdjust="spacingAndGlyphs" stroke="#ccccdc" stroke-width="0.4" text-anchor="start" >Standard options</text>
<path d="M4578.5,1097.1 L4584,1101.6 L4578.5,1106.1" fill="none" stroke="#ccccdc" stroke-width="1.6"/>
<text x="4597.5" y="1107.7" font-size="20.53" fill="#ccccdc" textLength="126.9" lengthAdjust="spacingAndGlyphs" stroke="#ccccdc" stroke-width="0.4" text-anchor="start" >Color scheme</text>
<rect x="4407.4" y="1122.1" width="700.0" height="48.9" rx="3" fill="#111217" stroke="#2b2d33" stroke-width="1.3" />
<text x="4421.0" y="1154.9" font-size="22.91" fill="#ccccdc" textLength="125.6" lengthAdjust="spacingAndGlyphs" stroke="#ccccdc" stroke-width="0.28" text-anchor="start" >Single color</text>
<path d="M4971,1143.6 L4976,1148.6 L4981,1143.6" fill="none" stroke="#8e8e9b" stroke-width="1.6"/>
<rect x="4407.4" y="1197.7" width="257.2" height="37.6" rx="3" fill="#22252b" stroke="#2b2d33" stroke-width="1.3" />
<path d="M4430,1210.1 V1224.6 M4422.8,1217.4 H4437.4" stroke="#ccccdc" stroke-width="1.8"/>
<text x="4447.7" y="1224.3" font-size="20.95" fill="#ccccdc" textLength="204.2" lengthAdjust="spacingAndGlyphs" stroke="#ccccdc" stroke-width="0.4" text-anchor="start" >Add override property</text>
<line x1="4357" y1="585.7" x2="4978" y2="585.7" stroke="#2b2d33" stroke-width="1.3"/>
<rect x="4152.3" y="245.6" width="780.0" height="234.0" rx="4" fill="#22252b" filter="url(#sh)"/>
<text x="4165.4" y="281.0" font-size="19.69" fill="#ccccdc" textLength="191.8" lengthAdjust="spacingAndGlyphs" stroke="#ccccdc" stroke-width="0.28" text-anchor="start" >2024-12-20 13:10:00</text>
<rect x="4165.4" y="301.6" width="21.6" height="6.0" rx="3" fill="#6FB465" />
<text x="4199.7" y="310.1" font-size="18.99" fill="#ccccdc" textLength="543.3" lengthAdjust="spacingAndGlyphs" stroke="#ccccdc" stroke-width="0.28" text-anchor="start" >prometheus-test-main-67d499d485-t5pfg memeory_cache</text>
<text x="4848.3" y="310.1" font-size="18.99" fill="#ccccdc" textLength="71.0" lengthAdjust="spacingAndGlyphs" stroke="#ccccdc" stroke-width="0.28" text-anchor="start" >24.7 GB</text>
<rect x="4165.4" y="331.2" width="21.6" height="6.0" rx="3" fill="#EEC33A" />
<text x="4199.7" y="339.8" font-size="18.99" fill="#ccccdc" textLength="572.1" lengthAdjust="spacingAndGlyphs" stroke="#ccccdc" stroke-width="0.28" text-anchor="start" >prometheus-test-pr-15365-775b97fc4c-9jvr8 memeory_cache</text>
<text x="4859.5" y="339.8" font-size="18.99" fill="#ccccdc" textLength="59.8" lengthAdjust="spacingAndGlyphs" stroke="#ccccdc" stroke-width="0.28" text-anchor="start" >17.1 GB</text>
<rect x="4165.4" y="360.9" width="21.6" height="6.0" rx="3" fill="#8AB8FF" />
<text x="4199.7" y="369.4" font-size="18.99" fill="#ccccdc" textLength="592.6" lengthAdjust="spacingAndGlyphs" stroke="#ccccdc" stroke-width="0.28" text-anchor="start" >prometheus-test-main-67d499d485-t5pfg memory_usage_bytes</text>
<text x="4851.0" y="369.4" font-size="18.99" fill="#ccccdc" textLength="68.3" lengthAdjust="spacingAndGlyphs" stroke="#ccccdc" stroke-width="0.28" text-anchor="start" >41.9 GB</text>
<rect x="4165.4" y="390.6" width="21.6" height="6.0" rx="3" fill="#F47A2A" />
<text x="4199.7" y="399.1" font-size="18.99" fill="#ccccdc" textLength="620.6" lengthAdjust="spacingAndGlyphs" stroke="#ccccdc" stroke-width="0.28" text-anchor="start" >prometheus-test-pr-15365-775b97fc4c-9jvr8 memory_usage_bytes</text>
<text x="4847.2" y="399.1" font-size="18.99" fill="#ccccdc" textLength="72.1" lengthAdjust="spacingAndGlyphs" stroke="#ccccdc" stroke-width="0.28" text-anchor="start" >34.9 GB</text>
<rect x="4165.4" y="420.2" width="21.6" height="6.0" rx="3" fill="#E8505C" />
<text x="4199.7" y="428.7" font-size="19.27" fill="#ffffff" textLength="214.6" lengthAdjust="spacingAndGlyphs" stroke="#ffffff" stroke-width="0.55" text-anchor="start" >test-main blocks_bytes</text>
<text x="4846.4" y="428.7" font-size="19.27" fill="#ffffff" textLength="72.9" lengthAdjust="spacingAndGlyphs" stroke="#ffffff" stroke-width="0.55" text-anchor="start" >66.6 GB</text>
<rect x="4165.4" y="449.9" width="21.6" height="6.0" rx="3" fill="#5592EE" />
<text x="4199.7" y="458.4" font-size="18.99" fill="#ccccdc" textLength="250.0" lengthAdjust="spacingAndGlyphs" stroke="#ccccdc" stroke-width="0.28" text-anchor="start" >test-pr-15365 blocks_bytes</text>
<text x="4847.2" y="458.4" font-size="18.99" fill="#ccccdc" textLength="72.1" lengthAdjust="spacingAndGlyphs" stroke="#ccccdc" stroke-width="0.28" text-anchor="start" >66.9 GB</text>
</svg></body></html>
